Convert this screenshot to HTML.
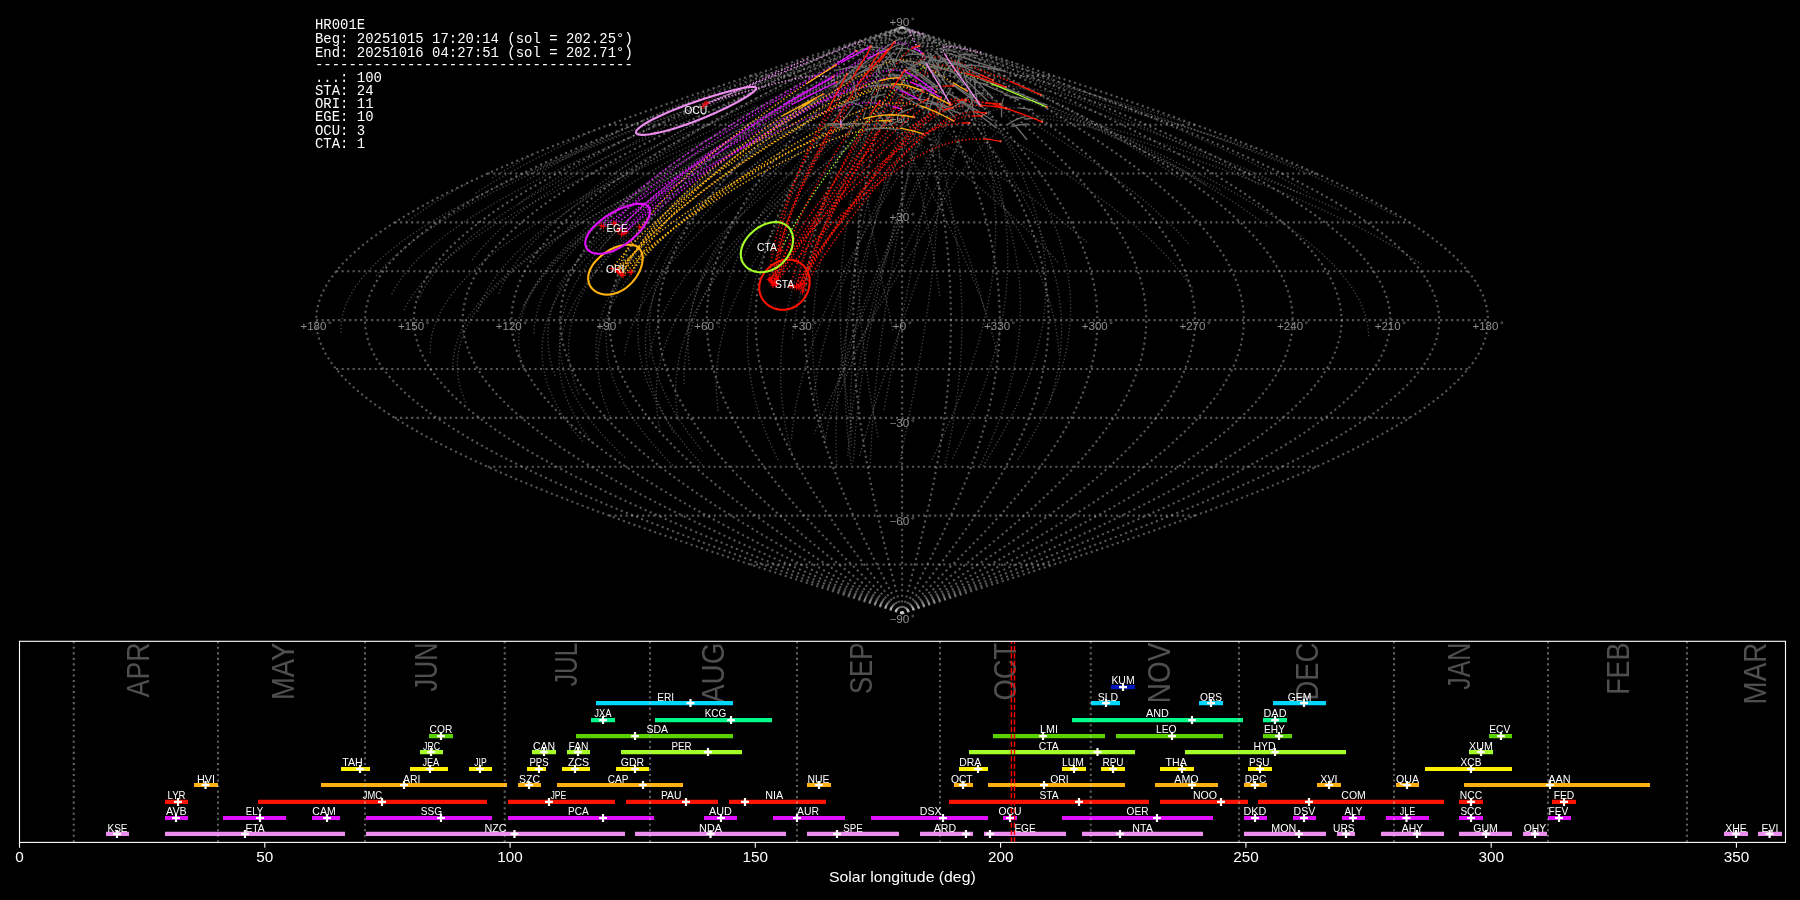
<!DOCTYPE html>
<html><head><meta charset="utf-8"><title>HR001E shower association</title>
<style>html,body{margin:0;padding:0;background:#000;overflow:hidden}svg{display:block}text{white-space:pre}</style></head>
<body>
<svg width="1800" height="900" viewBox="0 0 1800 900">
<defs><filter id="nf" color-interpolation-filters="sRGB"><feOffset dx="0" dy="0"/></filter></defs>
<rect width="1800" height="900" fill="#000"/>
<g fill="none" stroke="#c8c8c8" stroke-opacity="0.44" stroke-width="2.08" stroke-dasharray="2.08 3.43"><path d="M902.1 613.4L927.7 605.2L953.2 597.1L978.6 588.9L1003.9 580.8L1028.9 572.6L1053.8 564.5L1078.3 556.4L1102.5 548.2L1126.3 540.1L1149.8 531.9L1172.7 523.8L1195.1 515.6L1217 507.5L1238.2 499.3L1258.8 491.2L1278.8 483L1298 474.9L1316.5 466.8L1334.1 458.6L1351 450.5L1367 442.3L1382.1 434.2L1396.3 426L1409.6 417.9L1421.9 409.7L1433.2 401.6L1443.5 393.5L1452.8 385.3L1461 377.2L1468.1 369L1474.2 360.9L1479.2 352.7L1483.1 344.6L1485.9 336.4L1487.5 328.3L1488.1 320.1L1487.5 312L1485.9 303.9L1483.1 295.7L1479.2 287.6L1474.2 279.4L1468.1 271.3L1461 263.1L1452.8 255L1443.5 246.8L1433.2 238.7L1421.9 230.6L1409.6 222.4L1396.3 214.3L1382.1 206.1L1367 198L1351 189.8L1334.1 181.7L1316.5 173.5L1298 165.4L1278.8 157.2L1258.8 149.1L1238.2 141L1217 132.8L1195.1 124.7L1172.7 116.5L1149.8 108.4L1126.3 100.2L1102.5 92.1L1078.3 83.9L1053.8 75.8L1028.9 67.7L1003.9 59.5L978.6 51.4L953.2 43.2L927.7 35.1L902.1 26.9"/><path d="M902.1 613.4L925.5 605.2L948.9 597.1L972.2 588.9L995.4 580.8L1018.4 572.6L1041.1 564.5L1063.6 556.4L1085.8 548.2L1107.7 540.1L1129.1 531.9L1150.1 523.8L1170.7 515.6L1190.7 507.5L1210.2 499.3L1229.1 491.2L1247.4 483L1265 474.9L1281.9 466.8L1298.1 458.6L1313.6 450.5L1328.3 442.3L1342.1 434.2L1355.1 426L1367.3 417.9L1378.6 409.7L1388.9 401.6L1398.4 393.5L1406.9 385.3L1414.4 377.2L1421 369L1426.5 360.9L1431.1 352.7L1434.7 344.6L1437.2 336.4L1438.7 328.3L1439.3 320.1L1438.7 312L1437.2 303.9L1434.7 295.7L1431.1 287.6L1426.5 279.4L1421 271.3L1414.4 263.1L1406.9 255L1398.4 246.8L1388.9 238.7L1378.6 230.6L1367.3 222.4L1355.1 214.3L1342.1 206.1L1328.3 198L1313.6 189.8L1298.1 181.7L1281.9 173.5L1265 165.4L1247.4 157.2L1229.1 149.1L1210.2 141L1190.7 132.8L1170.7 124.7L1150.1 116.5L1129.1 108.4L1107.7 100.2L1085.8 92.1L1063.6 83.9L1041.1 75.8L1018.4 67.7L995.4 59.5L972.2 51.4L948.9 43.2L925.5 35.1L902.1 26.9"/><path d="M902.1 613.4L923.4 605.2L944.7 597.1L965.8 588.9L986.9 580.8L1007.8 572.6L1028.5 564.5L1048.9 556.4L1069.1 548.2L1089 540.1L1108.5 531.9L1127.6 523.8L1146.3 515.6L1164.5 507.5L1182.2 499.3L1199.4 491.2L1216 483L1232 474.9L1247.4 466.8L1262.1 458.6L1276.2 450.5L1289.5 442.3L1302.1 434.2L1313.9 426L1325 417.9L1335.2 409.7L1344.7 401.6L1353.3 393.5L1361 385.3L1367.8 377.2L1373.8 369L1378.8 360.9L1383 352.7L1386.2 344.6L1388.6 336.4L1390 328.3L1390.4 320.1L1390 312L1388.6 303.9L1386.2 295.7L1383 287.6L1378.8 279.4L1373.8 271.3L1367.8 263.1L1361 255L1353.3 246.8L1344.7 238.7L1335.2 230.6L1325 222.4L1313.9 214.3L1302.1 206.1L1289.5 198L1276.2 189.8L1262.1 181.7L1247.4 173.5L1232 165.4L1216 157.2L1199.4 149.1L1182.2 141L1164.5 132.8L1146.3 124.7L1127.6 116.5L1108.5 108.4L1089 100.2L1069.1 92.1L1048.9 83.9L1028.5 75.8L1007.8 67.7L986.9 59.5L965.8 51.4L944.7 43.2L923.4 35.1L902.1 26.9"/><path d="M902.1 613.4L921.3 605.2L940.4 597.1L959.5 588.9L978.4 580.8L997.2 572.6L1015.8 564.5L1034.3 556.4L1052.4 548.2L1070.3 540.1L1087.8 531.9L1105 523.8L1121.8 515.6L1138.2 507.5L1154.2 499.3L1169.6 491.2L1184.6 483L1199 474.9L1212.9 466.8L1226.1 458.6L1238.8 450.5L1250.8 442.3L1262.1 434.2L1272.8 426L1282.7 417.9L1291.9 409.7L1300.4 401.6L1308.1 393.5L1315.1 385.3L1321.3 377.2L1326.6 369L1331.2 360.9L1334.9 352.7L1337.8 344.6L1339.9 336.4L1341.2 328.3L1341.6 320.1L1341.2 312L1339.9 303.9L1337.8 295.7L1334.9 287.6L1331.2 279.4L1326.6 271.3L1321.3 263.1L1315.1 255L1308.1 246.8L1300.4 238.7L1291.9 230.6L1282.7 222.4L1272.8 214.3L1262.1 206.1L1250.8 198L1238.8 189.8L1226.1 181.7L1212.9 173.5L1199 165.4L1184.6 157.2L1169.6 149.1L1154.2 141L1138.2 132.8L1121.8 124.7L1105 116.5L1087.8 108.4L1070.3 100.2L1052.4 92.1L1034.3 83.9L1015.8 75.8L997.2 67.7L978.4 59.5L959.5 51.4L940.4 43.2L921.3 35.1L902.1 26.9"/><path d="M902.1 613.4L919.1 605.2L936.1 597.1L953.1 588.9L969.9 580.8L986.7 572.6L1003.2 564.5L1019.6 556.4L1035.7 548.2L1051.6 540.1L1067.2 531.9L1082.5 523.8L1097.4 515.6L1112 507.5L1126.2 499.3L1139.9 491.2L1153.2 483L1166 474.9L1178.3 466.8L1190.1 458.6L1201.4 450.5L1212 442.3L1222.1 434.2L1231.6 426L1240.4 417.9L1248.6 409.7L1256.2 401.6L1263 393.5L1269.2 385.3L1274.7 377.2L1279.4 369L1283.5 360.9L1286.8 352.7L1289.4 344.6L1291.3 336.4L1292.4 328.3L1292.8 320.1L1292.4 312L1291.3 303.9L1289.4 295.7L1286.8 287.6L1283.5 279.4L1279.4 271.3L1274.7 263.1L1269.2 255L1263 246.8L1256.2 238.7L1248.6 230.6L1240.4 222.4L1231.6 214.3L1222.1 206.1L1212 198L1201.4 189.8L1190.1 181.7L1178.3 173.5L1166 165.4L1153.2 157.2L1139.9 149.1L1126.2 141L1112 132.8L1097.4 124.7L1082.5 116.5L1067.2 108.4L1051.6 100.2L1035.7 92.1L1019.6 83.9L1003.2 75.8L986.7 67.7L969.9 59.5L953.1 51.4L936.1 43.2L919.1 35.1L902.1 26.9"/><path d="M902.1 613.4L917 605.2L931.9 597.1L946.7 588.9L961.5 580.8L976.1 572.6L990.6 564.5L1004.9 556.4L1019 548.2L1032.9 540.1L1046.6 531.9L1059.9 523.8L1073 515.6L1085.8 507.5L1098.2 499.3L1110.2 491.2L1121.8 483L1133 474.9L1143.8 466.8L1154.1 458.6L1164 450.5L1173.3 442.3L1182.1 434.2L1190.4 426L1198.1 417.9L1205.3 409.7L1211.9 401.6L1217.9 393.5L1223.3 385.3L1228.1 377.2L1232.3 369L1235.8 360.9L1238.7 352.7L1241 344.6L1242.6 336.4L1243.6 328.3L1243.9 320.1L1243.6 312L1242.6 303.9L1241 295.7L1238.7 287.6L1235.8 279.4L1232.3 271.3L1228.1 263.1L1223.3 255L1217.9 246.8L1211.9 238.7L1205.3 230.6L1198.1 222.4L1190.4 214.3L1182.1 206.1L1173.3 198L1164 189.8L1154.1 181.7L1143.8 173.5L1133 165.4L1121.8 157.2L1110.2 149.1L1098.2 141L1085.8 132.8L1073 124.7L1059.9 116.5L1046.6 108.4L1032.9 100.2L1019 92.1L1004.9 83.9L990.6 75.8L976.1 67.7L961.5 59.5L946.7 51.4L931.9 43.2L917 35.1L902.1 26.9"/><path d="M902.1 613.4L914.9 605.2L927.6 597.1L940.3 588.9L953 580.8L965.5 572.6L977.9 564.5L990.2 556.4L1002.3 548.2L1014.2 540.1L1025.9 531.9L1037.4 523.8L1048.6 515.6L1059.5 507.5L1070.2 499.3L1080.5 491.2L1090.4 483L1100 474.9L1109.3 466.8L1118.1 458.6L1126.5 450.5L1134.5 442.3L1142.1 434.2L1149.2 426L1155.8 417.9L1162 409.7L1167.6 401.6L1172.8 393.5L1177.4 385.3L1181.5 377.2L1185.1 369L1188.1 360.9L1190.6 352.7L1192.6 344.6L1194 336.4L1194.8 328.3L1195.1 320.1L1194.8 312L1194 303.9L1192.6 295.7L1190.6 287.6L1188.1 279.4L1185.1 271.3L1181.5 263.1L1177.4 255L1172.8 246.8L1167.6 238.7L1162 230.6L1155.8 222.4L1149.2 214.3L1142.1 206.1L1134.5 198L1126.5 189.8L1118.1 181.7L1109.3 173.5L1100 165.4L1090.4 157.2L1080.5 149.1L1070.2 141L1059.5 132.8L1048.6 124.7L1037.4 116.5L1025.9 108.4L1014.2 100.2L1002.3 92.1L990.2 83.9L977.9 75.8L965.5 67.7L953 59.5L940.3 51.4L927.6 43.2L914.9 35.1L902.1 26.9"/><path d="M902.1 613.4L912.8 605.2L923.4 597.1L934 588.9L944.5 580.8L954.9 572.6L965.3 564.5L975.5 556.4L985.6 548.2L995.5 540.1L1005.3 531.9L1014.8 523.8L1024.2 515.6L1033.3 507.5L1042.1 499.3L1050.7 491.2L1059 483L1067.1 474.9L1074.7 466.8L1082.1 458.6L1089.1 450.5L1095.8 442.3L1102.1 434.2L1108 426L1113.6 417.9L1118.7 409.7L1123.4 401.6L1127.7 393.5L1131.5 385.3L1135 377.2L1137.9 369L1140.5 360.9L1142.6 352.7L1144.2 344.6L1145.3 336.4L1146 328.3L1146.3 320.1L1146 312L1145.3 303.9L1144.2 295.7L1142.6 287.6L1140.5 279.4L1137.9 271.3L1135 263.1L1131.5 255L1127.7 246.8L1123.4 238.7L1118.7 230.6L1113.6 222.4L1108 214.3L1102.1 206.1L1095.8 198L1089.1 189.8L1082.1 181.7L1074.7 173.5L1067.1 165.4L1059 157.2L1050.7 149.1L1042.1 141L1033.3 132.8L1024.2 124.7L1014.8 116.5L1005.3 108.4L995.5 100.2L985.6 92.1L975.5 83.9L965.3 75.8L954.9 67.7L944.5 59.5L934 51.4L923.4 43.2L912.8 35.1L902.1 26.9"/><path d="M902.1 613.4L910.6 605.2L919.1 597.1L927.6 588.9L936 580.8L944.4 572.6L952.7 564.5L960.8 556.4L968.9 548.2L976.8 540.1L984.7 531.9L992.3 523.8L999.8 515.6L1007.1 507.5L1014.1 499.3L1021 491.2L1027.7 483L1034.1 474.9L1040.2 466.8L1046.1 458.6L1051.7 450.5L1057.1 442.3L1062.1 434.2L1066.8 426L1071.3 417.9L1075.4 409.7L1079.1 401.6L1082.6 393.5L1085.7 385.3L1088.4 377.2L1090.8 369L1092.8 360.9L1094.5 352.7L1095.8 344.6L1096.7 336.4L1097.2 328.3L1097.4 320.1L1097.2 312L1096.7 303.9L1095.8 295.7L1094.5 287.6L1092.8 279.4L1090.8 271.3L1088.4 263.1L1085.7 255L1082.6 246.8L1079.1 238.7L1075.4 230.6L1071.3 222.4L1066.8 214.3L1062.1 206.1L1057.1 198L1051.7 189.8L1046.1 181.7L1040.2 173.5L1034.1 165.4L1027.7 157.2L1021 149.1L1014.1 141L1007.1 132.8L999.8 124.7L992.3 116.5L984.7 108.4L976.8 100.2L968.9 92.1L960.8 83.9L952.7 75.8L944.4 67.7L936 59.5L927.6 51.4L919.1 43.2L910.6 35.1L902.1 26.9"/><path d="M902.1 613.4L908.5 605.2L914.9 597.1L921.2 588.9L927.5 580.8L933.8 572.6L940 564.5L946.2 556.4L952.2 548.2L958.2 540.1L964 531.9L969.7 523.8L975.3 515.6L980.8 507.5L986.1 499.3L991.3 491.2L996.3 483L1001.1 474.9L1005.7 466.8L1010.1 458.6L1014.3 450.5L1018.3 442.3L1022.1 434.2L1025.7 426L1029 417.9L1032 409.7L1034.9 401.6L1037.4 393.5L1039.8 385.3L1041.8 377.2L1043.6 369L1045.1 360.9L1046.4 352.7L1047.3 344.6L1048 336.4L1048.5 328.3L1048.6 320.1L1048.5 312L1048 303.9L1047.3 295.7L1046.4 287.6L1045.1 279.4L1043.6 271.3L1041.8 263.1L1039.8 255L1037.4 246.8L1034.9 238.7L1032 230.6L1029 222.4L1025.7 214.3L1022.1 206.1L1018.3 198L1014.3 189.8L1010.1 181.7L1005.7 173.5L1001.1 165.4L996.3 157.2L991.3 149.1L986.1 141L980.8 132.8L975.3 124.7L969.7 116.5L964 108.4L958.2 100.2L952.2 92.1L946.2 83.9L940 75.8L933.8 67.7L927.5 59.5L921.2 51.4L914.9 43.2L908.5 35.1L902.1 26.9"/><path d="M902.1 613.4L906.4 605.2L910.6 597.1L914.8 588.9L919.1 580.8L923.2 572.6L927.4 564.5L931.5 556.4L935.5 548.2L939.5 540.1L943.4 531.9L947.2 523.8L950.9 515.6L954.6 507.5L958.1 499.3L961.6 491.2L964.9 483L968.1 474.9L971.2 466.8L974.1 458.6L976.9 450.5L979.6 442.3L982.1 434.2L984.5 426L986.7 417.9L988.7 409.7L990.6 401.6L992.3 393.5L993.9 385.3L995.2 377.2L996.4 369L997.4 360.9L998.3 352.7L998.9 344.6L999.4 336.4L999.7 328.3L999.8 320.1L999.7 312L999.4 303.9L998.9 295.7L998.3 287.6L997.4 279.4L996.4 271.3L995.2 263.1L993.9 255L992.3 246.8L990.6 238.7L988.7 230.6L986.7 222.4L984.5 214.3L982.1 206.1L979.6 198L976.9 189.8L974.1 181.7L971.2 173.5L968.1 165.4L964.9 157.2L961.6 149.1L958.1 141L954.6 132.8L950.9 124.7L947.2 116.5L943.4 108.4L939.5 100.2L935.5 92.1L931.5 83.9L927.4 75.8L923.2 67.7L919.1 59.5L914.8 51.4L910.6 43.2L906.4 35.1L902.1 26.9"/><path d="M902.1 613.4L904.2 605.2L906.4 597.1L908.5 588.9L910.6 580.8L912.7 572.6L914.7 564.5L916.8 556.4L918.8 548.2L920.8 540.1L922.7 531.9L924.6 523.8L926.5 515.6L928.3 507.5L930.1 499.3L931.8 491.2L933.5 483L935.1 474.9L936.6 466.8L938.1 458.6L939.5 450.5L940.8 442.3L942.1 434.2L943.3 426L944.4 417.9L945.4 409.7L946.4 401.6L947.2 393.5L948 385.3L948.7 377.2L949.3 369L949.8 360.9L950.2 352.7L950.5 344.6L950.7 336.4L950.9 328.3L950.9 320.1L950.9 312L950.7 303.9L950.5 295.7L950.2 287.6L949.8 279.4L949.3 271.3L948.7 263.1L948 255L947.2 246.8L946.4 238.7L945.4 230.6L944.4 222.4L943.3 214.3L942.1 206.1L940.8 198L939.5 189.8L938.1 181.7L936.6 173.5L935.1 165.4L933.5 157.2L931.8 149.1L930.1 141L928.3 132.8L926.5 124.7L924.6 116.5L922.7 108.4L920.8 100.2L918.8 92.1L916.8 83.9L914.7 75.8L912.7 67.7L910.6 59.5L908.5 51.4L906.4 43.2L904.2 35.1L902.1 26.9"/><path d="M902.1 613.4L902.1 605.2L902.1 597.1L902.1 588.9L902.1 580.8L902.1 572.6L902.1 564.5L902.1 556.4L902.1 548.2L902.1 540.1L902.1 531.9L902.1 523.8L902.1 515.6L902.1 507.5L902.1 499.3L902.1 491.2L902.1 483L902.1 474.9L902.1 466.8L902.1 458.6L902.1 450.5L902.1 442.3L902.1 434.2L902.1 426L902.1 417.9L902.1 409.7L902.1 401.6L902.1 393.5L902.1 385.3L902.1 377.2L902.1 369L902.1 360.9L902.1 352.7L902.1 344.6L902.1 336.4L902.1 328.3L902.1 320.1L902.1 312L902.1 303.9L902.1 295.7L902.1 287.6L902.1 279.4L902.1 271.3L902.1 263.1L902.1 255L902.1 246.8L902.1 238.7L902.1 230.6L902.1 222.4L902.1 214.3L902.1 206.1L902.1 198L902.1 189.8L902.1 181.7L902.1 173.5L902.1 165.4L902.1 157.2L902.1 149.1L902.1 141L902.1 132.8L902.1 124.7L902.1 116.5L902.1 108.4L902.1 100.2L902.1 92.1L902.1 83.9L902.1 75.8L902.1 67.7L902.1 59.5L902.1 51.4L902.1 43.2L902.1 35.1L902.1 26.9"/><path d="M902.1 613.4L900 605.2L897.8 597.1L895.7 588.9L893.6 580.8L891.5 572.6L889.5 564.5L887.4 556.4L885.4 548.2L883.4 540.1L881.5 531.9L879.6 523.8L877.7 515.6L875.9 507.5L874.1 499.3L872.4 491.2L870.7 483L869.1 474.9L867.6 466.8L866.1 458.6L864.7 450.5L863.4 442.3L862.1 434.2L860.9 426L859.8 417.9L858.8 409.7L857.8 401.6L857 393.5L856.2 385.3L855.5 377.2L854.9 369L854.4 360.9L854 352.7L853.7 344.6L853.5 336.4L853.3 328.3L853.3 320.1L853.3 312L853.5 303.9L853.7 295.7L854 287.6L854.4 279.4L854.9 271.3L855.5 263.1L856.2 255L857 246.8L857.8 238.7L858.8 230.6L859.8 222.4L860.9 214.3L862.1 206.1L863.4 198L864.7 189.8L866.1 181.7L867.6 173.5L869.1 165.4L870.7 157.2L872.4 149.1L874.1 141L875.9 132.8L877.7 124.7L879.6 116.5L881.5 108.4L883.4 100.2L885.4 92.1L887.4 83.9L889.5 75.8L891.5 67.7L893.6 59.5L895.7 51.4L897.8 43.2L900 35.1L902.1 26.9"/><path d="M902.1 613.4L897.8 605.2L893.6 597.1L889.4 588.9L885.1 580.8L881 572.6L876.8 564.5L872.7 556.4L868.7 548.2L864.7 540.1L860.8 531.9L857 523.8L853.3 515.6L849.6 507.5L846.1 499.3L842.6 491.2L839.3 483L836.1 474.9L833 466.8L830.1 458.6L827.3 450.5L824.6 442.3L822.1 434.2L819.7 426L817.5 417.9L815.5 409.7L813.6 401.6L811.9 393.5L810.3 385.3L809 377.2L807.8 369L806.8 360.9L805.9 352.7L805.3 344.6L804.8 336.4L804.5 328.3L804.4 320.1L804.5 312L804.8 303.9L805.3 295.7L805.9 287.6L806.8 279.4L807.8 271.3L809 263.1L810.3 255L811.9 246.8L813.6 238.7L815.5 230.6L817.5 222.4L819.7 214.3L822.1 206.1L824.6 198L827.3 189.8L830.1 181.7L833 173.5L836.1 165.4L839.3 157.2L842.6 149.1L846.1 141L849.6 132.8L853.3 124.7L857 116.5L860.8 108.4L864.7 100.2L868.7 92.1L872.7 83.9L876.8 75.8L881 67.7L885.1 59.5L889.4 51.4L893.6 43.2L897.8 35.1L902.1 26.9"/><path d="M902.1 613.4L895.7 605.2L889.3 597.1L883 588.9L876.7 580.8L870.4 572.6L864.2 564.5L858 556.4L852 548.2L846 540.1L840.2 531.9L834.5 523.8L828.9 515.6L823.4 507.5L818.1 499.3L812.9 491.2L807.9 483L803.1 474.9L798.5 466.8L794.1 458.6L789.9 450.5L785.9 442.3L782.1 434.2L778.5 426L775.2 417.9L772.2 409.7L769.3 401.6L766.8 393.5L764.4 385.3L762.4 377.2L760.6 369L759.1 360.9L757.8 352.7L756.9 344.6L756.2 336.4L755.7 328.3L755.6 320.1L755.7 312L756.2 303.9L756.9 295.7L757.8 287.6L759.1 279.4L760.6 271.3L762.4 263.1L764.4 255L766.8 246.8L769.3 238.7L772.2 230.6L775.2 222.4L778.5 214.3L782.1 206.1L785.9 198L789.9 189.8L794.1 181.7L798.5 173.5L803.1 165.4L807.9 157.2L812.9 149.1L818.1 141L823.4 132.8L828.9 124.7L834.5 116.5L840.2 108.4L846 100.2L852 92.1L858 83.9L864.2 75.8L870.4 67.7L876.7 59.5L883 51.4L889.3 43.2L895.7 35.1L902.1 26.9"/><path d="M902.1 613.4L893.6 605.2L885.1 597.1L876.6 588.9L868.2 580.8L859.8 572.6L851.5 564.5L843.4 556.4L835.3 548.2L827.4 540.1L819.5 531.9L811.9 523.8L804.4 515.6L797.1 507.5L790.1 499.3L783.2 491.2L776.5 483L770.1 474.9L764 466.8L758.1 458.6L752.5 450.5L747.1 442.3L742.1 434.2L737.4 426L732.9 417.9L728.8 409.7L725.1 401.6L721.6 393.5L718.5 385.3L715.8 377.2L713.4 369L711.4 360.9L709.7 352.7L708.4 344.6L707.5 336.4L707 328.3L706.8 320.1L707 312L707.5 303.9L708.4 295.7L709.7 287.6L711.4 279.4L713.4 271.3L715.8 263.1L718.5 255L721.6 246.8L725.1 238.7L728.8 230.6L732.9 222.4L737.4 214.3L742.1 206.1L747.1 198L752.5 189.8L758.1 181.7L764 173.5L770.1 165.4L776.5 157.2L783.2 149.1L790.1 141L797.1 132.8L804.4 124.7L811.9 116.5L819.5 108.4L827.4 100.2L835.3 92.1L843.4 83.9L851.5 75.8L859.8 67.7L868.2 59.5L876.6 51.4L885.1 43.2L893.6 35.1L902.1 26.9"/><path d="M902.1 613.4L891.4 605.2L880.8 597.1L870.2 588.9L859.7 580.8L849.3 572.6L838.9 564.5L828.7 556.4L818.6 548.2L808.7 540.1L798.9 531.9L789.4 523.8L780 515.6L770.9 507.5L762.1 499.3L753.5 491.2L745.2 483L737.1 474.9L729.5 466.8L722.1 458.6L715.1 450.5L708.4 442.3L702.1 434.2L696.2 426L690.6 417.9L685.5 409.7L680.8 401.6L676.5 393.5L672.7 385.3L669.2 377.2L666.3 369L663.7 360.9L661.6 352.7L660 344.6L658.9 336.4L658.2 328.3L657.9 320.1L658.2 312L658.9 303.9L660 295.7L661.6 287.6L663.7 279.4L666.3 271.3L669.2 263.1L672.7 255L676.5 246.8L680.8 238.7L685.5 230.6L690.6 222.4L696.2 214.3L702.1 206.1L708.4 198L715.1 189.8L722.1 181.7L729.5 173.5L737.1 165.4L745.2 157.2L753.5 149.1L762.1 141L770.9 132.8L780 124.7L789.4 116.5L798.9 108.4L808.7 100.2L818.6 92.1L828.7 83.9L838.9 75.8L849.3 67.7L859.7 59.5L870.2 51.4L880.8 43.2L891.4 35.1L902.1 26.9"/><path d="M902.1 613.4L889.3 605.2L876.6 597.1L863.9 588.9L851.2 580.8L838.7 572.6L826.3 564.5L814 556.4L801.9 548.2L790 540.1L778.3 531.9L766.8 523.8L755.6 515.6L744.7 507.5L734 499.3L723.7 491.2L713.8 483L704.2 474.9L694.9 466.8L686.1 458.6L677.7 450.5L669.7 442.3L662.1 434.2L655 426L648.4 417.9L642.2 409.7L636.6 401.6L631.4 393.5L626.8 385.3L622.7 377.2L619.1 369L616.1 360.9L613.6 352.7L611.6 344.6L610.2 336.4L609.4 328.3L609.1 320.1L609.4 312L610.2 303.9L611.6 295.7L613.6 287.6L616.1 279.4L619.1 271.3L622.7 263.1L626.8 255L631.4 246.8L636.6 238.7L642.2 230.6L648.4 222.4L655 214.3L662.1 206.1L669.7 198L677.7 189.8L686.1 181.7L694.9 173.5L704.2 165.4L713.8 157.2L723.7 149.1L734 141L744.7 132.8L755.6 124.7L766.8 116.5L778.3 108.4L790 100.2L801.9 92.1L814 83.9L826.3 75.8L838.7 67.7L851.2 59.5L863.9 51.4L876.6 43.2L889.3 35.1L902.1 26.9"/><path d="M902.1 613.4L887.2 605.2L872.3 597.1L857.5 588.9L842.7 580.8L828.1 572.6L813.6 564.5L799.3 556.4L785.2 548.2L771.3 540.1L757.6 531.9L744.3 523.8L731.2 515.6L718.4 507.5L706 499.3L694 491.2L682.4 483L671.2 474.9L660.4 466.8L650.1 458.6L640.2 450.5L630.9 442.3L622.1 434.2L613.8 426L606.1 417.9L598.9 409.7L592.3 401.6L586.3 393.5L580.9 385.3L576.1 377.2L571.9 369L568.4 360.9L565.5 352.7L563.2 344.6L561.6 336.4L560.6 328.3L560.3 320.1L560.6 312L561.6 303.9L563.2 295.7L565.5 287.6L568.4 279.4L571.9 271.3L576.1 263.1L580.9 255L586.3 246.8L592.3 238.7L598.9 230.6L606.1 222.4L613.8 214.3L622.1 206.1L630.9 198L640.2 189.8L650.1 181.7L660.4 173.5L671.2 165.4L682.4 157.2L694 149.1L706 141L718.4 132.8L731.2 124.7L744.3 116.5L757.6 108.4L771.3 100.2L785.2 92.1L799.3 83.9L813.6 75.8L828.1 67.7L842.7 59.5L857.5 51.4L872.3 43.2L887.2 35.1L902.1 26.9"/><path d="M902.1 613.4L885.1 605.2L868.1 597.1L851.1 588.9L834.3 580.8L817.5 572.6L801 564.5L784.6 556.4L768.5 548.2L752.6 540.1L737 531.9L721.7 523.8L706.8 515.6L692.2 507.5L678 499.3L664.3 491.2L651 483L638.2 474.9L625.9 466.8L614.1 458.6L602.8 450.5L592.2 442.3L582.1 434.2L572.6 426L563.8 417.9L555.6 409.7L548 401.6L541.2 393.5L535 385.3L529.5 377.2L524.8 369L520.7 360.9L517.4 352.7L514.8 344.6L512.9 336.4L511.8 328.3L511.4 320.1L511.8 312L512.9 303.9L514.8 295.7L517.4 287.6L520.7 279.4L524.8 271.3L529.5 263.1L535 255L541.2 246.8L548 238.7L555.6 230.6L563.8 222.4L572.6 214.3L582.1 206.1L592.2 198L602.8 189.8L614.1 181.7L625.9 173.5L638.2 165.4L651 157.2L664.3 149.1L678 141L692.2 132.8L706.8 124.7L721.7 116.5L737 108.4L752.6 100.2L768.5 92.1L784.6 83.9L801 75.8L817.5 67.7L834.3 59.5L851.1 51.4L868.1 43.2L885.1 35.1L902.1 26.9"/><path d="M902.1 613.4L882.9 605.2L863.8 597.1L844.7 588.9L825.8 580.8L807 572.6L788.4 564.5L769.9 556.4L751.8 548.2L733.9 540.1L716.4 531.9L699.2 523.8L682.4 515.6L666 507.5L650 499.3L634.6 491.2L619.6 483L605.2 474.9L591.3 466.8L578.1 458.6L565.4 450.5L553.4 442.3L542.1 434.2L531.4 426L521.5 417.9L512.3 409.7L503.8 401.6L496.1 393.5L489.1 385.3L482.9 377.2L477.6 369L473 360.9L469.3 352.7L466.4 344.6L464.3 336.4L463 328.3L462.6 320.1L463 312L464.3 303.9L466.4 295.7L469.3 287.6L473 279.4L477.6 271.3L482.9 263.1L489.1 255L496.1 246.8L503.8 238.7L512.3 230.6L521.5 222.4L531.4 214.3L542.1 206.1L553.4 198L565.4 189.8L578.1 181.7L591.3 173.5L605.2 165.4L619.6 157.2L634.6 149.1L650 141L666 132.8L682.4 124.7L699.2 116.5L716.4 108.4L733.9 100.2L751.8 92.1L769.9 83.9L788.4 75.8L807 67.7L825.8 59.5L844.7 51.4L863.8 43.2L882.9 35.1L902.1 26.9"/><path d="M902.1 613.4L880.8 605.2L859.5 597.1L838.4 588.9L817.3 580.8L796.4 572.6L775.7 564.5L755.3 556.4L735.1 548.2L715.2 540.1L695.7 531.9L676.6 523.8L657.9 515.6L639.7 507.5L622 499.3L604.8 491.2L588.2 483L572.2 474.9L556.8 466.8L542.1 458.6L528 450.5L514.7 442.3L502.1 434.2L490.3 426L479.2 417.9L469 409.7L459.5 401.6L450.9 393.5L443.2 385.3L436.4 377.2L430.4 369L425.4 360.9L421.2 352.7L418 344.6L415.6 336.4L414.2 328.3L413.8 320.1L414.2 312L415.6 303.9L418 295.7L421.2 287.6L425.4 279.4L430.4 271.3L436.4 263.1L443.2 255L450.9 246.8L459.5 238.7L469 230.6L479.2 222.4L490.3 214.3L502.1 206.1L514.7 198L528 189.8L542.1 181.7L556.8 173.5L572.2 165.4L588.2 157.2L604.8 149.1L622 141L639.7 132.8L657.9 124.7L676.6 116.5L695.7 108.4L715.2 100.2L735.1 92.1L755.3 83.9L775.7 75.8L796.4 67.7L817.3 59.5L838.4 51.4L859.5 43.2L880.8 35.1L902.1 26.9"/><path d="M902.1 613.4L878.7 605.2L855.3 597.1L832 588.9L808.8 580.8L785.8 572.6L763.1 564.5L740.6 556.4L718.4 548.2L696.5 540.1L675.1 531.9L654.1 523.8L633.5 515.6L613.5 507.5L594 499.3L575.1 491.2L556.8 483L539.2 474.9L522.3 466.8L506.1 458.6L490.6 450.5L475.9 442.3L462.1 434.2L449.1 426L436.9 417.9L425.6 409.7L415.3 401.6L405.8 393.5L397.3 385.3L389.8 377.2L383.2 369L377.7 360.9L373.1 352.7L369.5 344.6L367 336.4L365.5 328.3L364.9 320.1L365.5 312L367 303.9L369.5 295.7L373.1 287.6L377.7 279.4L383.2 271.3L389.8 263.1L397.3 255L405.8 246.8L415.3 238.7L425.6 230.6L436.9 222.4L449.1 214.3L462.1 206.1L475.9 198L490.6 189.8L506.1 181.7L522.3 173.5L539.2 165.4L556.8 157.2L575.1 149.1L594 141L613.5 132.8L633.5 124.7L654.1 116.5L675.1 108.4L696.5 100.2L718.4 92.1L740.6 83.9L763.1 75.8L785.8 67.7L808.8 59.5L832 51.4L855.3 43.2L878.7 35.1L902.1 26.9"/><path d="M902.1 613.4L876.5 605.2L851 597.1L825.6 588.9L800.3 580.8L775.3 572.6L750.4 564.5L725.9 556.4L701.7 548.2L677.9 540.1L654.4 531.9L631.5 523.8L609.1 515.6L587.2 507.5L566 499.3L545.4 491.2L525.4 483L506.2 474.9L487.7 466.8L470.1 458.6L453.2 450.5L437.2 442.3L422.1 434.2L407.9 426L394.6 417.9L382.3 409.7L371 401.6L360.7 393.5L351.4 385.3L343.2 377.2L336.1 369L330 360.9L325 352.7L321.1 344.6L318.3 336.4L316.7 328.3L316.1 320.1L316.7 312L318.3 303.9L321.1 295.7L325 287.6L330 279.4L336.1 271.3L343.2 263.1L351.4 255L360.7 246.8L371 238.7L382.3 230.6L394.6 222.4L407.9 214.3L422.1 206.1L437.2 198L453.2 189.8L470.1 181.7L487.7 173.5L506.2 165.4L525.4 157.2L545.4 149.1L566 141L587.2 132.8L609.1 124.7L631.5 116.5L654.4 108.4L677.9 100.2L701.7 92.1L725.9 83.9L750.4 75.8L775.3 67.7L800.3 59.5L825.6 51.4L851 43.2L876.5 35.1L902.1 26.9"/><path d="M750.4 564.5L1053.8 564.5"/><path d="M609.1 515.6L1195.1 515.6"/><path d="M487.7 466.8L1316.5 466.8"/><path d="M394.6 417.9L1409.6 417.9"/><path d="M336.1 369.0L1468.1 369.0"/><path d="M316.1 320.1L1488.1 320.1"/><path d="M336.1 271.3L1468.1 271.3"/><path d="M394.6 222.4L1409.6 222.4"/><path d="M487.7 173.5L1316.5 173.5"/><path d="M609.1 124.7L1195.1 124.7"/><path d="M750.4 75.8L1053.8 75.8"/></g>
<g filter="url(#nf)" font-family="Liberation Sans, sans-serif" font-size="10.5" fill="#8e8e8e"><text x="1472.4" y="329.5" textLength="26.0" lengthAdjust="spacingAndGlyphs">+180</text><circle cx="1501.8" cy="322.7" r="1.0" fill="none" stroke="#8e8e8e" stroke-width="0.6"/><text x="1374.7" y="329.5" textLength="26.0" lengthAdjust="spacingAndGlyphs">+210</text><circle cx="1404.1" cy="322.7" r="1.0" fill="none" stroke="#8e8e8e" stroke-width="0.6"/><text x="1277.1" y="329.5" textLength="26.0" lengthAdjust="spacingAndGlyphs">+240</text><circle cx="1306.4" cy="322.7" r="1.0" fill="none" stroke="#8e8e8e" stroke-width="0.6"/><text x="1179.4" y="329.5" textLength="26.0" lengthAdjust="spacingAndGlyphs">+270</text><circle cx="1208.8" cy="322.7" r="1.0" fill="none" stroke="#8e8e8e" stroke-width="0.6"/><text x="1081.8" y="329.5" textLength="26.0" lengthAdjust="spacingAndGlyphs">+300</text><circle cx="1111.1" cy="322.7" r="1.0" fill="none" stroke="#8e8e8e" stroke-width="0.6"/><text x="984.1" y="329.5" textLength="26.0" lengthAdjust="spacingAndGlyphs">+330</text><circle cx="1013.4" cy="322.7" r="1.0" fill="none" stroke="#8e8e8e" stroke-width="0.6"/><text x="892.4" y="329.5" textLength="13.9" lengthAdjust="spacingAndGlyphs">+0</text><circle cx="909.8" cy="322.7" r="1.0" fill="none" stroke="#8e8e8e" stroke-width="0.6"/><text x="791.8" y="329.5" textLength="19.9" lengthAdjust="spacingAndGlyphs">+30</text><circle cx="815.1" cy="322.7" r="1.0" fill="none" stroke="#8e8e8e" stroke-width="0.6"/><text x="694.1" y="329.5" textLength="19.9" lengthAdjust="spacingAndGlyphs">+60</text><circle cx="717.4" cy="322.7" r="1.0" fill="none" stroke="#8e8e8e" stroke-width="0.6"/><text x="596.4" y="329.5" textLength="19.9" lengthAdjust="spacingAndGlyphs">+90</text><circle cx="619.8" cy="322.7" r="1.0" fill="none" stroke="#8e8e8e" stroke-width="0.6"/><text x="495.8" y="329.5" textLength="26.0" lengthAdjust="spacingAndGlyphs">+120</text><circle cx="525.1" cy="322.7" r="1.0" fill="none" stroke="#8e8e8e" stroke-width="0.6"/><text x="398.1" y="329.5" textLength="26.0" lengthAdjust="spacingAndGlyphs">+150</text><circle cx="427.5" cy="322.7" r="1.0" fill="none" stroke="#8e8e8e" stroke-width="0.6"/><text x="300.4" y="329.5" textLength="26.0" lengthAdjust="spacingAndGlyphs">+180</text><circle cx="329.8" cy="322.7" r="1.0" fill="none" stroke="#8e8e8e" stroke-width="0.6"/><text x="889.4" y="25.6" textLength="19.9" lengthAdjust="spacingAndGlyphs">+90</text><circle cx="912.8" cy="18.8" r="1.0" fill="none" stroke="#8e8e8e" stroke-width="0.6"/><text x="889.4" y="123.4" textLength="19.9" lengthAdjust="spacingAndGlyphs">+60</text><circle cx="912.8" cy="116.6" r="1.0" fill="none" stroke="#8e8e8e" stroke-width="0.6"/><text x="889.4" y="221.1" textLength="19.9" lengthAdjust="spacingAndGlyphs">+30</text><circle cx="912.8" cy="214.3" r="1.0" fill="none" stroke="#8e8e8e" stroke-width="0.6"/><text x="889.4" y="427.3" textLength="19.9" lengthAdjust="spacingAndGlyphs">−30</text><circle cx="912.8" cy="420.5" r="1.0" fill="none" stroke="#8e8e8e" stroke-width="0.6"/><text x="889.4" y="525.0" textLength="19.9" lengthAdjust="spacingAndGlyphs">−60</text><circle cx="912.8" cy="518.2" r="1.0" fill="none" stroke="#8e8e8e" stroke-width="0.6"/><text x="889.4" y="622.8" textLength="19.9" lengthAdjust="spacingAndGlyphs">−90</text><circle cx="912.8" cy="616.0" r="1.0" fill="none" stroke="#8e8e8e" stroke-width="0.6"/></g>
<g fill="none" stroke="#b4b4b4" stroke-opacity="0.38" stroke-width="1.3" stroke-dasharray="1.30 2.15"><path d="M928.1 113.3L926.3 119.1L924.5 124.9L922.7 130.9L920.9 136.9L919 143L917.2 149.1L915.4 155.3L913.5 161.5L911.6 167.7L909.7 174L907.8 180.3L905.9 186.6L904 192.9L902.1 199.3L900.2 205.6L898.3 212L896.4 218.4L894.5 224.8L892.7 231.2L890.8 237.6L888.9 244L887.1 250.5L885.3 256.9L883.5 263.3L881.7 269.8L879.9 276.2L878.2 282.7L876.5 289.1L874.8 295.6L873.2 302.1L871.6 308.5L870 315L868.5 321.4L867 327.9L865.5 334.4L864.1 340.8L862.8 347.3L861.4 353.7L860.2 360.2L859 366.6L857.8 373.1L856.7 379.5L855.6 386L854.6 392.4L853.7 398.8L852.8 405.2L852 411.7L851.2 418.1L850.5 424.4L849.8 430.8L849.2 437.2L848.7 443.6L848.2 449.9L847.8 456.2"/><path d="M940.7 81.6L946.2 88.3L951.7 95L957.1 101.7L962.4 108.3L967.6 115L972.8 121.7L977.9 128.4L982.9 135.1L987.8 141.8L992.5 148.5L997.2 155.2L1001.7 161.9L1006.1 168.6L1010.4 175.3L1014.6 182.1L1018.5 188.8L1022.4 195.5L1026.1 202.2L1029.6 208.9L1033 215.6L1036.2 222.3L1039.2 229L1042 235.7L1044.7 242.5L1047.2 249.2L1049.4 255.9L1051.5 262.6L1053.4 269.3L1055.2 276L1056.7 282.7L1058 289.4L1059.1 296.2L1060 302.9L1060.7 309.6L1061.2 316.3L1061.5 323L1061.6 329.7L1061.5 336.4L1061.1 343.2L1060.6 349.9L1059.9 356.6L1058.9 363.3L1057.8 370L1056.4 376.7L1054.9 383.4L1053.2 390.2L1051.2 396.9L1049.1 403.6"/><path d="M1011.6 126.5L1006.8 128.2L1002.2 130.1L998 132.5L994 135.1L990.2 138L986.5 141.2L983 144.7L979.6 148.4L976.3 152.3L973.1 156.4L969.8 160.6L966.7 165L963.5 169.6L960.3 174.2L957.2 179L954 183.9L950.8 188.9L947.6 194L944.4 199.1L941.1 204.3L937.9 209.6L934.6 215L931.3 220.3L927.9 225.8L924.6 231.2L921.2 236.8L917.8 242.3L914.5 247.9L911.1 253.5L907.6 259.1L904.2 264.8L900.8 270.4L897.4 276.1L894 281.8L890.6 287.5L887.2 293.3L883.8 299L880.4 304.7L877.1 310.5L873.8 316.2L870.5 322L867.2 327.7L864 333.5L860.8 339.2L857.7 344.9L854.6 350.7L851.5 356.4L848.5 362.1L845.5 367.8L842.6 373.5L839.7 379.1L836.9 384.7L834.1 390.4L831.4 395.9L828.8 401.5L826.2 407L823.7 412.5L821.2 418L818.8 423.4L816.5 428.7L814.2 434"/><path d="M943 75.7L941.6 80.2L940.5 85.2L939.5 90.5L938.7 96L937.9 101.7L937.1 107.5L936.4 113.5L935.6 119.5L934.9 125.7L934.1 131.8L933.3 138.1L932.5 144.4L931.6 150.7L930.7 157.1L929.8 163.5L928.9 169.9L927.9 176.3L926.9 182.8L925.9 189.2L924.9 195.7L923.8 202.2L922.7 208.7L921.6 215.2L920.4 221.7L919.3 228.3L918.1 234.8L916.9 241.3L915.6 247.9L914.4 254.4L913.1 261L911.9 267.5L910.6 274.1L909.3 280.7L908 287.2L906.7 293.8L905.4 300.3L904.1 306.9L902.7 313.5L901.4 320L900.1 326.6L898.8 333.2L897.5 339.8L896.1 346.3L894.8 352.9L893.6 359.4L892.3 366L891 372.6L889.7 379.1L888.5 385.7L887.3 392.2L886.1 398.8L884.9 405.3L883.7 411.8"/><path d="M966.7 112.2L965 116.9L963.4 121.7L961.9 126.8L960.4 132L958.9 137.3L957.5 142.8L956 148.4L954.6 154.1L953.1 159.8L951.6 165.6L950 171.5L948.4 177.5L946.8 183.5L945.1 189.5L943.4 195.6L941.7 201.7L939.9 207.8L938.1 213.9L936.3 220.1L934.4 226.3L932.5 232.5L930.5 238.8L928.6 245L926.5 251.3L924.5 257.5L922.4 263.8L920.4 270.1L918.3 276.4L916.1 282.7L914 289L911.9 295.3L909.7 301.6L907.5 307.9L905.3 314.3L903.2 320.6L901 326.9L898.8 333.2L896.6 339.5L894.5 345.9L892.3 352.2L890.1 358.5L888 364.8L885.9 371.1L883.8 377.4L881.7 383.6L879.6 389.9L877.6 396.2L875.6 402.4L873.6 408.6L871.7 414.9L869.8 421.1L867.9 427.2L866 433.4L864.2 439.5L862.4 445.6L860.7 451.7L859 457.7"/><path d="M919.1 83.7L913 79.4L907 75.6L901.1 72.4L895.1 70L889 68.5L882.6 68.1L875.7 68.6L868.1 70.2L859.9 72.7L851 75.9L841.5 79.7L831.4 84.1L821 88.8L810.2 93.9L799.1 99.2L787.9 104.7L776.6 110.4L765.2 116.1L753.8 122L742.4 128L731.1 134L719.9 140.1L708.8 146.3L697.9 152.4L687.1 158.7L676.5 164.9L666.2 171.2L656.1 177.5L646.2 183.8L636.6 190.2L627.3 196.5L618.4 202.9L609.7 209.3L601.3 215.7L593.3 222.1L585.7 228.5L578.4 235L571.5 241.4L565 247.8L558.9 254.3L553.2 260.7L547.9 267.2L543.1 273.6L538.6 280.1L534.6 286.6L531.1 293L527.9 299.5L525.3 305.9L523 312.4L521.3 318.9L520 325.3L519.1 331.8L518.7 338.3L518.8 344.8L519.3 351.2L520.3 357.7L521.8 364.1L523.7 370.6"/><path d="M877.5 112.3L874 107.8L870.3 103.6L866.6 99.8L862.6 96.3L858.5 93.3L854 90.9L849 89L843.6 87.8L837.5 87.2L830.7 87.4L823.1 88.2L814.7 89.8L805.4 91.9L795.4 94.6L784.6 97.8L773.2 101.5L761.3 105.5L748.8 109.8L736 114.4L722.9 119.3L709.6 124.3L696.1 129.5L682.6 134.8L668.9 140.3L655.4 145.9L641.8 151.5L628.4 157.3L615.1 163.1L602 169L589.1 174.9L576.4 180.9L564 186.9L551.9 192.9L540.2 199L528.7 205.1L517.7 211.2L507 217.4L496.7 223.5L486.9 229.7L477.5 235.9L468.5 242.2L460 248.4L452 254.6L444.5 260.9L437.5 267.2L431 273.4L425.1 279.7L419.6 286L414.8 292.3L410.4 298.6L406.7 304.9L403.5 311.2"/><path d="M1018.1 107.9L1011.1 107.7L1004.8 108L999.1 108.8L994 110.1L989.3 111.9L985.1 114.1L981.2 116.7L977.5 119.7L974.1 123.1L970.9 126.7L967.9 130.7L964.9 134.8L962 139.2L959.2 143.8L956.4 148.6L953.7 153.4L950.9 158.5L948.2 163.6L945.4 168.9L942.6 174.2L939.8 179.7L937 185.2L934.2 190.7L931.3 196.3L928.5 202L925.6 207.8L922.7 213.5L919.8 219.3L916.8 225.2L913.9 231.1L910.9 237L907.9 242.9L904.9 248.8L902 254.8L899 260.8L896 266.8L893 272.8L890.1 278.8L887.1 284.9L884.2 290.9L881.3 296.9L878.4 303L875.5 309.1L872.7 315.1L869.9 321.2L867.1 327.3L864.4 333.3L861.7 339.4L859 345.4L856.4 351.5L853.8 357.5L851.3 363.5L848.9 369.6L846.4 375.6L844.1 381.6L841.8 387.6L839.6 393.5L837.4 399.5L835.3 405.4L833.2 411.3"/><path d="M897.7 48.6L890.6 50.8L882.7 54.6L874.2 59.3L865.2 64.6L855.8 70.4L846.2 76.4L836.5 82.6L826.7 88.9L816.9 95.2L807.2 101.7L797.4 108.2L787.8 114.7L778.3 121.3L768.9 127.9L759.6 134.5L750.5 141.1L741.6 147.7L732.8 154.4L724.3 161L716 167.7L707.9 174.4L700.1 181.1L692.5 187.8L685.1 194.5L678.1 201.2L671.3 207.9L664.8 214.6L658.7 221.3L652.8 228L647.3 234.7L642.1 241.4L637.2 248.1L632.7 254.8L628.5 261.5L624.7 268.3L621.2 275L618.1 281.7L615.4 288.4L613 295.1"/><path d="M856.1 97.5L856.7 103L857.3 108.6L857.8 114.4L858.4 120.3L858.9 126.2L859.5 132.3L860.1 138.4L860.7 144.6L861.3 150.8L862 157.1L862.7 163.4L863.4 169.7L864.2 176.1L865 182.5L865.9 188.8L866.8 195.3L867.7 201.7L868.7 208.1L869.7 214.6L870.8 221L871.9 227.5L873 234L874.2 240.5L875.4 247L876.6 253.5L877.9 260L879.2 266.5L880.5 273L881.8 279.5L883.2 286.1L884.6 292.6L886 299.1L887.4 305.6L888.9 312.1L890.3 318.7L891.8 325.2L893.3 331.7"/><path d="M863.7 59.7L871.2 52.8L878.7 46L886.1 39.2L893.3 32.6"/><path d="M911 29.9L922.7 35.9L936.4 42.6L950.1 49.4L963.9 56.3L977.6 63.1L991.3 70L1004.8 76.9L1018.1 83.7L1031.4 90.6L1044.4 97.5L1057.3 104.4L1069.9 111.2L1082.4 118.1L1094.5 125L1106.5 131.9L1118.1 138.7L1129.4 145.6L1140.5 152.5L1151.2 159.4L1161.6 166.2L1171.6 173.1L1181.3 180"/><path d="M827.1 123.9L820 124.5L812.7 125.5L805.1 126.9L797.1 128.6L788.8 130.7L780.2 133.2L771.3 135.9L762.1 139L752.7 142.3L743.1 145.8L733.3 149.6L723.3 153.6L713.1 157.7L702.9 162L692.6 166.5L682.3 171.1L671.9 175.8L661.6 180.6L651.3 185.6L641.1 190.6L631 195.7L621 200.9L611.2 206.1L601.5 211.4L592 216.8L582.7 222.2L573.7 227.7L564.9 233.2L556.3 238.7L548 244.3L540.1 249.9L532.4 255.5L525 261.1L518 266.8L511.3 272.5L505 278.2L499 283.9L493.4 289.6L488.2 295.4L483.4 301.1L479 306.8L475 312.6L471.4 318.4L468.2 324.1L465.4 329.9L463 335.6L461 341.4L459.5 347.1L458.3 352.8L457.6 358.6L457.3 364.3L457.4 370L457.9 375.6L458.8 381.3L460.1 386.9L461.8 392.5L463.8 398.1L466.2 403.7"/><path d="M916 90.6L909.8 92.4L903.7 94.8L897.6 97.6L891.5 101L885.3 104.8L879.1 108.9L872.8 113.4L866.4 118.1L860 123L853.5 128.1L847 133.3L840.5 138.7L834 144.3L827.5 149.9L821 155.6L814.5 161.4L808.1 167.2L801.8 173.2L795.5 179.1L789.3 185.1L783.2 191.2L777.2 197.3L771.4 203.4L765.6 209.5L760 215.7L754.6 221.9L749.3 228.1L744.2 234.4L739.2 240.6L734.4 246.9L729.8 253.2L725.4 259.5L721.1 265.7L717.1 272.1L713.3 278.4L709.7 284.7L706.4 291L703.2 297.3L700.3 303.7L697.6 310L695.2 316.3L693 322.7L691 329L689.3 335.3L687.8 341.7L686.5 348L685.5 354.3L684.8 360.7L684.3 367L684.1 373.3L684.1 379.6L684.3 385.9"/><path d="M872.2 97.7L865 100.5L857.5 103.7L849.9 107.3L842 111.2L834 115.5L825.9 120L817.6 124.7L809.2 129.6L800.8 134.7L792.3 139.9L783.8 145.3L775.3 150.7L766.8 156.3L758.4 161.9L750.1 167.6L741.8 173.4L733.7 179.2L725.7 185.1L717.8 191L710 197L702.5 203L695.1 209L687.9 215L680.9 221.1L674.2 227.2L667.7 233.3L661.4 239.4L655.4 245.6L649.6 251.8L644.1 257.9L638.9 264.1L633.9 270.3L629.3 276.5L624.9 282.7L620.9 288.9L617.2 295.2L613.7 301.4L610.7 307.6L607.9 313.8L605.4 320.1L603.3 326.3L601.5 332.5L600.1 338.8L599 345L598.2 351.2L597.8 357.4L597.7 363.6L597.9 369.8L598.5 376L599.4 382.2L600.6 388.4L602.1 394.5L604 400.7L606.1 406.8L608.6 412.9L611.4 419"/><path d="M880 48L883.5 50.8L886 55.1L888 60.1L889.8 65.7L891.5 71.6L893.1 77.8L894.7 84L896.3 90.4L898 96.8L899.6 103.3L901.2 109.9L902.8 116.4L904.5 123L906.1 129.6L907.7 136.3L909.3 142.9L910.9 149.6L912.5 156.2L914.1 162.9L915.7 169.6L917.2 176.3L918.8 183L920.3 189.7L921.7 196.4L923.2 203.1L924.6 209.8L926 216.5L927.4 223.2L928.8 229.9L930.1 236.6L931.3 243.4L932.6 250.1L933.8 256.8L934.9 263.5L936 270.2L937.1 277L938.1 283.7L939.1 290.4L940 297.1"/><path d="M941.7 57.5L931.6 53.6L922.8 51L915.5 50.2L909.3 51.2L903.6 53.9L898 57.9L892.3 62.7L886.5 68L880.6 73.6L874.6 79.6L868.5 85.7L862.4 91.9L856.2 98.2L850.1 104.5L844 110.9L838 117.4L832 123.9L826.1 130.4L820.3 137L814.5 143.5L808.9 150.1L803.3 156.7L797.9 163.3L792.6 169.9L787.4 176.5L782.4 183.1L777.5 189.7L772.8 196.4L768.2 203L763.8 209.7L759.6 216.3L755.5 222.9L751.7 229.6L748 236.3L744.5 242.9L741.3 249.6L738.2 256.2L735.3 262.9L732.7 269.6L730.2 276.2L728 282.9L726 289.5L724.2 296.2L722.7 302.9L721.4 309.5L720.3 316.2L719.4 322.9L718.8 329.5"/><path d="M866.7 124.1L873.1 125.1L879.4 126.4L885.5 128.2L891.6 130.3L897.7 132.8L903.8 135.6L909.9 138.7L916 142L922.1 145.6L928.2 149.5L934.4 153.5L940.6 157.7L946.8 162.1L953 166.7L959.3 171.4L965.5 176.2L971.8 181.1L978 186.1L984.2 191.2L990.3 196.4L996.4 201.7L1002.5 207L1008.5 212.4L1014.5 217.9L1020.3 223.4L1026.1 228.9L1031.8 234.5L1037.3 240.1L1042.8 245.8L1048.1 251.5L1053.3 257.2L1058.4 262.9"/><path d="M978.3 105.1L979.6 110.7L980.9 116.4L982.2 122.2L983.6 128.2L984.9 134.2L986.2 140.3L987.4 146.4L988.6 152.6L989.7 158.8L990.7 165.1L991.6 171.4L992.5 177.7L993.2 184.1L993.9 190.5L994.4 196.8L994.9 203.2L995.2 209.7L995.4 216.1L995.6 222.5L995.6 229L995.5 235.5L995.3 241.9L995 248.4L994.6 254.9L994.1 261.4L993.4 267.9L992.7 274.4L991.8 280.9L990.8 287.4L989.8 293.9L988.6 300.4L987.3 306.9L985.9 313.4L984.4 319.9L982.8 326.4L981.1 332.9L979.3 339.4L977.5 345.9L975.5 352.4L973.4 358.9L971.3 365.4L969.1 371.9L966.8 378.4L964.4 384.9L961.9 391.4L959.4 397.9L956.8 404.3L954.1 410.8L951.4 417.3L948.6 423.7L945.7 430.1L942.9 436.5L939.9 443L937 449.3L933.9 455.7L930.9 462.1"/><path d="M927.5 63.1L919.8 60.4L912.6 59L905.9 58.8L899.4 60L892.8 62.5L885.9 65.9L878.7 70.1L871.3 74.8L863.6 80L855.7 85.4L847.7 91.1L839.7 96.9L831.6 102.9L823.4 109L815.3 115.1L807.2 121.4L799.2 127.6L791.2 133.9L783.3 140.3L775.6 146.7L768 153.1L760.5 159.5L753.2 166L746 172.4L739 178.9L732.2 185.4L725.6 191.9L719.2 198.4L713 204.9L707 211.5L701.3 218L695.8 224.5L690.6 231.1L685.6 237.6L680.9 244.2L676.5 250.7L672.3 257.3L668.4 263.9L664.8 270.4L661.5 277L658.5 283.5L655.8 290.1L653.4 296.7L651.3 303.3L649.5 309.8L648.1 316.4L646.9 323L646.1 329.5L645.6 336.1L645.4 342.7L645.5 349.3L645.9 355.8L646.7 362.4L647.7 369L649.1 375.5L650.8 382.1L652.8 388.7L655.1 395.2L657.7 401.8L660.7 408.3L663.9 414.9L667.4 421.4L671.1 427.9L675.2 434.5"/><path d="M842.8 82.9L833.5 88.8L824 94.8L814.6 101L805.1 107.2L795.7 113.5L786.3 119.8L777 126.2L767.9 132.6L758.8 139L749.9 145.5L741.2 151.9L732.6 158.4L724.2 165L716.1 171.5L708.1 178L700.4 184.6L692.9 191.1L685.7 197.7L678.7 204.2L672 210.8L665.6 217.4L659.4 224L653.6 230.6L648.1 237.2L642.9 243.7L638 250.3L633.4 256.9L629.2 263.5L625.3 270.1L621.8 276.7L618.6 283.4L615.8 290L613.3 296.6L611.2 303.2L609.4 309.8L608.1 316.4L607.1 323L606.4 329.6L606.1 336.2L606.2 342.8L606.7 349.4L607.5 356L608.7 362.6L610.3 369.2L612.3 375.8L614.6 382.4L617.2 389L620.2 395.6L623.6 402.2L627.3 408.8L631.3 415.4L635.7 422L640.4 428.6L645.5 435.1L650.8 441.7L656.5 448.3L662.4 454.8L668.6 461.4L675.1 467.9"/><path d="M906 55.3L899.9 57.9L893.8 61.5L887.5 66L881 71L874.4 76.4L867.6 82L860.8 87.8L853.9 93.8L847 99.9L840 106.1L833.1 112.4L826.3 118.7L819.4 125L812.7 131.4L806 137.8L799.5 144.2L793 150.7L786.7 157.2L780.5 163.6L774.4 170.1L768.5 176.6L762.7 183.1L757.1 189.7L751.7 196.2L746.4 202.7L741.3 209.3L736.5 215.8L731.8 222.4L727.3 228.9L723.1 235.5L719.1 242L715.3 248.6L711.7 255.2L708.4 261.7L705.3 268.3L702.4 274.9L699.8 281.5L697.4 288L695.3 294.6L693.5 301.2L691.9 307.7L690.6 314.3L689.5 320.9L688.7 327.5L688.2 334.1L687.9 340.6L687.9 347.2L688.2 353.8L688.7 360.3L689.5 366.9"/><path d="M1003.3 98.6L1004.9 95.4L1007.3 92.7L1010.6 90.6L1015 89.2L1020.6 88.5L1027.6 88.6L1036 89.4L1045.9 90.9L1057.3 93L1069.9 95.8L1083.7 99.1L1098.5 102.9L1114.3 107L1130.7 111.5L1147.8 116.3L1165.2 121.3L1183 126.5L1201.1 131.9L1219.2 137.4L1237.4 143.1L1255.5 148.9"/><path d="M532.1 154.8L521.4 160.7L510.9 166.8L500.6 172.9L490.7 179"/><path d="M868.3 86.5L860.7 88.4L852.8 90.9L844.5 93.9L835.8 97.5L826.7 101.4L817.4 105.7L807.8 110.3L798 115.1L788.1 120.2L778 125.4L767.9 130.8L757.7 136.3L747.6 141.9L737.4 147.7L727.4 153.4L717.4 159.3L707.5 165.2L697.8 171.2L688.2 177.2L678.8 183.3L669.6 189.4L660.7 195.6L651.9 201.7L643.4 207.9L635.2 214.1L627.2 220.4L619.6 226.6L612.2 232.9L605.2 239.2L598.5 245.4L592.1 251.8L586.1 258.1L580.4 264.4L575.1 270.7L570.2 277.1L565.6 283.4L561.4 289.7L557.7 296.1L554.3 302.4L551.3 308.8L548.8 315.2L546.6 321.5L544.9 327.9L543.5 334.2L542.6 340.6L542.1 346.9L542.1 353.3L542.4 359.6L543.1 366L544.3 372.3L545.9 378.6L547.8 385L550.2 391.3L553 397.6L556.1 403.8L559.6 410.1L563.5 416.4L567.8 422.6L572.4 428.8L577.4 435.1L582.7 441.2"/><path d="M847.5 101.5L841.5 100.7L834.9 100.5L827.9 100.9L820.3 101.8L812.2 103.3L803.5 105.3L794.3 107.8L784.5 110.7L774.2 114L763.6 117.7L752.5 121.7L741.1 125.9L729.5 130.4L717.7 135.1L705.7 139.9L693.6 144.9L681.4 150.1L669.3 155.4L657.2 160.8L645.1 166.3L633.1 171.9L621.3 177.5L609.6 183.2L598.1 189L586.9 194.8L575.9 200.7L565.2 206.6L554.7 212.5L544.6 218.5L534.8 224.5L525.4 230.5L516.3 236.6L507.6 242.7L499.3 248.8L491.5 254.9L484 261L477 267.2L470.5 273.3L464.4 279.5L458.8 285.6L453.7 291.8L449.1 298L445 304.2L441.3 310.4L438.2 316.6L435.6 322.8L433.5 329L431.9 335.2L430.8 341.3L430.3 347.5L430.2 353.7"/><path d="M972.8 99L975.1 104.9L977.3 110.8L979.6 116.9L981.8 123L984 129.2L986.1 135.5L988.2 141.8L990.2 148.1L992.1 154.4L993.9 160.8L995.6 167.2L997.2 173.6L998.7 180L1000.1 186.4L1001.4 192.9L1002.6 199.3L1003.7 205.8L1004.6 212.2L1005.5 218.7L1006.2 225.2L1006.7 231.7L1007.2 238.2L1007.5 244.7L1007.7 251.2L1007.8 257.7L1007.7 264.2L1007.5 270.7L1007.2 277.2L1006.8 283.8L1006.2 290.3L1005.5 296.8L1004.7 303.3L1003.8 309.8L1002.7 316.4L1001.5 322.9L1000.2 329.4L998.8 335.9L997.2 342.4L995.5 349L993.8 355.5L991.9 362L989.9 368.5L987.7 375L985.5 381.5L983.2 388.1L980.8 394.6L978.3 401.1L975.7 407.6L973 414L970.2 420.5L967.4 427L964.5 433.5L961.5 439.9L958.4 446.4L955.3 452.8L952.1 459.3"/><path d="M839.2 106.5L830.9 110.1L822.3 114.1L813.5 118.3L804.6 122.8L795.5 127.5L786.3 132.4L777 137.4L767.7 142.6L758.3 147.9L749 153.4L739.7 158.9L730.5 164.5L721.3 170.1L712.3 175.9L703.3 181.7L694.6 187.5L685.9 193.4L677.5 199.3L669.3 205.3L661.2 211.2L653.4 217.3L645.8 223.3L638.5 229.4L631.5 235.4L624.7 241.5L618.2 247.7L612 253.8L606.1 259.9L600.6 266.1L595.3 272.3L590.4 278.4L585.8 284.6L581.6 290.8L577.7 297L574.2 303.2L571 309.4L568.2 315.6L565.8 321.8L563.7 328L562 334.2L560.7 340.4L559.8 346.6L559.2 352.7L559 358.9L559.2 365.1L559.7 371.3L560.7 377.4L562 383.6L563.6 389.7L565.6 395.8L568 401.9L570.7 408L573.7 414.1L577.1 420.2L580.7 426.2L584.7 432.2L589 438.2L593.5 444.1"/><path d="M870.4 106.7L869.3 113.2L868.3 119.7L867.3 126.2L866.4 132.8L865.5 139.4L864.7 145.9L863.9 152.5L863.1 159.1L862.4 165.7L861.7 172.3L861.1 178.9L860.6 185.5L860 192.1L859.6 198.7L859.2 205.3L858.8 211.9L858.5 218.5L858.3 225.2L858.1 231.8L858 238.4L857.9 245L857.9 251.6L857.9 258.2L858 264.9L858.1 271.5L858.3 278.1L858.6 284.7L858.9 291.3L859.2 298L859.7 304.6L860.1 311.2L860.6 317.8L861.2 324.5L861.8 331.1L862.5 337.7L863.3 344.3L864 350.9L864.9 357.6L865.7 364.2L866.6 370.8L867.6 377.4L868.6 384L869.6 390.7L870.7 397.3L871.9 403.9L873 410.5L874.2 417.1L875.5 423.7L876.7 430.4L878 437"/><path d="M907.1 82.1L903.7 76.1L900.3 70.4L896.8 64.9L893.3 59.9L889.7 55.6L885.5 52.3L880.4 50.6L873.5 50.7L864.5 52.6L853.5 56L840.7 60.3L826.8 65.4L812.1 70.9L796.9 76.7L781.4 82.7L765.7 88.8L749.9 95.1L734.2 101.4L718.5 107.8L702.9 114.2L687.5 120.7L672.3 127.2L657.3 133.7L642.5 140.3L628.1 146.8L613.9 153.4L600.1 160L586.7 166.6L573.6 173.2L561 179.8L548.7 186.5L536.9 193.1L525.5 199.7L514.7 206.4L504.3 213L494.3 219.6L484.9 226.3L476.1 232.9L467.8 239.6L460 246.3L452.8 252.9L446.1 259.6L440 266.2L434.5 272.9L429.7 279.6L425.4 286.2L421.7 292.9L418.6 299.6"/><path d="M1004.9 95.2L997 94.3L990 94.1L983.8 94.4L978.3 95.4L973.4 97L969 99.2L965.1 101.8L961.6 105L958.3 108.5L955.2 112.4L952.3 116.6L949.5 121L946.8 125.7L944.1 130.6L941.5 135.7L938.8 140.9L936.2 146.2L933.6 151.7L931 157.2L928.3 162.9L925.7 168.6L923 174.4L920.4 180.2L917.7 186.1L915 192L912.3 198L909.5 204L906.8 210.1L904.1 216.1L901.4 222.2L898.6 228.4L895.9 234.5L893.2 240.7L890.5 246.9L887.8 253L885.1 259.3L882.4 265.5L879.8 271.7L877.2 277.9L874.6 284.2L872 290.4L869.5 296.7L867 302.9L864.5 309.2L862.1 315.5L859.8 321.7L857.4 328L855.2 334.2L853 340.5L850.8 346.8L848.7 353L846.7 359.2L844.7 365.5L842.8 371.7L840.9 377.9L839.1 384.2"/><path d="M937.7 67.9L937.4 72.9L937.3 78.3L937.4 84L937.6 89.8L937.8 95.7L938.1 101.8L938.3 108L938.5 114.2L938.7 120.5L938.9 126.8L939 133.1L939.2 139.5L939.2 145.9L939.3 152.3L939.3 158.7L939.2 165.2L939.1 171.6L939 178.1L938.8 184.6L938.6 191.1L938.4 197.6L938.1 204.1L937.7 210.6L937.3 217.1L936.9 223.6L936.4 230.2L935.9 236.7L935.4 243.2L934.8 249.7L934.1 256.3L933.5 262.8L932.8 269.4L932 275.9L931.2 282.4L930.4 289L929.5 295.5L928.7 302.1L927.7 308.6L926.8 315.2L925.8 321.7L924.8 328.3L923.7 334.8L922.7 341.4L921.6 347.9L920.5 354.4L919.3 361L918.2 367.5L917 374.1L915.8 380.6L914.6 387.1L913.3 393.7L912.1 400.2L910.8 406.7L909.6 413.3L908.3 419.8L907 426.3L905.7 432.8L904.4 439.3L903.1 445.8L901.8 452.3L900.5 458.8L899.2 465.3"/><path d="M893.8 111.2L898.3 105.9L902.8 100.8L907.3 96L911.8 91.5L916.3 87.4L921 83.8L925.8 80.8L931 78.4L936.5 76.9L942.7 76.1L949.5 76.3L957.2 77.3L965.7 79.2L975.1 81.8L985.4 85.1L996.3 88.9L1007.8 93.1L1019.9 97.7L1032.3 102.6L1045.1 107.8L1058.1 113.1L1071.2 118.6L1084.4 124.3L1097.6 130.1L1110.8 136L1123.9 141.9L1136.9 147.9L1149.8 154L1162.5 160.1L1175 166.3L1187.2 172.5L1199.1 178.8L1210.8 185L1222.2 191.3"/><path d="M886.9 64.5L885 59.4L882.8 54.9L880 51.3L875.7 49.3L869.2 49.1L859.9 50.9L848 54.2L833.9 58.6L818.4 63.7L802.1 69.2L785.1 75L767.8 81L750.3 87.1L732.7 93.4L715.2 99.7L697.7 106.1L680.4 112.5L663.2 118.9L646.3 125.4L629.6 131.9L613.2 138.4L597.1 144.9L581.4 151.5L566 158L551 164.6L536.5 171.2L522.4 177.7L508.7 184.3L495.5 190.9L482.9 197.5L470.7 204.1L459.1 210.7L448 217.3L437.5 223.9L427.6 230.5L418.2 237.2L409.5 243.8L401.4 250.4L393.9 257L387 263.6L380.8 270.2L375.3 276.9"/><path d="M944.1 58.7L941.6 53.6L940.3 49.5L941.6 46.8L947.1 46.2L957.8 47.9L973.2 51.3L991.9 56"/><path d="M798.2 61.3L784.8 67L770.8 73.1L756.4 79.2L741.9 85.5L727.4 91.9L712.9 98.4L698.5 104.9L684.3 111.4L670.3 118L656.5 124.5L643 131.1L629.7 137.8L616.8 144.4L604.3 151L592 157.7L580.2 164.3L568.8 171L557.7 177.6L547.2 184.3L537 191L527.3 197.6L518.1 204.3"/><path d="M965.5 69.7L959.6 63.6L954.1 57.8L949.6 52.6L946.8 48.4L947.4 45.8L953.5 45.5L966.3 47.6"/><path d="M830.4 51.6L821.1 56.6L810.1 62.2L798.3 68.2L786 74.5L773.5 80.9L760.9 87.4L748.2 93.9L735.7 100.6L723.3 107.2L711.1 113.9L699 120.7L687.2 127.4L675.6 134.2L664.3 140.9L653.3 147.7L642.6 154.5L632.3 161.3L622.3 168.1L612.6 174.9"/><path d="M937.2 103.4L944.8 106L952.5 109.2L960.4 112.7L968.6 116.6L976.9 120.7L985.4 125.2L994 129.9L1002.7 134.8L1011.4 139.8L1020.3 145.1L1029.1 150.4L1037.9 155.9L1046.8 161.5L1055.5 167.1L1064.2 172.9L1072.8 178.7L1081.3 184.6L1089.6 190.5L1097.8 196.5L1105.8 202.5L1113.7 208.5L1121.3 214.6L1128.8 220.8L1136 226.9L1143 233.1L1149.7 239.3L1156.1 245.5L1162.3 251.7L1168.2 258L1173.8 264.2L1179.2 270.5L1184.2 276.8L1188.8 283.1L1193.2 289.4"/><path d="M909.8 67L903.6 63.7L897.4 61.5L891 60.4L884.1 60.7L876.7 62.2L868.4 64.9L859.3 68.5L849.5 72.8L839.2 77.6L828.5 82.8L817.5 88.2L806.2 93.9L794.8 99.8L783.4 105.8L771.9 111.9L760.5 118.1L749.1 124.3L737.8 130.6L726.6 137L715.6 143.3L704.8 149.7L694.1 156.2L683.7 162.6L673.5 169.1L663.6 175.6L653.9 182.1L644.6 188.7L635.5 195.2L626.7 201.7L618.3 208.3L610.2 214.8L602.5 221.4L595.1 228L588.1 234.6L581.5 241.2L575.3 247.7L569.5 254.3L564.2 260.9L559.2 267.5L554.6 274.1L550.5 280.7L546.9 287.3L543.6 293.9L540.9 300.5L538.5 307.2L536.7 313.8L535.3 320.4L534.3 327L533.8 333.6"/><path d="M841.8 121.9L836.8 128.5L831.8 135.1L827 141.8L822.2 148.4L817.6 155L813 161.7L808.5 168.3L804.2 175L800 181.6L795.9 188.3L792 195L788.2 201.6L784.5 208.3L781 215L777.6 221.6L774.4 228.3L771.4 235L768.5 241.6L765.8 248.3L763.3 255L760.9 261.7L758.7 268.4L756.7 275L754.9 281.7L753.3 288.4L751.9 295.1L750.7 301.8L749.6 308.4L748.8 315.1L748.1 321.8L747.7 328.5L747.4 335.2L747.4 341.8L747.5 348.5L747.9 355.2L748.4 361.9L749.2 368.6L750.1 375.2L751.2 381.9L752.5 388.6L754.1 395.3L755.8 401.9L757.6 408.6L759.7 415.3L762 422L764.4 428.6L767 435.3L769.8 442L772.7 448.6L775.8 455.3L779.1 462"/><path d="M999.6 70.3L1013.8 74L1029.5 78.3L1046.3 83.2L1063.9 88.4L1082.2 93.9L1100.9 99.7L1119.8 105.6L1138.9 111.7L1158 117.8L1177.1 124.1L1196 130.4L1214.8 136.9L1233.3 143.3L1251.5 149.8L1269.4 156.3L1286.9 162.9L1304 169.5L1320.7 176.1"/><path d="M468.2 182.8L456.4 189.4L445 196.1L434.3 202.8L424.1 209.5L414.6 216.2L405.6 222.9"/><path d="M950.1 61.1L941.1 59L933.6 58.2L927.5 58.8L922.4 60.7L918 63.7L914 67.6L910.1 72.1L906.4 77.1L902.6 82.4L898.9 88L895.2 93.8L891.4 99.7L887.7 105.7L883.9 111.8L880.2 118L876.4 124.3L872.7 130.5L869 136.9L865.4 143.2L861.8 149.6L858.2 156L854.6 162.4L851.1 168.9L847.7 175.3L844.3 181.8L841 188.3L837.8 194.8L834.7 201.3L831.6 207.8L828.6 214.3L825.7 220.8L822.9 227.4L820.2 233.9L817.5 240.4L815 247L812.6 253.5L810.3 260L808.1 266.6L806.1 273.1L804.1 279.7L802.3 286.2L800.6 292.8L799 299.4L797.5 305.9L796.2 312.5L795 319L793.9 325.6L793 332.1L792.2 338.7"/><path d="M885.8 84.2L879.5 83.3L872.8 83.2L865.7 83.8L858.2 85.2L850.1 87.3L841.6 90.1L832.5 93.4L823 97.1L813.1 101.3L802.9 105.8L792.4 110.6L781.7 115.6L770.8 120.8L759.8 126.2L748.7 131.8L737.7 137.4L726.6 143.2L715.6 149L704.7 154.9L693.9 160.9L683.3 167L672.8 173.1L662.5 179.2L652.4 185.4L642.6 191.6L633 197.8L623.7 204.1L614.7 210.4L606 216.7L597.6 223L589.5 229.4L581.8 235.7L574.5 242.1L567.5 248.5L560.9 254.9L554.7 261.3L548.9 267.7L543.6 274.1L538.6 280.5L534.1 287L530 293.4L526.3 299.8L523.1 306.3"/><path d="M958.5 59.2L961.9 57.5L968.1 57.2L977.6 58.4L990.1 61L1005.3 64.6L1022.6 68.9L1041.4 73.9L1061.3 79.2"/><path d="M723.9 84.9L710.1 90.7L696.1 96.8L681.9 102.9L667.7 109.2L653.6 115.5L639.6 121.8L625.8 128.3L612.2 134.7L598.9 141.2L585.9 147.8L573.2 154.3L560.9 160.9L549 167.5L537.5 174.1L526.4 180.7"/><path d="M891.6 125L895.1 130.4L898.6 135.9L902 141.6L905.5 147.4L909 153.2L912.5 159.1L915.9 165.1L919.4 171.1L922.8 177.2L926.2 183.3L929.6 189.4L933 195.6L936.4 201.8L939.7 208L942.9 214.3L946.2 220.5L949.3 226.8L952.5 233.1L955.5 239.4L958.6 245.7L961.5 252.1L964.4 258.4L967.2 264.8L969.9 271.1L972.6 277.5L975.2 283.8L977.7 290.2L980.1 296.6L982.4 303L984.6 309.4L986.7 315.7L988.8 322.1L990.7 328.5L992.5 334.9L994.2 341.3L995.8 347.7L997.3 354"/><path d="M920 59.4L914.1 53.3L908.3 47.7L902.7 42.8L897.1 39.8L890.2 40L880.7 43.2L868.9 48.2L856.1 53.9L842.6 60L828.8 66.3L814.9 72.8L801 79.3L787.1 85.8L773.3 92.4L759.6 99L746 105.7L732.6 112.3L719.4 119L706.4 125.7L693.7 132.4L681.2 139.1L669 145.7L657.1 152.4L645.4 159.1L634.1 165.8L623.2 172.6L612.6 179.3L602.4 186L592.6 192.7L583.1 199.4L574.1 206.1L565.5 212.8L557.3 219.5L549.6 226.3L542.3 233L535.5 239.7L529.2 246.4L523.4 253.1L518 259.9L513.2 266.6L508.8 273.3L505 280L501.6 286.7L498.8 293.5"/><path d="M906.3 84.8L911.3 89.8L916.3 95L921.3 100.5L926.4 106.1L931.5 111.9L936.6 117.8L941.7 123.8L946.7 129.9L951.8 136L956.8 142.2L961.8 148.4L966.7 154.7L971.5 161L976.3 167.3L981.1 173.7L985.7 180L990.2 186.4L994.7 192.8L999 199.3L1003.3 205.7L1007.4 212.1L1011.4 218.6L1015.3 225.1L1019 231.5L1022.6 238L1026.1 244.5L1029.4 251L1032.5 257.5L1035.5 264L1038.4 270.5L1041 277L1043.5 283.5L1045.9 290L1048 296.5L1050 303L1051.8 309.6L1053.4 316.1L1054.9 322.6L1056.1 329.1L1057.2 335.6L1058 342.1L1058.7 348.7L1059.2 355.2"/><path d="M956.9 52.2L971.5 56.3L988.1 61.3L1005.9 66.8L1024.4 72.6L1043.5 78.7L1062.8 84.9L1082.2 91.2L1101.6 97.6L1120.9 104L1140.1 110.5L1159.1 117.1L1177.9 123.7L1196.4 130.2L1214.5 136.9L1232.3 143.5L1249.7 150.1L1266.7 156.8L1283.3 163.4L1299.4 170.1L1315 176.8L1330.1 183.5L1344.7 190.2L1358.6 196.8L1372.1 203.5L1384.9 210.2L1397.1 216.9"/><path d="M950.9 89.1L954 85.7L957.6 82.8L961.8 80.7L966.8 79.3L972.8 78.8L980 79.1L988.3 80.2L997.9 82.1L1008.7 84.7L1020.5 88L1033.3 91.7L1046.8 95.9L1061 100.5L1075.7 105.3L1090.8 110.5L1106.2 115.8L1121.7 121.3L1137.4 126.9L1153.1 132.6L1168.8 138.5L1184.4 144.4L1199.8 150.4L1215.1 156.4L1230.2 162.6L1244.9 168.7L1259.4 174.9L1273.6 181.2L1287.4 187.4L1300.8 193.7"/><path d="M888.4 49.6L880.6 54.5L872.3 60.1L863.9 66L855.2 72.1L846.5 78.3L837.7 84.6L829 91L820.3 97.4L811.7 103.8L803.1 110.3L794.6 116.8L786.3 123.3L778 129.8L769.9 136.3L762 142.9L754.2 149.4L746.6 156L739.2 162.5L732 169.1L725 175.6L718.2 182.2L711.6 188.8L705.3 195.4L699.2 201.9L693.4 208.5L687.8 215.1L682.5 221.7L677.4 228.3L672.7 234.9L668.2 241.4L664 248L660.1 254.6L656.5 261.2L653.2 267.8L650.2 274.4L647.6 281L645.2 287.6L643.2 294.2L641.5 300.8L640.1 307.3L639.1 313.9L638.3 320.5L637.9 327.1L637.9 333.7L638.1 340.3L638.7 346.9L639.7 353.5L640.9 360.1L642.5 366.7L644.4 373.3L646.6 379.9L649.1 386.4L652 393L655.1 399.6L658.6 406.2L662.4 412.8L666.5 419.4L670.8 426L675.5 432.5L680.4 439.1L685.6 445.7L691.1 452.3L696.8 458.8L702.8 465.4"/><path d="M894.4 62.5L891.3 69L888.2 75.5L885.1 82L882 88.5L879 95.1L876 101.6L873 108.2L870 114.8L867.1 121.4L864.2 128L861.3 134.6L858.5 141.2L855.8 147.8L853.1 154.4L850.5 161L848 167.7L845.5 174.3L843.1 180.9L840.7 187.5L838.4 194.1L836.3 200.7L834.2 207.4L832.1 214L830.2 220.6L828.4 227.2L826.6 233.8L825 240.4L823.4 247.1L822 253.7L820.6 260.3L819.4 266.9L818.2 273.6L817.2 280.2L816.2 286.8L815.4 293.4L814.7 300L814.1 306.7L813.6 313.3L813.2 319.9L812.9 326.5L812.7 333.2L812.7 339.8L812.8 346.4L812.9 353L813.2 359.6L813.6 366.3L814.1 372.9L814.8 379.5L815.5 386.1L816.3 392.8L817.3 399.4L818.3 406L819.5 412.6L820.7 419.2L822.1 425.9L823.6 432.5L825.1 439.1"/><path d="M930.1 54.1L925.7 47.9L921.7 42L919.1 37.1L921.9 35.2L935.8 38.1"/><path d="M854 43.3L839.8 49.3L824.8 55.7L809.5 62.1L794.2 68.6L778.9 75.2L763.7 81.8L748.6 88.4L733.7 95L718.9 101.7L704.4 108.3L690.1 115L676.1 121.6L662.3 128.3L648.9 134.9L635.8 141.6L623 148.3L610.5 154.9L598.4 161.6L586.8 168.3L575.5 174.9L564.6 181.6L554.1 188.3L544.1 195L534.6 201.6L525.5 208.3L516.9 215L508.8 221.6L501.2 228.3L494.1 235L487.6 241.7L481.5 248.3L476 255L471.1 261.7"/><path d="M925.1 72.8L924 78.4L922.9 84.1L921.9 90.1L920.9 96.1L919.9 102.2L918.9 108.5L917.9 114.7L916.9 121L915.8 127.4L914.8 133.8L913.7 140.2L912.6 146.6L911.6 153L910.5 159.5L909.4 166L908.3 172.4L907.1 178.9L906 185.4L904.9 191.9L903.8 198.5L902.6 205L901.5 211.5L900.3 218L899.2 224.6L898.1 231.1L897 237.6L895.8 244.2L894.7 250.7L893.6 257.3L892.5 263.8L891.5 270.4L890.4 276.9L889.3 283.5L888.3 290L887.3 296.6L886.3 303.2L885.3 309.7L884.4 316.3L883.4 322.8L882.5 329.4L881.6 335.9L880.7 342.5L879.9 349L879.1 355.6L878.3 362.1L877.6 368.7L876.8 375.3L876.1 381.8L875.5 388.3L874.8 394.9L874.3 401.4L873.7 408L873.2 414.5L872.7 421L872.2 427.6L871.8 434.1L871.4 440.6L871.1 447.1L870.8 453.6L870.5 460.2L870.2 466.6"/><path d="M946.3 84.9L950.1 91.5L953.9 98.1L957.7 104.8L961.4 111.4L965 118.1L968.5 124.7L972 131.4L975.3 138L978.6 144.7L981.8 151.4L984.9 158L987.8 164.7L990.7 171.4L993.4 178.1L996.1 184.7L998.6 191.4L1001 198.1L1003.2 204.8L1005.4 211.4L1007.4 218.1L1009.2 224.8L1011 231.5L1012.5 238.2L1014 244.8L1015.3 251.5L1016.5 258.2L1017.5 264.9L1018.3 271.6L1019.1 278.2L1019.6 284.9L1020 291.6L1020.3 298.3L1020.4 305L1020.4 311.6L1020.2 318.3L1019.9 325L1019.4 331.7L1018.7 338.4L1017.9 345L1017 351.7L1015.9 358.4L1014.7 365.1L1013.3 371.8L1011.8 378.4L1010.1 385.1L1008.3 391.8L1006.4 398.5L1004.4 405.2L1002.2 411.8L999.8 418.5L997.4 425.2L994.8 431.9L992.1 438.5L989.3 445.2L986.4 451.9L983.4 458.6L980.3 465.2"/><path d="M953 84.4L944.4 79.1L936.1 74.2L928.1 69.7L920.5 65.9L913.3 63L906.3 61.2L899.6 60.6L892.7 61.4L885.5 63.4L877.9 66.5L869.7 70.4L861.2 74.9L852.2 79.9L843 85.3L833.6 90.9L824.1 96.7L814.4 102.7L804.7 108.8L795.1 114.9L785.4 121.2L775.8 127.5L766.4 133.9L757 140.3L747.7 146.7L738.6 153.2L729.7 159.7L721 166.2L712.4 172.7L704.1 179.3L696 185.8L688.2 192.4L680.6 199L673.3 205.6L666.2 212.2L659.5 218.8L653 225.4L646.8 232.1L641 238.7L635.5 245.3"/><path d="M911.8 54.4L909.7 59.9L907.7 65.7L905.7 71.8L903.7 78L901.7 84.3L899.7 90.6L897.7 97L895.7 103.5L893.7 109.9L891.7 116.4L889.8 122.9L887.8 129.4L885.9 136L884 142.5L882.1 149L880.2 155.6L878.4 162.1L876.5 168.7L874.8 175.3L873 181.8L871.3 188.4L869.6 195L868 201.6L866.4 208.2L864.8 214.7L863.3 221.3L861.8 227.9L860.4 234.5L859.1 241.1L857.8 247.7L856.5 254.3L855.3 260.8L854.2 267.4L853.1 274L852.1 280.6L851.2 287.2L850.3 293.8L849.5 300.4L848.7 307L848 313.6L847.4 320.2L846.8 326.8L846.3 333.4L845.9 339.9L845.6 346.5L845.3 353.1L845.1 359.7L845 366.3L844.9 372.9L844.9 379.5L845 386.1L845.1 392.7L845.4 399.3L845.7 405.9L846 412.4L846.5 419L847 425.6L847.5 432.2L848.2 438.8L848.9 445.3L849.6 451.9L850.5 458.5L851.4 465.1"/><path d="M919 99.9L916.7 105.7L914.5 111.5L912.2 117.5L909.9 123.6L907.6 129.7L905.3 135.9L903 142.1L900.7 148.4L898.4 154.7L896.2 161.1L893.9 167.5L891.6 173.9L889.3 180.3L887.1 186.7L884.9 193.2L882.6 199.6L880.5 206.1L878.3 212.6L876.2 219.1L874.1 225.6L872 232.1L869.9 238.6L867.9 245.1L866 251.7L864.1 258.2L862.2 264.7L860.4 271.3L858.6 277.8L856.9 284.4L855.3 290.9L853.7 297.4L852.1 304L850.6 310.5L849.2 317.1L847.9 323.6L846.6 330.2L845.4 336.7L844.2 343.3L843.2 349.8L842.2 356.4L841.2 362.9L840.4 369.5L839.6 376L838.9 382.5L838.3 389.1L837.7 395.6L837.2 402.1L836.9 408.6L836.5 415.1L836.3 421.6L836.1 428.1L836.1 434.6L836.1 441.1L836.1 447.5L836.3 454L836.5 460.4L836.8 466.8"/><path d="M857.3 68.3L848.7 74.7L840.1 81.2L831.6 87.7L823.2 94.2L814.8 100.8L806.5 107.4L798.4 113.9L790.3 120.5L782.4 127.1L774.6 133.7L767 140.3L759.5 146.9L752.3 153.5L745.2 160.1L738.3 166.7L731.6 173.3L725.1 179.9L718.8 186.5L712.8 193.1L707 199.7L701.4 206.3L696.1 212.9L691.1 219.5L686.3 226.2L681.8 232.8L677.5 239.4L673.6 246L669.9 252.6L666.5 259.2L663.5 265.8L660.7 272.5L658.2 279.1L656 285.7L654.2 292.3L652.6 298.9L651.4 305.5L650.4 312.2L649.8 318.8L649.6 325.4L649.6 332L649.9 338.6L650.6 345.2L651.6 351.9L652.9 358.5L654.5 365.1L656.4 371.7L658.6 378.3L661.1 384.9L664 391.6L667.1 398.2L670.5 404.8L674.3 411.4L678.3 418L682.5 424.6L687.1 431.2L691.9 437.9L697 444.5L702.4 451.1"/><path d="M928.7 60.4L923.3 62L918.6 64.7L914.3 68.3L910.1 72.5L906.1 77.3L902.1 82.5L898 87.9L894 93.6L890 99.4L885.9 105.4L881.9 111.4L877.8 117.6L873.8 123.8L869.8 130L865.8 136.3L861.8 142.7L857.9 149L854 155.4L850.2 161.9L846.4 168.3L842.7 174.7L839 181.2L835.4 187.7L831.9 194.2L828.5 200.7L825.2 207.2L821.9 213.7L818.8 220.2L815.8 226.8L812.8 233.3L810 239.8L807.3 246.4L804.7 252.9L802.2 259.5L799.8 266L797.6 272.6L795.5 279.1L793.5 285.7L791.6 292.3L789.9 298.8L788.4 305.4L786.9 312L785.7 318.5L784.5 325.1L783.5 331.6L782.7 338.2L782 344.8L781.4 351.3L781 357.9L780.8 364.5L780.7 371L780.7 377.6L780.9 384.1L781.2 390.7L781.7 397.2L782.4 403.8L783.1 410.3L784.1 416.8L785.1 423.3L786.3 429.9L787.7 436.4L789.2 442.9L790.8 449.4L792.5 455.9"/><path d="M964.2 84.8L969.6 91.3L975 97.8L980.2 104.3L985.4 110.9L990.5 117.5L995.5 124.1L1000.4 130.6L1005.2 137.2L1009.8 143.8L1014.3 150.4L1018.7 157L1022.9 163.6L1027 170.2L1030.9 176.8L1034.7 183.4L1038.3 190L1041.7 196.6L1045 203.3L1048 209.9L1050.9 216.5L1053.6 223.1L1056.2 229.7L1058.5 236.3L1060.6 242.9L1062.5 249.6L1064.3 256.2L1065.8 262.8L1067.1 269.4L1068.2 276L1069.1 282.6L1069.8 289.3L1070.3 295.9L1070.5 302.5L1070.6 309.1L1070.4 315.7L1070.1 322.4L1069.5 329L1068.7 335.6L1067.7 342.2L1066.5 348.8L1065.1 355.4L1063.5 362.1L1061.7 368.7L1059.6 375.3L1057.4 381.9L1055 388.5L1052.4 395.1L1049.6 401.8L1046.6 408.4L1043.5 415L1040.1 421.6L1036.6 428.2L1033 434.8L1029.1 441.4L1025.1 448.1L1021 454.7L1016.7 461.3"/><path d="M915.4 62.2L909.1 63.2L903 65.2L896.9 68.3L890.7 72.1L884.4 76.5L877.9 81.3L871.4 86.5L864.7 92L857.9 97.6L851.1 103.4L844.3 109.4L837.4 115.4L830.6 121.5L823.8 127.7L817.1 133.9L810.4 140.2L803.8 146.5L797.3 152.8L790.9 159.2L784.6 165.5L778.4 172L772.4 178.4L766.5 184.8L760.7 191.3L755.2 197.7L749.8 204.2L744.5 210.7L739.5 217.2L734.6 223.7L730 230.2L725.5 236.7L721.3 243.2L717.3 249.7L713.5 256.2L709.9 262.8L706.6 269.3L703.5 275.8L700.7 282.4L698.1 288.9L695.7 295.4L693.6 302L691.8 308.5L690.2 315L688.9 321.6L687.8 328.1L687 334.7"/><path d="M886.6 51.2L882.7 48.4L877.1 47.4L869 48.6L858.1 51.5L845 55.8L830.4 60.8L814.9 66.3L798.7 72.1L782.2 78.1L765.5 84.3L748.7 90.5L731.9 96.9L715.2 103.2L698.6 109.7L682.2 116.1L666 122.6L650 129.1L634.3 135.7L618.9 142.2L603.8 148.8L589 155.3L574.7 161.9L560.7 168.5L547.1 175.1L534 181.7L521.3 188.3L509.1 194.9L497.3 201.5L486.1 208.1L475.4 214.7L465.2 221.3L455.6 227.9L446.5 234.6L438 241.2L430.1 247.8L422.8 254.4L416 261.1L409.9 267.7L404.4 274.3L399.6 280.9L395.3 287.6L391.7 294.2"/><path d="M970 91L969.5 86.1L969.4 81.5L969.8 77.5L971.1 74.1L973.4 71.4L977.2 69.7L982.7 69L990.3 69.4L1000 70.8L1011.8 73.2L1025.5 76.4L1040.8 80.3L1057.3 84.8L1074.8 89.6L1093.1 94.8L1111.9 100.2L1131.1 105.8L1150.6 111.6L1170.2 117.6L1189.7 123.6"/><path d="M595.7 129.8L582.2 136L568.9 142.3L555.8 148.6L543.1 155L530.6 161.4L518.5 167.8L506.9 174.3L495.6 180.8L484.8 187.3L474.5 193.8"/><path d="M1025.4 116.7L1031.1 115.9L1037.4 115.6L1044.3 115.7L1052 116.3L1060.3 117.4L1069.4 118.9L1079.1 120.8L1089.6 123.2L1100.6 125.9L1112.2 129L1124.4 132.3L1137 136L1149.9 139.9L1163.2 144L1176.8 148.3L1190.5 152.9L1204.4 157.5L1218.4 162.4L1232.5 167.3L1246.5 172.4L1260.4 177.6L1274.2 182.9L1287.9 188.2L1301.4 193.7L1314.6 199.2L1327.6 204.7L1340.3 210.4"/><path d="M916.7 73.4L918.8 80.1L920.8 86.7L922.8 93.4L924.8 100.1L926.8 106.8L928.7 113.5L930.6 120.1L932.5 126.8L934.3 133.5L936.1 140.2L937.8 146.9L939.5 153.6L941.2 160.2L942.8 166.9L944.3 173.6L945.8 180.3L947.3 187L948.6 193.6L950 200.3L951.2 207L952.4 213.7L953.5 220.4L954.6 227.1L955.6 233.7L956.5 240.4L957.4 247.1L958.2 253.8L958.9 260.5L959.5 267.1L960.1 273.8L960.6 280.5L961 287.2L961.3 293.9L961.6 300.6L961.8 307.2L961.9 313.9L962 320.6L961.9 327.3L961.8 334L961.6 340.6L961.4 347.3L961 354L960.6 360.7L960.1 367.4L959.5 374L958.9 380.7L958.2 387.4L957.4 394.1L956.5 400.8L955.6 407.5L954.6 414.1L953.5 420.8L952.4 427.5L951.2 434.2L950 440.9L948.7 447.5L947.3 454.2L945.8 460.9L944.4 467.6"/><path d="M944.4 107.7L937.1 105.5L929.9 103.8L923 102.6L916.2 101.9L909.5 101.9L902.8 102.4L896.2 103.4L889.5 105L882.7 107L875.9 109.6L868.9 112.5L861.8 115.9L854.6 119.6L847.2 123.5L839.8 127.8L832.2 132.2L824.6 136.9L816.9 141.7L809.2 146.8L801.4 151.9L793.6 157.2L785.9 162.5L778.2 168L770.5 173.5L762.9 179.2L755.4 184.8L748 190.6L740.7 196.4L733.5 202.2L726.5 208.1L719.6 214L712.9 220L706.3 225.9L700 231.9L693.8 238L687.8 244L682.1 250.1L676.6 256.2L671.3 262.3L666.2 268.4L661.5 274.5L656.9 280.7L652.6 286.8L648.6 292.9L644.9 299.1L641.5 305.3L638.3 311.4L635.4 317.6L632.8 323.8L630.5 329.9L628.5 336.1L626.8 342.2L625.4 348.4L624.3 354.5"/><path d="M876.5 65.2L869.6 65.5L861.8 66.9L853 69.3L843.3 72.6L832.7 76.5L821.5 80.9L809.7 85.8L797.5 91L785 96.4L772.3 102L759.5 107.8L746.6 113.7L733.7 119.6L720.9 125.7L708.1 131.8L695.5 138L683 144.3L670.7 150.5L658.6 156.9L646.7 163.2L635.1 169.5L623.8 175.9L612.7 182.3L602 188.8L591.6 195.2L581.6 201.6L571.9 208.1L562.7 214.6L553.8 221L545.3 227.5L537.3 234L529.7 240.5L522.5 247L515.8 253.5L509.6 260L503.8 266.5L498.6 273L493.8 279.6L489.5 286.1L485.7 292.6L482.4 299.1L479.7 305.7L477.4 312.2"/><path d="M1037.2 100.7L1050.8 106.2L1064.5 111.9L1078.4 117.7L1092.3 123.6L1106.1 129.7L1119.9 135.8L1133.6 142L1147.1 148.2L1160.4 154.5L1173.5 160.8L1186.3 167.2L1198.9 173.6L1211.1 180L1223 186.4L1234.6 192.9L1245.8 199.4L1256.6 205.9L1266.9 212.4L1276.9 218.9L1286.4 225.4L1295.5 232L1304 238.5L1312.1 245.1L1319.7 251.6L1326.8 258.2L1333.3 264.8L1339.3 271.4L1344.8 277.9L1349.7 284.5L1354.1 291.1L1357.9 297.7L1361.2 304.3L1363.8 310.9L1365.9 317.5L1367.4 324.1L1368.4 330.7L1368.7 337.3"/><path d="M937 76.3L934.7 69.9L932.4 63.7L930.4 57.7L928.6 52.1L927.5 47.1L928.1 43.5L932.4 42.2L942.2 43.6L957.4 47.4L975.8 52.4L996.2 58L1017.5 64"/><path d="M769.7 70.3L753.1 76.6L736.4 83.1L719.7 89.6L703.2 96.1L686.8 102.7L670.5 109.3L654.6 115.9L638.9 122.6L623.5 129.2L608.5 135.9L593.7 142.6L579.4 149.2L565.5 155.9L552 162.6L538.9 169.3L526.3 176"/><path d="M947.2 92.7L939.5 88.6L932 84.9L924.7 81.7L917.7 79.1L910.9 77.3L904.3 76.3L897.6 76.1L890.9 76.8L884.1 78.4L876.9 80.7L869.5 83.7L861.7 87.2L853.7 91.2L845.4 95.6L836.9 100.3L828.3 105.3L819.5 110.5L810.6 115.9L801.6 121.5L792.6 127.1L783.6 132.9L774.6 138.7L765.7 144.6L756.9 150.6L748.1 156.6L739.5 162.7L731 168.8L722.7 175L714.5 181.2L706.5 187.4L698.7 193.6L691.1 199.9L683.7 206.2L676.6 212.5L669.7 218.8L663.1 225.1L656.7 231.4L650.6 237.8L644.8 244.1L639.3 250.5L634.1 256.9L629.2 263.2L624.6 269.6L620.4 276L616.4 282.4L612.8 288.8L609.6 295.2L606.7 301.6L604.1 308L601.9 314.4L600 320.8L598.5 327.2L597.3 333.6L596.5 340L596.1 346.4L596 352.8L596.3 359.2"/><path d="M958.2 100L950.4 94.6L942.6 89.5L935.1 84.7L927.8 80.3L920.7 76.4L913.8 73.1L907.1 70.6L900.5 69.1L893.8 68.5L887 69.1L879.7 70.6L872.1 73.1L863.9 76.4L855.3 80.3L846.3 84.7L836.9 89.5L827.3 94.6L817.4 100L807.4 105.6L797.4 111.3L787.2 117.2L777.1 123.1L767 129.2L756.9 135.3L747 141.5L737.1 147.7L727.4 154L717.9 160.3L708.5 166.7L699.3 173.1L690.3 179.5L681.6 185.9L673 192.3L664.8 198.8L656.8 205.2L649.1 211.7L641.7 218.2L634.6 224.7L627.9 231.2L621.4 237.8L615.3 244.3L609.5 250.8L604.1 257.4L599.1 263.9L594.4 270.5L590.1 277"/><path d="M926.4 106.5L924.8 112.4L923.2 118.4L921.5 124.5L919.9 130.6L918.3 136.8L916.6 143L915 149.3L913.3 155.7L911.6 162L909.9 168.4L908.2 174.8L906.5 181.2L904.8 187.7L903.1 194.1L901.3 200.6L899.6 207.1L897.9 213.6L896.2 220.1L894.5 226.6L892.8 233.1L891.1 239.6L889.5 246.1L887.8 252.7L886.2 259.2L884.5 265.7L883 272.3L881.4 278.8L879.8 285.4L878.3 291.9L876.8 298.5L875.4 305L873.9 311.6L872.6 318.1L871.2 324.7L869.9 331.2L868.6 337.8L867.4 344.3L866.2 350.9L865 357.4L863.9 364L862.9 370.5L861.9 377.1L860.9 383.6L860 390.1L859.1 396.7L858.3 403.2L857.6 409.7L856.9 416.2L856.2 422.7L855.6 429.2L855.1 435.7L854.6 442.2L854.2 448.7L853.8 455.1L853.5 461.5"/><path d="M959.9 63.2L962.1 67.8L965.1 72.9L968.4 78.4L972 84.1L975.7 90L979.4 96L983.3 102.1L987.1 108.2L990.8 114.5L994.5 120.8L998.2 127.1L1001.7 133.5L1005.2 139.8L1008.6 146.3L1011.8 152.7L1014.9 159.1L1017.9 165.6L1020.8 172.1L1023.6 178.5L1026.2 185L1028.6 191.5L1030.9 198L1033.1 204.5L1035 211L1036.9 217.6L1038.6 224.1L1040.1 230.6L1041.4 237.1L1042.6 243.7L1043.6 250.2L1044.4 256.8L1045 263.3L1045.5 269.8L1045.8 276.4L1045.9 282.9L1045.9 289.5L1045.7 296L1045.2 302.6L1044.7 309.1L1043.9 315.7L1043 322.2L1041.9 328.8L1040.6 335.3L1039.1 341.9L1037.5 348.4L1035.7 355L1033.8 361.5L1031.7 368L1029.4 374.6L1027 381.1L1024.4 387.7L1021.7 394.2L1018.8 400.7L1015.8 407.3L1012.6 413.8L1009.4 420.3L1005.9 426.8L1002.4 433.4L998.7 439.9L995 446.4L991.1 452.9L987.1 459.4L983 465.9"/><path d="M1036.2 118.4L1043.4 118.8L1051.1 119.5L1059.6 120.8L1068.6 122.4L1078.3 124.4L1088.5 126.8L1099.3 129.6L1110.6 132.7L1122.4 136L1134.5 139.6L1147 143.5L1159.8 147.6L1172.8 151.9L1186 156.3L1199.3 160.9L1212.6 165.7L1226 170.6L1239.4 175.6L1252.7 180.7L1265.9 185.8L1278.9 191.1L1291.8 196.5L1304.5 201.9L1316.9 207.3L1329 212.9L1340.8 218.5L1352.3 224.1L1363.4 229.7L1374.2 235.4L1384.6 241.2L1394.5 246.9L1404 252.7L1413 258.5L1421.6 264.3"/><path d="M906.2 66.9L900 64L893.7 62.2L887.1 61.6L879.9 62.4L872.1 64.3L863.3 67.3L853.9 71.2L843.7 75.6L833.1 80.6L822 85.9L810.7 91.5L799.2 97.3L787.5 103.3L775.8 109.3L764.1 115.5L752.5 121.7L740.9 128.1L729.4 134.4L718.1 140.8L706.9 147.3L695.9 153.8L685.2 160.3L674.6 166.8L664.4 173.4L654.3 179.9L644.6 186.5L635.2 193.1L626.1 199.7L617.4 206.3L609 213L600.9 219.6L593.2 226.2L586 232.9L579.1 239.5L572.6 246.2"/><path d="M834.2 126.9L827.6 126.8L820.8 127.1L813.6 127.8L806.2 128.9L798.4 130.4L790.4 132.2L782 134.4L773.3 136.8L764.4 139.6L755.2 142.7L745.7 146L736.1 149.5L726.3 153.3L716.3 157.3L706.2 161.4L695.9 165.7L685.7 170.1L675.4 174.7L665.1 179.4L654.8 184.2L644.6 189.1L634.4 194L624.4 199.1L614.4 204.2L604.7 209.4L595 214.7L585.6 220L576.4 225.4L567.4 230.8L558.7 236.3L550.2 241.7L542 247.3L534.1 252.8L526.5 258.4L519.3 264L512.3 269.6L505.7 275.3L499.5 280.9L493.6 286.6L488.1 292.3L483 298L478.2 303.7L473.9 309.4L469.9 315.1L466.4 320.8L463.3 326.5L460.6 332.2L458.2 337.9L456.4 343.6L454.9 349.3L453.8 355L453.1 360.6L452.9 366.3L453 371.9"/><path d="M832.9 86.4L822.8 91.8L812.5 97.4L802 103.2L791.5 109.1L781 115.1L770.4 121.2L760 127.3L749.6 133.5L739.3 139.8L729.2 146.1L719.2 152.4L709.4 158.8L699.8 165.2L690.4 171.6L681.2 178L672.3 184.5L663.6 190.9L655.2 197.4L647.1 203.9L639.3 210.4L631.8 216.9L624.6 223.4L617.8 229.9L611.3 236.5L605.1 243L599.3 249.5L593.9 256.1L588.9 262.6L584.2 269.2L579.9 275.7L576 282.3L572.6 288.8L569.5 295.4L566.8 301.9L564.6 308.5L562.8 315L561.3 321.6L560.4 328.1L559.8 334.7L559.6 341.3L559.9 347.8L560.6 354.4L561.7 360.9L563.3 367.5L565.2 374L567.6 380.6L570.3 387.1L573.5 393.6L577.1 400.2L581.1 406.7L585.4 413.2L590.1 419.7L595.3 426.3L600.7 432.8L606.6 439.2L612.7 445.7L619.2 452.2L626.1 458.7"/><path d="M889.4 74.8L882.4 75.7L875.2 77.5L867.5 80L859.4 83.3L851 87L842.2 91.3L833 95.9L823.7 100.8L814.1 105.9L804.4 111.3L794.6 116.8L784.8 122.5L774.9 128.3L765 134.2L755.2 140.1L745.5 146.2L735.9 152.3L726.3 158.4L717 164.6L707.8 170.8L698.8 177L689.9 183.3L681.3 189.6L672.9 196L664.8 202.3L656.9 208.7L649.3 215L642 221.4L635 227.8L628.3 234.3L621.9 240.7L615.8 247.1L610.1 253.6L604.7 260L599.7 266.5L595 272.9L590.7 279.4L586.7 285.9L583.2 292.3L580 298.8L577.2 305.3L574.8 311.7L572.8 318.2L571.2 324.7L569.9 331.2L569.1 337.6L568.7 344.1L568.7 350.6L569.1 357.1L569.9 363.5L571 370L572.6 376.4L574.6 382.9L576.9 389.3L579.7 395.8"/><path d="M889.5 59.5L882.3 60.6L874.5 63L865.9 66.3L856.6 70.4L846.8 75.1L836.5 80.2L825.9 85.7L815.1 91.3L804.2 97.2L793.1 103.1L782 109.2L771 115.4L760 121.6L749 127.9L738.2 134.2L727.6 140.6L717 147L706.7 153.4L696.6 159.9L686.7 166.4L677 172.8L667.6 179.4L658.5 185.9L649.6 192.4L641 198.9L632.8 205.5L624.9 212L617.3 218.6L610 225.2L603.2 231.7L596.6 238.3L590.5 244.9L584.7 251.5L579.4 258.1L574.4 264.7L569.9 271.3L565.7 277.9L562 284.5L558.7 291.1L555.8 297.7L553.4 304.3L551.4 310.9L549.8 317.5L548.7 324.1L548 330.7L547.8 337.3L548 343.9L548.7 350.5L549.8 357.1L551.3 363.7L553.3 370.3L555.7 376.9"/><path d="M967.6 77.4L957.3 73.4L947.8 70L939.2 67.4L931.4 65.8L924.4 65.3L918 65.9L912.1 67.6L906.4 70.3L900.8 73.8L895.2 77.9L889.6 82.5L883.9 87.4L878.1 92.7L872.2 98.2L866.3 103.9L860.4 109.7L854.4 115.6L848.5 121.6L842.5 127.7L836.6 133.9L830.8 140.1L825 146.3L819.3 152.6L813.6 159L808 165.3L802.6 171.7L797.2 178.1L791.9 184.5L786.8 190.9L781.8 197.4L777 203.8L772.2 210.3L767.7 216.8L763.3 223.3L759 229.8L754.9 236.3L751 242.8L747.3 249.3L743.8 255.8L740.5 262.3"/><path d="M877 64.7L874.9 60.5L872.1 57.2L868.1 55L862.3 54.4L854.3 55.3L843.9 57.7L831.4 61.2L817.2 65.5L801.8 70.4L785.6 75.7L768.8 81.3L751.7 87.1L734.3 93.1L716.8 99.2L699.3 105.3L681.9 111.6L664.6 117.8L647.4 124.2L630.5 130.5L613.8 136.9L597.4 143.4L581.3 149.8L565.5 156.3L550.1 162.7L535.1 169.2L520.6 175.7L506.4 182.2L492.8 188.8L479.6 195.3L467 201.8L454.8 208.4L443.2 214.9L432.2 221.5L421.7 228L411.8 234.6L402.5 241.1L393.9 247.7L385.8 254.2L378.4 260.8L371.6 267.4L365.5 273.9L360.1 280.5L355.3 287.1L351.2 293.7L347.8 300.2L345.1 306.8L343.1 313.4L341.7 320L341.1 326.5L341.1 333.1"/><path d="M888.3 125.1L882 128.1L875.5 131.5L869.1 135.1L862.6 138.9L856 142.9L849.4 147.2L842.7 151.6L836 156.2L829.3 161L822.6 165.8L815.9 170.8L809.2 175.9L802.5 181.1L795.9 186.4L789.3 191.7L782.8 197.1L776.3 202.6L769.9 208.1L763.7 213.6L757.5 219.2L751.4 224.9L745.5 230.6L739.7 236.3L734 242L728.5 247.8L723.1 253.6L717.9 259.4L712.9 265.2L708.1 271.1L703.4 277L699 282.8L694.7 288.7L690.6 294.6L686.8 300.5L683.2 306.4L679.7 312.3L676.6 318.2L673.6 324.1L670.9 330.1L668.4 336L666.1 341.9L664 347.8L662.2 353.7L660.7 359.5L659.4 365.4L658.3 371.3L657.4 377.1L656.8 382.9L656.4 388.7L656.2 394.5L656.3 400.3L656.5 406L657 411.7L657.7 417.4L658.6 423L659.7 428.6"/><path d="M948.4 53.4L938.8 51.4L931.7 51.1L926.9 52.6L923.5 55.7L920.9 59.8L918.7 64.6L916.7 69.9L914.8 75.6L913 81.4L911.2 87.5L909.3 93.6L907.5 99.9L905.7 106.2L903.9 112.5L902.1 118.9L900.3 125.3L898.5 131.8L896.7 138.3L894.9 144.8L893.1 151.3L891.3 157.8L889.6 164.4L887.8 170.9L886.1 177.5L884.3 184L882.6 190.6L881 197.2L879.3 203.7L877.7 210.3L876.1 216.9L874.6 223.5L873 230.1L871.6 236.7L870.1 243.3L868.7 249.9L867.3 256.5L866 263.1L864.7 269.7L863.5 276.3L862.3 282.9L861.2 289.5L860.1 296.2L859.1 302.8L858.1 309.4L857.2 316L856.3 322.6L855.5 329.2L854.8 335.8L854.1 342.4L853.4 349L852.9 355.6L852.4 362.3L851.9 368.9L851.5 375.5L851.2 382.1L851 388.7L850.8 395.3L850.6 401.9L850.6 408.5L850.6 415.1L850.6 421.7L850.8 428.3L851 434.8L851.2 441.4L851.5 448"/><path d="M940.3 103L934.2 97.3L928.1 91.7L922.1 86.4L916.2 81.4L910.3 76.8L904.6 72.6L898.8 69.2L893 66.5L887 64.9L880.5 64.4L873.3 65.1L865.4 67L856.5 69.8L846.8 73.4L836.4 77.6L825.5 82.3L814.1 87.4L802.4 92.8L790.4 98.4L778.3 104.1L766.1 110.1L753.8 116.1L741.6 122.2L729.5 128.4L717.4 134.6L705.5 140.9L693.7 147.2L682.2 153.6L670.8 160L659.7 166.4L648.8 172.9L638.2 179.3L627.9 185.8L617.9 192.3L608.3 198.8L599 205.3L590 211.9L581.5 218.4L573.3 225L565.5 231.5L558.1 238.1L551.1 244.7L544.6 251.2L538.5 257.8L532.9 264.4"/><path d="M939.1 70.5L948.1 74.9L957.5 79.8L967.3 85.1L977.3 90.6L987.5 96.4L997.7 102.3L1008.1 108.3L1018.4 114.4L1028.7 120.6L1038.9 126.9L1049.1 133.2L1059.1 139.6L1069 146L1078.8 152.4L1088.3 158.9L1097.7 165.4L1106.8 171.9L1115.7 178.4L1124.4 185L1132.8 191.5L1140.9 198.1L1148.8 204.6L1156.3 211.2L1163.6 217.8L1170.5 224.4L1177.1 231L1183.3 237.6L1189.2 244.2"/><path d="M961.7 101.7L958.2 105L955.1 108.6L952.1 112.6L949.2 116.9L946.4 121.4L943.7 126.2L941.1 131.1L938.4 136.2L935.8 141.4L933.2 146.8L930.6 152.3L928 157.8L925.3 163.5L922.7 169.2L920 174.9L917.4 180.7L914.7 186.6L912 192.5L909.3 198.5L906.6 204.5L903.9 210.5L901.2 216.5L898.4 222.6L895.7 228.7L893 234.8L890.3 240.9L887.7 247L885 253.2L882.4 259.3L879.7 265.5L877.1 271.7L874.6 277.9L872 284.1L869.5 290.3L867 296.5L864.6 302.7L862.2 308.9L859.8 315.2L857.5 321.4L855.3 327.6L853.1 333.8L850.9 340L848.8 346.2L846.8 352.4L844.8 358.6L842.9 364.8L841.1 371L839.3 377.2L837.6 383.4L836 389.5L834.4 395.7L832.9 401.8L831.5 407.9L830.1 414L828.8 420.1L827.6 426.2L826.5 432.2L825.4 438.2L824.4 444.2"/><path d="M899.1 94.3L893.1 91.8L887 90L880.7 88.8L874.2 88.3L867.4 88.5L860.2 89.4L852.6 90.9L844.5 93.1L836 95.9L827 99.1L817.7 102.8L808 106.9L797.9 111.3L787.7 115.9L777.2 120.8L766.6 125.9L755.8 131.1L745.1 136.5L734.2 142L723.5 147.6L712.7 153.3L702 159.1L691.5 165L681 170.9L670.8 176.9L660.7 182.9L650.8 189L641.2 195.1L631.8 201.2L622.6 207.4L613.7 213.6L605.2 219.8L596.9 226L589 232.2L581.4 238.5L574.1 244.8L567.2 251.1L560.7 257.4L554.6 263.7L548.9 270L543.5 276.3L538.6 282.7L534.1 289L530 295.4L526.3 301.7L523.1 308.1L520.3 314.4L518 320.8L516.1 327.1L514.6 333.5"/><path d="M893.7 52.1L899.2 46.7L904.7 42.4L910.6 40.5L918.6 41.9L929.4 45.9L941.9 51.2L955.5 57.1L969.6 63.4L983.9 69.9L998.4 76.5L1012.9 83.1L1027.3 89.8L1041.6 96.6L1055.8 103.3L1069.8 110.1L1083.7 116.9L1097.3 123.7L1110.7 130.6L1123.8 137.4L1136.6 144.2L1149.1 151.1L1161.3 157.9L1173.2 164.8L1184.7 171.6L1195.8 178.5L1206.5 185.3"/><path d="M922.6 62.1L929 61.5L936.4 62.3L945.1 64.3L954.9 67.3L965.8 71.2L977.5 75.8L990 80.8L1002.9 86.2L1016.1 91.8L1029.6 97.6L1043.3 103.6L1057 109.8L1070.7 116L1084.4 122.3L1097.9 128.7L1111.3 135.1L1124.6 141.5L1137.6 148L1150.4 154.6L1163 161.1L1175.2 167.7L1187.2 174.3L1198.8 180.9L1210.1 187.6L1220.9 194.2L1231.4 200.8L1241.5 207.5L1251.2 214.2L1260.4 220.9L1269.2 227.6"/><path d="M878.7 81.1L882.3 74.3L886 67.6L889.7 60.8L893.4 54.1L897 47.5L900.6 41.2L904.2 35.6L909.3 33.2L920.9 36.8L936.5 42.7L953.2 49.1L970.3 55.7L987.4 62.4L1004.5 69.2L1021.6 76L1038.5 82.7L1055.3 89.5L1071.9 96.3L1088.3 103.1L1104.4 109.9L1120.3 116.8L1135.9 123.6L1151.2 130.4L1166.2 137.2L1180.8 144L1195 150.8L1208.9 157.7L1222.3 164.5L1235.3 171.3L1247.9 178.1L1260 185"/><path d="M949.4 109.7L945.4 113.1L941.5 116.8L937.7 120.9L934 125.2L930.3 129.7L926.6 134.5L923 139.4L919.4 144.5L915.8 149.7L912.2 155L908.6 160.5L905 166L901.3 171.6L897.7 177.3L894.1 183L890.5 188.8L886.9 194.6L883.3 200.5L879.8 206.4L876.2 212.4L872.7 218.4L869.2 224.4L865.7 230.5L862.3 236.5L858.9 242.6L855.6 248.7L852.3 254.8L849 261L845.8 267.1L842.7 273.3L839.7 279.4L836.7 285.6L833.7 291.8L830.9 298L828.1 304.2L825.4 310.4L822.8 316.6L820.3 322.8L817.9 329L815.5 335.2L813.3 341.4L811.2 347.5L809.1 353.7L807.2 359.9L805.3 366.1L803.6 372.2L802 378.4L800.4 384.5L799 390.6L797.7 396.7L796.5 402.8L795.4 408.9L794.4 415L793.5 421L792.8 427L792.1 432.9L791.5 438.9"/><path d="M925.1 103.2L918.4 103.3L911.8 103.9L905.3 105L898.8 106.7L892.3 108.8L885.7 111.5L879.1 114.5L872.3 117.8L865.5 121.6L858.7 125.6L851.7 129.8L844.6 134.3L837.5 139L830.4 143.8L823.2 148.8L816 154L808.8 159.3L801.6 164.6L794.5 170.1L787.4 175.6L780.3 181.2L773.4 186.9L766.5 192.7L759.7 198.5L753 204.3L746.5 210.2L740 216.1L733.8 222L727.7 228L721.7 234L715.9 240L710.3 246.1L704.9 252.1L699.7 258.2L694.8 264.3L690 270.4L685.4 276.6L681.1 282.7L677.1 288.8L673.2 295L669.6 301.1L666.3 307.3L663.2 313.4L660.4 319.6L657.9 325.8L655.6 331.9L653.5 338.1L651.8 344.2L650.3 350.4L649.1 356.5"/><path d="M865 67.4L870.1 69.2L874.4 71.9L878.3 75.4L881.9 79.6L885.3 84.2L888.6 89.2L891.9 94.5L895.2 100L898.4 105.7L901.6 111.5L904.8 117.5L908.1 123.6L911.3 129.7L914.5 135.9L917.7 142.2L920.9 148.5L924.1 154.8L927.3 161.2L930.4 167.6L933.5 174.1L936.6 180.5L939.6 187L942.6 193.5L945.6 200L948.5 206.5L951.3 213.1L954.1 219.6L956.8 226.2L959.5 232.7L962.1 239.3L964.6 245.8L967 252.4L969.4 259L971.6 265.6L973.8 272.2L975.9 278.8L977.9 285.4L979.8 292L981.6 298.6L983.4 305.2L985 311.8"/><path d="M974.7 82.2L967.4 81.6L961 81.9L955.4 82.9L950.4 84.6L946 87.1L942.1 90.1L938.4 93.6L934.9 97.6L931.6 101.9L928.4 106.6L925.3 111.5L922.1 116.6L919.1 121.9L916 127.4L912.9 133L909.8 138.7L906.8 144.4L903.7 150.3L900.6 156.2L897.5 162.2L894.4 168.3L891.4 174.4L888.3 180.5L885.3 186.6L882.2 192.8L879.2 199.1L876.2 205.3L873.3 211.6L870.4 217.8L867.5 224.1L864.6 230.4L861.8 236.8L859 243.1L856.3 249.5L853.6 255.8L851 262.2L848.4 268.6L846 274.9L843.5 281.3L841.2 287.7L838.9 294.1L836.7 300.5L834.5 306.9L832.5 313.3L830.5 319.7L828.6 326.1L826.8 332.5L825.1 338.9L823.4 345.3L821.9 351.7L820.5 358.1L819.1 364.5L817.9 370.8L816.7 377.2L815.7 383.6L814.7 389.9L813.8 396.3L813.1 402.6"/><path d="M897.9 129.6L904.7 130.9L911.4 132.5L918.2 134.4L925.1 136.8L932 139.4L938.9 142.4L945.9 145.6L953 149.2L960.2 152.9L967.4 156.9L974.7 161L982 165.4L989.3 169.9L996.7 174.5L1004.1 179.3L1011.4 184.2L1018.8 189.2L1026.1 194.3L1033.3 199.5L1040.5 204.8L1047.6 210.2L1054.7 215.6L1061.6 221.1L1068.4 226.6L1075.1 232.2L1081.7 237.8L1088.1 243.5"/><path d="M913.8 92.3L908.2 95.3L902.6 98.8L897.1 102.7L891.5 107L885.9 111.6L880.3 116.4L874.6 121.4L868.9 126.6L863.2 131.9L857.5 137.4L851.8 143L846.1 148.7L840.4 154.5L834.8 160.4L829.1 166.3L823.6 172.3L818.1 178.3L812.6 184.3L807.3 190.4L802 196.6L796.8 202.7L791.8 208.9L786.8 215.1L782 221.4L777.3 227.6L772.7 233.9L768.3 240.2L764 246.5L759.8 252.8L755.9 259.1L752.1 265.4L748.4 271.7L745 278.1L741.7 284.4L738.6 290.8L735.7 297.1L733 303.5L730.5 309.9L728.1 316.2L726 322.6L724.1 328.9L722.4 335.3L720.9 341.7L719.6 348L718.5 354.4L717.7 360.7L717 367L716.6 373.4L716.3 379.7L716.3 386L716.5 392.3L716.9 398.6L717.5 404.9L718.3 411.2"/><path d="M865.1 111.6L867.2 104.8L869.4 98.1L871.6 91.4L873.9 84.6L876.2 77.9L878.5 71.2L880.8 64.6L883.1 58L885.4 51.4L887.6 45.1L889.3 39.3L889.3 35.1L881.6 35.5L864.5 40L843.5 45.9"/><path d="M979.7 52.3L997.5 58.8L1015.4 65.4L1033.4 72.1L1051.2 78.8L1068.9 85.5L1086.4 92.2L1103.8 98.9L1120.8 105.7L1137.6 112.4L1154.1 119.2L1170.3 125.9L1186.1 132.7L1201.6 139.5L1216.7 146.2L1231.3 153L1245.6 159.7L1259.4 166.5L1272.7 173.3L1285.5 180.1L1297.9 186.8L1309.7 193.6"/><path d="M966.1 80.2L959 73.5L951.8 66.9L944.6 60.3L937.3 53.7L930.2 47.2L923.2 40.8L917.1 35.1L917.2 32.3"/><path d="M878.1 35.9L866.5 41.9L853.8 48.2L840.8 54.7L827.7 61.3L814.7 67.9L801.7 74.6L788.8 81.2L776.1 87.9L763.5 94.6L751.1 101.2L738.8 107.9L726.8 114.6L715 121.2L703.4 127.9L692.1 134.6L681 141.3L670.2 147.9L659.8 154.6L649.6 161.3L639.7 168L630.2 174.7L621 181.4L612.2 188L603.8 194.7L595.7 201.4L588.1 208.1L580.8 214.8L574 221.5L567.5 228.1"/><path d="M874.5 103.3L872.5 110L870.6 116.7L868.7 123.4L866.8 130.1L865 136.8L863.2 143.6L861.5 150.3L859.9 157L858.3 163.7L856.7 170.4L855.2 177.1L853.8 183.8L852.4 190.6L851.1 197.3L849.9 204L848.7 210.7L847.6 217.4L846.6 224.1L845.6 230.8L844.7 237.6L843.9 244.3L843.2 251L842.5 257.7L841.9 264.4L841.4 271.1L841 277.8L840.7 284.6L840.4 291.3L840.2 298L840.1 304.7L840.1 311.4L840.1 318.1L840.3 324.8L840.5 331.6L840.8 338.3L841.1 345L841.6 351.7L842.1 358.4L842.7 365.1L843.4 371.8L844.2 378.6L845 385.3L845.9 392L846.9 398.7L847.9 405.4L849.1 412.1L850.2 418.8L851.5 425.6L852.8 432.3"/><path d="M948.3 81.5L940.2 75.6L932.3 70.1L924.6 64.9L917.3 60.3L910.3 56.5L903.6 53.9L897 52.9L890.1 53.5L882.4 55.8L873.9 59.3L864.6 63.8L854.8 68.8L844.5 74.3L834 80.1L823.2 86L812.4 92.2L801.5 98.4L790.6 104.7L779.7 111.1L768.9 117.5L758.3 124L747.7 130.5L737.3 137L727.1 143.6L717.1 150.2L707.2 156.8L697.6 163.4L688.3 170L679.2 176.6L670.3 183.3L661.8 189.9L653.6 196.6L645.6 203.2L638 209.9L630.7 216.6L623.8 223.2L617.2 229.9L611 236.6L605.1 243.3L599.6 249.9"/><path d="M897.9 113.9L891.7 117L885.6 120.4L879.4 124.1L873.1 128.1L866.9 132.3L860.5 136.7L854.1 141.3L847.7 146.1L841.3 151.1L834.9 156.1L828.4 161.3L822 166.6L815.6 172L809.3 177.4L802.9 182.9L796.7 188.5L790.5 194.2L784.4 199.9L778.4 205.6L772.4 211.4L766.6 217.2L760.9 223.1L755.3 228.9L749.9 234.8L744.6 240.8L739.5 246.7L734.5 252.7L729.7 258.7L725 264.7L720.5 270.7L716.3 276.7L712.2 282.8L708.3 288.8L704.6 294.9L701.1 300.9L697.9 307L694.8 313L692 319.1L689.4 325.2L687 331.2L684.8 337.3L682.9 343.3L681.2 349.4L679.7 355.4L678.4 361.5L677.4 367.5L676.7 373.5L676.1 379.5L675.8 385.5L675.7 391.5L675.8 397.5L676.2 403.4L676.7 409.3L677.5 415.2L678.4 421.1"/><path d="M1013.6 123.8L1007.8 117.2L1002 110.7L996 104.1L990 97.6L983.9 91.2L977.8 84.8L971.7 78.4L965.6 72.2L959.6 66L953.9 60.1L948.6 54.6L944.4 49.6L942.2 45.7L943.9 43.7L952 44.2"/><path d="M840.5 47.1L832.8 51.4L822.6 56.7L811.3 62.4L799.3 68.4L786.9 74.6L774.5 80.9L762 87.3L749.5 93.7L737.2 100.2L724.9 106.7L712.9 113.2L701 119.8L689.3 126.4L677.9 132.9L666.8 139.5L655.9 146.1L645.3 152.7L635 159.4L625.1 166L615.5 172.6L606.2 179.2L597.3 185.9L588.8 192.5L580.7 199.1"/><path d="M931.2 102L924.6 97.8L918.1 93.9L911.6 90.5L905.3 87.6L898.9 85.4L892.6 83.8L886.1 82.9L879.4 82.9L872.4 83.6L865 85.1L857.1 87.3L848.9 90L840.2 93.4L831.1 97.2L821.7 101.4L812 105.9L802 110.7L791.9 115.8L781.6 121L771.2 126.4L760.8 132L750.3 137.6L739.9 143.4L729.5 149.3L719.3 155.2L709.1 161.2L699 167.2L689.2 173.3L679.4 179.4L669.9 185.6L660.6 191.8L651.6 198L642.8 204.3L634.3 210.6L626 216.9L618.1 223.2L610.5 229.5L603.2 235.9L596.2 242.3L589.6 248.6L583.3 255L577.4 261.4L571.9 267.8L566.8 274.2L562 280.6L557.7 287"/></g>
<g fill="none" stroke="#ee8df0" stroke-opacity="1.0" stroke-width="1.5" stroke-dasharray="1.30 2.15"><path d="M926.2 63.4L922.4 56.4L918.6 49.4L914.8 42.5L911.2 35.8L909.9 31L925.2 34.3"/><path d="M862.3 40.8L844.6 47.7L826.8 54.7L809 61.7L791.2 68.7L773.6 75.8L756.1 82.8L738.8 89.9L721.8 96.9L705 104"/><path d="M944.9 54.4L942.9 49.7L944.1 46.8L950.8 46.4L964.1 48.7L983 53.1"/><path d="M807.6 58.6L794 64.8L779.4 71.3L764.3 78.1L748.9 85.1L733.5 92.2L718.2 99.3L703 106.5"/><path d="M840.7 120.7L840.4 114.9L840.1 109.3L839.7 103.8L839.2 98.7L838.4 93.8L837.3 89.3L835.8 85.3L833.7 81.9L830.7 79.2L826.7 77.2L821.4 76.2L814.5 76.1L806 77L795.8 78.8L783.9 81.4L770.6 84.7L756.1 88.7L740.5 93.1L724.1 97.9L707 103"/></g>
<g fill="none" stroke="#e010ff" stroke-opacity="1.0" stroke-width="1.5" stroke-dasharray="1.30 2.15"><path d="M836.8 63.8L824.1 70.8L811.5 77.8L799 84.9L786.6 91.9L774.5 98.9L762.5 106L750.7 113L739.1 120L727.7 127L716.6 134.1L705.7 141.1L695.2 148.1L684.9 155.2L674.9 162.2L665.3 169.2L655.9 176.3L647 183.3L638.4 190.3L630.1 197.4L622.3 204.4L614.9 211.4L607.8 218.5L601.2 225.5"/><path d="M842.2 62.2L830 69.2L817.8 76.2L805.8 83.1L793.9 90.1L782.1 97.1L770.5 104.1L759.1 111.1L747.9 118.1L736.9 125.1L726.2 132.1L715.7 139.1L705.4 146.1L695.4 153.1L685.7 160.1L676.4 167L667.3 174L658.6 181L650.2 188L642.1 195L634.4 202L627.1 209L620.2 216L613.7 223"/><path d="M867.9 58.3L857.6 63.9L846.9 69.8L836 75.9L824.9 82.3L813.8 88.7L802.7 95.2L791.6 101.8L780.6 108.4L769.8 115L759 121.7L748.4 128.3L738 135L727.7 141.8L717.7 148.5L707.9 155.2L698.4 162L689.1 168.7L680 175.5L671.3 182.2L662.8 189L654.7 195.8L646.9 202.6L639.4 209.3L632.3 216.1L625.5 222.9L619.1 229.7"/><path d="M784.7 104.2L773.9 111L763.4 117.8L752.9 124.6L742.7 131.5L732.7 138.3L722.9 145.1L713.3 152L704 158.8L694.9 165.7L686.1 172.5L677.6 179.4L669.4 186.3L661.5 193.1L654 200L646.8 206.8L639.9 213.7L633.4 220.6L627.2 227.4L621.4 234.3"/><path d="M793 104L781.8 111L770.6 118L759.7 125L748.8 132.1L738.2 139.1L727.8 146.2L717.7 153.3L707.8 160.5L698.1 167.6L688.8 174.7L679.7 181.9L671 189L662.6 196.2L654.6 203.3L646.9 210.5L639.6 217.7L632.6 224.8L626.1 232"/><path d="M904.4 71.1L897.6 70.2L890.7 70.3L883.5 71.6L875.9 73.7L867.9 76.8L859.4 80.5L850.5 84.8L841.2 89.5L831.7 94.7L821.9 100L812 105.6L801.9 111.4L791.8 117.4L781.7 123.4L771.6 129.6L761.6 135.8L751.6 142.1L741.7 148.4L732 154.8L722.5 161.3L713.1 167.7L703.9 174.2L694.9 180.8L686.1 187.3L677.6 193.9L669.4 200.5L661.4 207.1L653.7 213.7L646.4 220.4L639.3 227"/><path d="M901.1 91.1L894.8 88.8L888.4 87.1L881.9 86.1L875.1 85.9L867.9 86.5L860.4 87.9L852.4 89.9L843.9 92.6L835 95.8L825.6 99.5L815.8 103.6L805.8 108.1L795.4 112.9L784.9 117.9L774.2 123.2L763.3 128.6L752.4 134.2L741.5 139.9L730.6 145.7L719.8 151.6L709 157.6L698.4 163.6L687.9 169.7L677.5 175.9L667.4 182.1L657.5 188.4L647.8 194.6L638.3 201L629.2 207.3L620.3 213.7L611.7 220.1L603.5 226.5"/><path d="M912.2 47.2L905.2 43.8L898.5 42.6L891.1 44.3L882.6 48.1L872.9 53.1L862.6 58.8L851.8 64.8L840.9 71.1L829.8 77.4L818.7 83.9L807.6 90.4L796.6 97L785.6 103.6L774.8 110.2L764.1 116.9L753.5 123.5L743.1 130.2L732.9 136.9L723 143.6L713.2 150.3L703.7 157L694.4 163.7L685.4 170.4L676.6 177.2L668.2 183.9L660 190.6L652.2 197.3L644.6 204.1L637.5 210.8L630.6 217.5L624.1 224.3L618 231"/><path d="M911.1 82.2L904.4 80L897.8 78.6L891.1 78L884.3 78.3L877.1 79.5L869.6 81.5L861.6 84.2L853.2 87.5L844.5 91.4L835.4 95.7L826 100.3L816.3 105.3L806.5 110.5L796.6 115.9L786.5 121.5L776.4 127.2L766.3 133L756.2 138.9L746.1 144.9L736.2 151L726.3 157.1L716.6 163.3L707.1 169.6L697.7 175.9L688.5 182.2L679.5 188.5L670.8 194.9L662.3 201.3L654 207.7L646.1 214.1L638.4 220.6L631 227L624 233.5"/><path d="M893.8 106.7L887.4 104.9L881 103.6L874.3 102.9L867.5 102.7L860.4 103.2L853.1 104.2L845.4 105.8L837.3 107.9L828.9 110.5L820.2 113.5L811.1 117L801.8 120.7L792.2 124.8L782.3 129.2L772.3 133.8L762.2 138.6L751.9 143.6L741.6 148.7L731.2 154L720.9 159.4L710.6 165L700.3 170.6L690.1 176.3L680.1 182.1L670.2 187.9L660.5 193.8L650.9 199.8L641.6 205.8L632.5 211.8L623.6 217.9L615 224"/></g>
<g fill="none" stroke="#ffb20d" stroke-opacity="1.0" stroke-width="1.5" stroke-dasharray="1.30 2.15"><path d="M807.2 83.2L797 90.1L787 97L777.1 103.9L767.4 110.9L757.8 117.8L748.4 124.8L739.3 131.7L730.3 138.6L721.6 145.6L713.2 152.6L705 159.5L697.1 166.5L689.4 173.4L682.1 180.4L675 187.3L668.3 194.3L661.9 201.3L655.9 208.2L650.1 215.2L644.8 222.2L639.7 229.1L635.1 236.1L630.8 243L626.9 250L623.4 257L620.2 263.9L617.5 270.9"/><path d="M782.3 116L772.6 122.8L763 129.7L753.6 136.6L744.4 143.4L735.4 150.3L726.7 157.2L718.1 164.1L709.8 171L701.8 177.9L694 184.8L686.5 191.7L679.3 198.6L672.4 205.6L665.9 212.5L659.6 219.4L653.7 226.3L648.1 233.2L642.9 240.2L638 247.1L633.5 254L629.4 260.9L625.6 267.9L622.2 274.8"/><path d="M799.4 109L789.9 115.7L780.5 122.4L771.3 129.1L762.2 135.8L753.2 142.6L744.5 149.4L735.9 156.1L727.5 162.9L719.4 169.7L711.5 176.5L703.9 183.3L696.5 190.1L689.3 197L682.5 203.8L676 210.6L669.7 217.4L663.8 224.2L658.2 231.1L652.9 237.9L647.9 244.7L643.3 251.6L639 258.4L635.1 265.3L631.5 272.1"/><path d="M879.6 80.9L872.2 83.2L864.4 86.1L856.3 89.7L847.8 93.7L839.1 98.1L830.1 102.8L821 107.9L811.6 113.1L802.2 118.6L792.7 124.2L783.2 129.9L773.7 135.7L764.2 141.7L754.7 147.7L745.4 153.7L736.1 159.9L727 166.1L718.1 172.3L709.3 178.6L700.7 184.9L692.3 191.2L684.1 197.5L676.1 203.9L668.4 210.3L661 216.7L653.8 223.2L646.9 229.6L640.3 236.1L634 242.5L628 249L622.4 255.5L617.1 262L612.1 268.5"/><path d="M892 84L885.1 85L877.9 86.8L870.5 89.2L862.9 92.2L854.9 95.7L846.7 99.7L838.2 104L829.5 108.7L820.7 113.6L811.7 118.7L802.7 124.1L793.5 129.5L784.4 135.2L775.2 140.9L766 146.7L757 152.6L748 158.6L739.1 164.6L730.3 170.7L721.6 176.9L713.1 183L704.8 189.3L696.7 195.5L688.8 201.8L681.1 208.1L673.6 214.4L666.4 220.8L659.5 227.1L652.8 233.5L646.4 239.9L640.3 246.3L634.5 252.7L629 259.1L623.8 265.6L619 272"/><path d="M953.8 83.2L945 77.9L936.5 72.9L928.4 68.5L920.7 64.7L913.3 61.8L906.4 60.1L899.6 59.7L892.7 60.7L885.5 63L877.8 66.3L869.6 70.4L861 75.1L852.1 80.2L842.9 85.7L833.6 91.4L824.1 97.3L814.5 103.3L805 109.5L795.4 115.7L785.9 122L776.4 128.4L767.1 134.8L757.8 141.3L748.7 147.7L739.8 154.2L731 160.8L722.4 167.3L714.1 173.9L705.9 180.5L698 187.1L690.3 193.7L682.9 200.3L675.7 206.9L668.8 213.6L662.2 220.2L655.9 226.8L650 233.5L644.3 240.2L639 246.8L634 253.5L629.3 260.2L625 266.8L621 273.5"/><path d="M930.9 94.9L923.8 92L916.9 89.6L910.1 87.8L903.4 86.8L896.7 86.4L889.9 86.8L883 87.9L875.9 89.7L868.6 92.1L861 95L853.1 98.5L844.9 102.3L836.6 106.5L828 111.1L819.3 115.9L810.4 120.9L801.5 126.1L792.4 131.4L783.4 136.9L774.3 142.5L765.3 148.2L756.3 154L747.4 159.9L738.5 165.8L729.8 171.8L721.2 177.8L712.8 183.9L704.5 190L696.5 196.1L688.6 202.3L680.9 208.5L673.4 214.7L666.2 221L659.3 227.3L652.6 233.5L646.2 239.8L640 246.2L634.2 252.5L628.6 258.8L623.4 265.1L618.5 271.5"/><path d="M864.4 118.5L857 120.7L849.3 123.4L841.6 126.4L833.6 129.8L825.5 133.5L817.2 137.4L808.9 141.6L800.4 146L791.8 150.6L783.2 155.4L774.5 160.4L765.8 165.5L757.1 170.7L748.5 176L739.8 181.4L731.3 186.9L722.9 192.5L714.5 198.1L706.3 203.8L698.2 209.6L690.3 215.4L682.5 221.3L675 227.2L667.6 233.2L660.5 239.1L653.6 245.1L647 251.2L640.6 257.2L634.4 263.3L628.6 269.4L623 275.5"/><path d="M880.3 120.7L873.4 121.3L866.4 122.4L859.3 123.9L852 125.8L844.6 128.1L837 130.7L829.2 133.6L821.2 136.9L813.1 140.4L804.9 144.2L796.5 148.2L788.1 152.3L779.5 156.7L770.9 161.3L762.3 166L753.6 170.8L745 175.7L736.4 180.8L727.8 185.9L719.3 191.2L710.8 196.5L702.5 201.9L694.3 207.3L686.2 212.8L678.3 218.4L670.5 224L662.9 229.6L655.5 235.3L648.4 241L641.4 246.8L634.7 252.5L628.2 258.3L622 264.2L616 270"/><path d="M900.9 128.4L894.2 127.8L887.4 127.7L880.6 128L873.7 128.6L866.7 129.7L859.6 131.1L852.4 133L845 135.1L837.5 137.6L829.8 140.5L822 143.5L814.1 146.9L806.1 150.5L797.9 154.3L789.6 158.4L781.3 162.6L772.9 166.9L764.5 171.5L756 176.1L747.6 180.9L739.2 185.8L730.8 190.8L722.4 195.9L714.2 201.1L706 206.3L698 211.6L690 217L682.2 222.4L674.6 227.9L667.1 233.4L659.8 239L652.7 244.6L645.8 250.2L639.1 255.9L632.7 261.6L626.5 267.3L620.5 273"/><path d="M920.8 105.9L913.9 104.4L907.2 103.4L900.4 102.9L893.7 103L886.8 103.7L879.9 104.9L872.9 106.7L865.6 108.9L858.2 111.6L850.7 114.7L842.9 118.2L834.9 122L826.8 126.1L818.6 130.4L810.3 135L801.8 139.7L793.3 144.7L784.8 149.7L776.2 154.9L767.7 160.3L759.1 165.7L750.6 171.2L742.2 176.8L733.9 182.5L725.7 188.3L717.6 194L709.6 199.9L701.8 205.8L694.2 211.7L686.7 217.7L679.5 223.7L672.4 229.7L665.6 235.8L659 241.8L652.7 247.9L646.6 254.1L640.8 260.2L635.3 266.3L630 272.5"/></g>
<g fill="none" stroke="#a4ff28" stroke-opacity="1.0" stroke-width="1.5" stroke-dasharray="1.30 2.15"><path d="M991.2 83.6L979.5 79L968.4 75L958.2 71.6L949 68.9L940.7 67.2L933.5 66.6L927.1 67.1L921.4 68.7L916.1 71.2L911.1 74.6L906.2 78.5L901.4 83.1L896.5 88L891.6 93.2L886.7 98.6L881.8 104.3L876.8 110.1L871.9 116L866.9 122L862 128.1L857 134.3L852.1 140.5L847.3 146.8L842.5 153.1L837.7 159.5L833 165.9L828.4 172.3L823.8 178.7L819.3 185.1L815 191.6L810.7 198.1L806.5 204.6L802.5 211.1L798.5 217.6L794.7 224.1L791 230.7L787.5 237.2L784.1 243.7L780.8 250.3"/></g>
<g fill="none" stroke="#ff1300" stroke-opacity="1.0" stroke-width="1.5" stroke-dasharray="1.30 2.15"><path d="M851.9 78.9L847.6 85.4L843.4 92L839.2 98.6L835.1 105.2L831 111.8L827 118.5L823.1 125.1L819.3 131.8L815.6 138.5L812 145.2L808.6 151.9L805.2 158.5L802 165.2L798.8 171.9L795.9 178.7L793 185.4L790.3 192.1L787.7 198.8L785.3 205.5L783 212.2L780.9 218.9L779 225.6L777.2 232.4L775.5 239.1L774.1 245.8L772.7 252.5L771.6 259.2L770.6 266L769.8 272.7L769.2 279.4"/><path d="M879.6 61.4L874.8 68.3L869.9 75.2L865.2 82L860.5 88.9L855.8 95.8L851.2 102.7L846.7 109.6L842.2 116.5L837.8 123.4L833.5 130.2L829.3 137.1L825.2 144L821.3 150.9L817.4 157.8L813.6 164.7L810 171.6L806.4 178.5L803.1 185.4L799.8 192.2L796.7 199.1L793.7 206L790.9 212.9L788.2 219.8L785.7 226.7L783.3 233.6L781.1 240.5L779.1 247.4L777.2 254.2L775.5 261.1L774 268L772.7 274.9L771.5 281.8"/><path d="M858.6 83.2L854.1 90.1L849.7 97L845.4 103.9L841.1 110.7L836.9 117.6L832.8 124.5L828.8 131.4L824.9 138.3L821.1 145.2L817.4 152.1L813.8 159L810.3 165.9L807 172.8L803.8 179.7L800.7 186.6L797.8 193.5L795 200.4L792.3 207.4L789.8 214.3L787.5 221.2L785.3 228.1L783.3 235L781.4 241.9L779.7 248.8L778.2 255.7L776.8 262.6L775.7 269.5L774.6 276.4L773.8 283.3"/><path d="M869.4 67.7L865 74.4L860.6 81.1L856.2 87.9L851.9 94.6L847.7 101.4L843.5 108.1L839.4 114.9L835.4 121.6L831.5 128.4L827.7 135.1L824 141.9L820.3 148.7L816.8 155.4L813.4 162.2L810.1 168.9L806.9 175.7L803.9 182.4L801 189.2L798.2 196L795.5 202.7L793 209.5L790.6 216.2L788.4 223L786.3 229.8L784.4 236.5L782.7 243.3L781 250.1L779.6 256.8L778.3 263.6L777.2 270.3L776.2 277.1"/><path d="M828.3 109.4L824.7 116L821.3 122.6L817.8 129.3L814.5 136L811.3 142.7L808.2 149.4L805.2 156.1L802.3 162.8L799.6 169.6L797 176.3L794.5 183.1L792.1 189.9L789.9 196.6L787.9 203.4L785.9 210.2L784.2 217L782.6 223.7L781.1 230.5L779.8 237.3L778.7 244.1L777.7 250.9L776.9 257.7L776.3 264.5L775.8 271.3L775.5 278.1L775.4 284.9"/><path d="M892.8 87.9L888.6 94L884.4 100.2L880.2 106.5L876 112.8L871.8 119.3L867.6 125.8L863.4 132.3L859.3 138.9L855.3 145.4L851.3 152.1L847.3 158.7L843.4 165.3L839.6 172L835.8 178.7L832.2 185.4L828.6 192.1L825.1 198.8L821.7 205.5L818.4 212.2L815.2 218.9L812.2 225.7L809.2 232.4L806.4 239.1L803.7 245.9L801.1 252.6L798.6 259.4L796.3 266.1L794.1 272.9L792.1 279.6L790.2 286.4"/><path d="M871 113.7L867 120.5L863.1 127.4L859.2 134.2L855.4 141.1L851.6 148L847.9 154.9L844.2 161.9L840.7 168.8L837.2 175.7L833.8 182.7L830.5 189.6L827.3 196.6L824.2 203.5L821.2 210.5L818.3 217.5L815.5 224.4L812.9 231.4L810.3 238.4L807.9 245.3L805.7 252.3L803.5 259.3L801.5 266.3L799.7 273.2L798 280.2L796.4 287.2"/><path d="M965.1 73.1L956 70.9L948 69.7L941.1 69.4L935.1 70.2L929.8 72L925.1 74.6L920.7 78L916.5 82L912.4 86.4L908.4 91.2L904.4 96.3L900.4 101.7L896.5 107.2L892.5 112.9L888.5 118.8L884.5 124.7L880.5 130.7L876.5 136.8L872.5 142.9L868.6 149.1L864.7 155.4L860.8 161.7L856.9 168L853.1 174.3L849.4 180.7L845.7 187L842.1 193.4L838.5 199.9L835 206.3L831.6 212.7L828.3 219.2L825 225.6L821.8 232.1L818.8 238.6L815.8 245.1L812.9 251.6L810.2 258.1L807.5 264.6L805 271.1L802.6 277.6L800.3 284.1"/><path d="M979.9 74.7L968.5 71L958.3 68.1L949.3 66.1L941.6 65.2L935.1 65.5L929.6 66.9L924.7 69.4L920.3 72.7L916.2 76.7L912.2 81.2L908.3 86.2L904.5 91.5L900.6 97L896.7 102.8L892.9 108.6L889 114.6L885.1 120.7L881.2 126.9L877.4 133.1L873.5 139.4L869.7 145.8L865.9 152.2L862.2 158.6L858.4 165L854.8 171.5L851.1 178L847.6 184.5L844.1 191L840.6 197.6L837.3 204.1L834 210.7L830.8 217.2L827.7 223.8L824.7 230.4L821.7 237L818.9 243.6L816.2 250.2L813.5 256.8L811 263.4L808.6 270.1L806.4 276.7L804.2 283.3"/><path d="M1011 81.7L996.6 76.2L982.7 71L969.7 66.3L957.7 62.2L947.1 59.1L938.1 57.1L930.8 56.6L924.9 57.6L920.1 59.9L915.8 63.4L911.9 67.7L908.1 72.6L904.4 77.9L900.7 83.5L896.9 89.3L893.2 95.3L889.5 101.4L885.7 107.6L882 113.9L878.3 120.3L874.6 126.7L870.9 133.1L867.2 139.6L863.6 146.1L860 152.6L856.5 159.2L853 165.7L849.6 172.3L846.2 178.9L842.9 185.5L839.7 192.1L836.5 198.7L833.4 205.4L830.4 212L827.6 218.6L824.7 225.3L822 231.9L819.4 238.6L816.9 245.2L814.5 251.9L812.3 258.6L810.1 265.2L808 271.9L806.1 278.6L804.3 285.2L802.6 291.9"/><path d="M944.1 86.3L937.9 87L932.1 88.5L926.6 90.5L921.3 93.2L916.2 96.4L911.1 100.1L906.1 104.1L901.1 108.5L896.1 113.2L891.1 118.1L886.1 123.2L881.1 128.4L876 133.8L871 139.4L865.9 145L860.9 150.8L855.9 156.6L850.9 162.5L845.9 168.4L841 174.4L836.1 180.5L831.3 186.5L826.6 192.7L821.9 198.8L817.3 205L812.8 211.2L808.4 217.4L804 223.7L799.8 229.9L795.7 236.2L791.7 242.5L787.8 248.8L784.1 255.1L780.5 261.5L777 267.8L773.7 274.1L770.5 280.5"/><path d="M922.3 102L917.1 105.3L912 109.1L906.9 113.2L901.8 117.6L896.7 122.2L891.6 127.1L886.5 132.2L881.4 137.4L876.3 142.8L871.2 148.3L866 153.9L860.9 159.6L855.9 165.4L850.8 171.3L845.8 177.2L840.8 183.2L835.8 189.2L831 195.3L826.1 201.4L821.4 207.6L816.7 213.8L812.2 220L807.7 226.2L803.3 232.4L799 238.7L794.8 245L790.8 251.3L786.9 257.6L783.1 264L779.4 270.3L775.9 276.6L772.5 283"/><path d="M986.1 103L977.7 101.1L969.9 99.8L962.5 99.1L955.6 98.9L949.2 99.4L943.1 100.4L937.3 102L931.8 104.2L926.4 106.8L921.2 109.9L916 113.3L910.9 117.1L905.8 121.3L900.7 125.7L895.6 130.3L890.4 135.1L885.3 140.1L880.2 145.3L875.1 150.6L870 156L864.8 161.5L859.7 167.1L854.7 172.8L849.6 178.5L844.6 184.3L839.6 190.2L834.6 196.1L829.8 202.1L824.9 208.1L820.2 214.1L815.5 220.2L810.9 226.3L806.4 232.4L802 238.6L797.8 244.7L793.6 250.9L789.5 257.1L785.6 263.3L781.7 269.5L778.1 275.8L774.5 282"/><path d="M944.1 109.8L938.3 111.6L932.6 113.9L927.1 116.7L921.6 119.8L916.3 123.3L911 127.2L905.7 131.3L900.4 135.6L895.1 140.2L889.7 145L884.4 150L879.1 155.1L873.8 160.3L868.5 165.7L863.2 171.2L857.9 176.7L852.6 182.4L847.3 188.1L842.1 193.9L836.9 199.7L831.8 205.6L826.8 211.6L821.8 217.6L816.8 223.6L812 229.7L807.3 235.8L802.6 241.9L798 248L793.6 254.2L789.3 260.4L785 266.6L781 272.8L777 279"/><path d="M980.7 105.5L973.6 105.1L966.9 105.2L960.7 105.9L954.8 107.1L949.3 108.9L944 111.1L938.9 113.8L934 116.8L929.1 120.2L924.4 124L919.7 128L915 132.3L910.3 136.8L905.7 141.5L901 146.4L896.4 151.4L891.8 156.6L887.1 161.9L882.5 167.3L877.8 172.8L873.2 178.4L868.6 184L864 189.7L859.4 195.5L854.9 201.3L850.4 207.2L845.9 213.1L841.5 219L837.2 225L832.9 231L828.7 237L824.5 243.1L820.5 249.2L816.5 255.3L812.6 261.4L808.8 267.5L805.1 273.7L801.5 279.8L798 286"/><path d="M993.9 104.3L985.8 102.8L978.2 101.9L971.2 101.6L964.6 101.8L958.5 102.6L952.8 104L947.5 105.8L942.3 108.2L937.4 111L932.6 114.2L928 117.7L923.4 121.6L918.8 125.8L914.3 130.2L909.8 134.8L905.3 139.6L900.8 144.6L896.3 149.7L891.9 154.9L887.4 160.3L882.9 165.8L878.4 171.3L873.9 176.9L869.5 182.6L865 188.4L860.6 194.2L856.3 200L851.9 205.9L847.6 211.9L843.4 217.9L839.2 223.9L835.1 229.9L831 235.9L827 242L823.1 248.1L819.3 254.2L815.5 260.4L811.9 266.5L808.3 272.7L804.9 278.8L801.5 285"/><path d="M973.7 111.7L967.5 112.4L961.6 113.6L956 115.3L950.6 117.4L945.4 120L940.4 122.9L935.6 126.2L930.8 129.8L926 133.7L921.3 137.8L916.7 142.2L912 146.7L907.3 151.5L902.7 156.4L898 161.4L893.4 166.6L888.8 171.8L884.1 177.2L879.5 182.7L874.8 188.2L870.2 193.8L865.6 199.5L861.1 205.2L856.5 211L852.1 216.8L847.6 222.7L843.2 228.6L838.8 234.6L834.5 240.5L830.3 246.5L826.2 252.5L822.1 258.6L818.1 264.6L814.2 270.7L810.3 276.8L806.6 282.9L803 289"/><path d="M972.9 116L966.6 116.6L960.6 117.7L954.8 119.2L949.3 121.2L944 123.5L938.8 126.2L933.7 129.3L928.6 132.7L923.7 136.3L918.7 140.2L913.8 144.3L908.9 148.7L904 153.2L899.1 157.9L894.2 162.7L889.3 167.7L884.4 172.8L879.5 178L874.7 183.3L869.8 188.6L864.9 194.1L860.1 199.6L855.3 205.2L850.5 210.8L845.8 216.5L841.1 222.2L836.4 227.9L831.8 233.7L827.3 239.6L822.8 245.4L818.5 251.3L814.1 257.2L809.9 263.1L805.8 269.1L801.8 275L797.8 281L794 287"/><path d="M962.8 123L956.3 123.6L950 124.6L943.9 126L938 127.9L932.1 130.1L926.4 132.7L920.7 135.6L915.1 138.8L909.5 142.3L903.9 146L898.3 150L892.7 154.2L887.1 158.6L881.4 163.1L875.8 167.8L870.2 172.7L864.6 177.6L859 182.7L853.4 187.9L847.8 193.1L842.2 198.5L836.7 203.9L831.2 209.4L825.7 214.9L820.3 220.5L815 226.2L809.7 231.9L804.6 237.6L799.5 243.4L794.5 249.2L789.5 255L784.7 260.8L780 266.7L775.5 272.6L771 278.5"/><path d="M983.8 138.9L977.1 138.9L970.5 139.2L964.2 139.9L958 140.9L952 142.2L946.1 143.9L940.3 145.9L934.5 148.1L928.8 150.7L923.2 153.5L917.6 156.5L912 159.8L906.4 163.3L900.8 167L895.3 170.8L889.7 174.9L884.1 179L878.5 183.3L872.9 187.8L867.3 192.3L861.7 197L856.2 201.7L850.6 206.5L845.1 211.4L839.5 216.4L834.1 221.5L828.6 226.6L823.2 231.8L817.9 237L812.6 242.2L807.3 247.5L802.2 252.9L797.1 258.3L792.1 263.7L787.2 269.1L782.3 274.5L777.6 280L773 285.5"/><path d="M912 48.5L907.3 51.9L902.9 56.4L898.5 61.7L894 67.4L889.6 73.3L885.1 79.5L880.5 85.7L876 92.1L871.5 98.5L866.9 104.9L862.5 111.4L858 118L853.6 124.5L849.2 131.1L844.9 137.7L840.7 144.3L836.5 150.9L832.5 157.5L828.5 164.1L824.6 170.8L820.7 177.4L817 184L813.4 190.7L809.9 197.3L806.5 204L803.3 210.6L800.2 217.3L797.1 224L794.3 230.6L791.5 237.3L788.9 244L786.5 250.6L784.2 257.3L782 264L780 270.7L778.2 277.3L776.5 284"/><path d="M958 100.5L952.1 101.8L946.6 103.6L941.4 106L936.4 108.9L931.5 112.2L926.8 115.8L922.1 119.8L917.5 124.1L912.9 128.7L908.3 133.5L903.7 138.4L899.2 143.6L894.6 148.9L890 154.3L885.5 159.8L880.9 165.5L876.3 171.2L871.8 177L867.3 182.8L862.8 188.8L858.3 194.7L853.9 200.8L849.5 206.8L845.2 212.9L840.9 219.1L836.7 225.3L832.5 231.4L828.4 237.7L824.4 243.9L820.5 250.2L816.7 256.4L812.9 262.7L809.3 269L805.7 275.3L802.3 281.7L799 288"/></g>
<path d="M928.1 113.3L930 107.5L931.9 101.8L933.9 96.3M940.7 81.6L935 74.8L929.3 68.1L923.6 61.3M1011.6 126.5L1016.8 125.3L1022.4 124.5L1028.4 124M943 75.7L944.7 71.8L947 68.6L950.1 66.2L954.2 64.6L959.7 64M966.7 112.2L969.1 106.9L971.7 102M919.1 83.7L925.6 88.6L932.1 93.9L938.8 99.4M877.5 112.3L881.8 118.1L886 124.2M1018.1 107.9L1025.4 108.6L1033.4 109.8M897.7 48.6L905.3 48.4L913.1 50.8L921.8 55M856.1 97.5L855.3 91.8L854.3 86.5L853 81.6L851.3 77.2M863.7 59.7L856.6 66.2L849.6 72.7L842.7 79.3L835.8 85.8M827.1 123.9L834.1 123.7L840.9 124L847.4 124.7L853.6 125.9M916 90.6L924.5 89.3L933.4 89.1M872.2 97.7L879.1 95.6L885.7 93.9M880 48L872.3 47.2L859.6 49.9M941.7 57.5L952.8 62.2L964.8 67.4L977.2 73.1L989.9 79M866.7 124.1L861.2 123.6L855.6 123.4L849.8 123.6L843.9 124L837.8 124.7L831.5 125.8M978.3 105.1L977.2 100.3L976.3 95.7L975.5 91.3L975 87.1L974.7 83.3L974.9 79.8M927.5 63.1L934.8 66.2L942.4 69.8M842.8 82.9L853.1 76.6L863.2 70.5L872.8 65.1M906 55.3L911.9 54.2L918.4 54.5L925.6 56.1L933.8 59L942.8 62.7M1003.3 98.6L1002.4 101.7L1001.8 105.2L1001.6 109L1001.5 113L1001.6 117.2M868.3 86.5L875.3 85.3L882 84.9L888.4 85.1L894.7 86L900.9 87.6M847.5 101.5L855.1 103.4L862.1 106.2M972.8 99L970.8 93.7L968.8 88.5L967 83.5L965.5 78.7L964.2 74.3L963.5 70.2M839.2 106.5L849.7 102.4L859.8 99M870.4 106.7L871.3 101.2L872.2 95.7M907.1 82.1L911.1 89.2L915 96.5M1004.9 95.2L1014 96.8L1024.1 99L1035 101.7L1046.7 105M937.7 67.9L938.7 62.1L941.2 57.6M893.8 111.2L888.8 117.2L883.8 123.4L878.9 129.8M886.9 64.5L889.1 71.7L891.1 79.2M944.1 58.7L947.7 65L951.7 71.7M965.5 69.7L970.9 75.2L976.5 80.8L982 86.6L987.6 92.4L993.1 98.2M937.2 103.4L929.6 101.1L922.3 99.4L915 98.4L907.9 98M909.8 67L916.3 71.1L923 75.7L929.8 80.9L936.7 86.3M841.8 121.9L848 113.9L854.2 105.9M999.6 70.3L987.5 67.5L977.4 65.7L969.3 65L963.4 65.4L959.2 67M950.1 61.1L961 64.4L973.3 68.6M885.8 84.2L893.1 86.2L900.2 89.2L907.2 92.9M958.5 59.2L957.2 62.2L957.4 66.1L958.5 70.7L960.2 75.8M891.6 125L888.6 120.4L885.6 116M920 59.4L927.8 67.5L935.6 75.8M906.3 84.8L899.6 78.6L892.7 73.4M956.9 52.2L946.5 49.7L938.6 48.5M950.9 89.1L948.4 92.7L946 96.8L943.8 101.2L941.8 105.8L939.8 110.7L937.8 115.7M888.4 49.6L894.7 46.1L900.5 43.8M894.4 62.5L897.4 56.3L900.5 50.2L903.5 44.4L906.6 39.3M930.1 54.1L935.2 61.4L940.3 68.7M925.1 72.8L926.5 67.3L928.2 62.2L930.5 58L933.9 55M946.3 84.9L942.5 78.5L938.7 72.1L934.9 65.8L931.1 59.5L927.3 53.3M953 84.4L962.6 90.5L972.4 96.9M911.8 54.4L915.4 47.5L921.2 43.7M919 99.9L921.5 93.9L924.1 88.2L926.7 82.8M857.3 68.3L865.4 62.3L873.4 56.3L881.3 50.6L888.9 45.2L896 40.6L902.4 37.9M928.7 60.4L936.1 60.2L945.2 61.6L956.1 64.6M964.2 84.8L959.4 79L954.5 73.3L949.6 67.6L944.8 62L940 56.4L935.5 51.1M915.4 62.2L921.3 62.4L927.6 63.5L934.5 65.4L942 68.1L950.1 71.3L958.6 75M886.6 51.2L890 55.9L892.9 61.4L895.7 67.5M970 91L970.7 95.4L971.5 99.9L972.3 104.6L973.3 109.5L974.2 114.4L975.2 119.4M1025.4 116.7L1020 118.1L1015.2 120L1010.9 122.3L1007.1 125M916.7 73.4L915.1 68.2L913.4 62.9M944.4 107.7L952.6 110.6L961.2 114M876.5 65.2L879.4 65.5L882.2 65.9M1037.2 100.7L1024.9 95.8L1012.9 91.1L1001.3 86.7L990.2 82.7L979.8 79.1M937 76.3L939.8 84.1L942.6 91.9M947.2 92.7L954.4 96.8L961.8 101.2L969.3 105.7L976.9 110.4L984.5 115.3L992.2 120.3M958.2 100L965.8 105.3L973.5 110.9L981.3 116.5L989 122.2L996.7 128.1M926.4 106.5L927.8 101.4L929.3 96.5L930.8 91.7L932.3 87.1L934 82.7M959.9 63.2L958.7 59.3L959.1 56.3L961.8 54.6L967.7 54.3L977.2 55.6M1036.2 118.4L1029.9 118.5L1024.1 119.1M906.2 66.9L912.1 70.4L918.2 74.5L924.4 79.1L930.7 84L937.2 89.2L943.7 94.6M834.2 126.9L841.5 127.5L848.5 128.6M832.9 86.4L842.3 81.6L851.4 77.1L860.1 72.9L868.4 69.4L876.1 66.5M889.4 74.8L897.7 75L906 76.5M889.5 59.5L896 59.7L902.3 61.2L908.6 63.8L915 67.4M967.6 77.4L977.2 81.5L987.3 85.8L997.7 90.5L1008.3 95.3L1019.1 100.3M877 64.7L878.6 69.3L880.1 74.4M888.3 125.1L894.3 122.6L900.2 120.4M948.4 53.4L960.1 56.7L973.8 61L988.6 65.9L1004.4 71.2M940.3 103L947.9 110.3L955.4 117.7M939.1 70.5L931.6 67.1L924.5 64.4L917.9 62.4L911.7 61.4L905.7 61.3L899.9 62.3M961.7 101.7L965.2 99L969 96.7L973.3 95L978.2 93.7L983.6 93M899.1 94.3L905.3 97.3L911.4 100.8L917.7 104.8L923.9 109.1M893.7 52.1L887.8 58.3L881.8 64.7L875.8 71.4M922.6 62.1L916.2 64.3L910.3 67.8L904.7 72.3M878.7 81.1L874.9 88.2L871.1 95.3M949.4 109.7L954.2 106.3L959.4 103.5L965 101.3M925.1 103.2L931.5 103.7L938.1 104.6L944.8 106L951.8 107.8M865 67.4L859.4 66.7L852.8 67L845 68.3L835.9 70.4M974.7 82.2L981.3 83.2L988.4 84.6M897.9 129.6L891.4 128.8L884.8 128.4L878.1 128.4L871.4 128.8L864.6 129.6M913.8 92.3L919.6 89.8L925.5 87.9L931.8 86.7L938.3 86.3M865.1 111.6L864 115.1L862.9 118.6M966.1 80.2L973.6 87.2L980.9 94.2L988.2 101.3M874.5 103.3L877.3 93.9L880.2 84.4M948.3 81.5L957 87.9L965.8 94.5L974.6 101.2L983.4 108M897.9 113.9L905.4 110.7L913 108.1M1013.6 123.8L1020.4 131.8L1027 139.8M931.2 102L937.5 106.3L943.8 110.7" fill="none" stroke="#6e6e6e" stroke-width="1.35"/>
<path d="M926.2 63.4L929.8 69.3L933.4 75.3L936.9 81.3L940.4 87.2L943.9 93.2L947.3 99.2L950.7 105.1M944.9 54.4L948.9 60.6L953.7 67.6L959 75L964.4 82.6L969.9 90.3L975.4 98.1L980.7 105.9M840.7 120.7L840.8 121.5L840.8 122.2L840.9 123L840.9 123.8L841 124.5L841 125.3L841.1 126.1" fill="none" stroke="#ee8df0" stroke-width="1.35"/>
<path d="M836.8 63.8L839.6 61.9L842.4 60.1L845.2 58.2L848 56.4L850.7 54.5L853.5 52.7L856.2 50.9M842.2 62.2L846.2 59.9L850.3 57.6L854.4 55.4L858.4 53.1L862.5 50.8L866.5 48.6L870.6 46.3M867.9 58.3L870.9 56.8L873.9 55.5L876.8 54.2L879.6 53L882.3 51.9L884.8 51L887.3 50.2M784.7 104.2L791.6 100.2L798.4 96.3L805.4 92.4L812.3 88.5L819.2 84.6L826.1 80.8L832.9 77M793 104L799.4 100.7L805.8 97.4L812.2 94.2L818.5 91L824.7 87.9L830.8 85L836.8 82.1M904.4 71.1L908.7 73.3L913.1 75.8L917.6 78.6L922.1 81.7L926.7 85L931.3 88.4L936 92M901.1 91.1L903.7 92.1L906.3 93.1L908.8 94.3L911.4 95.6L914.1 96.9L916.7 98.3L919.3 99.8M912.2 47.2L913.7 48L915.2 48.9L916.8 49.8L918.4 50.8L920 51.8L921.6 52.8L923.3 53.9M911.1 82.2L915.2 83.8L919.3 85.6L923.5 87.7L927.8 90L932.2 92.4L936.6 95L941 97.7M893.8 106.7L894.9 107L895.9 107.3L897 107.6L898.1 107.9L899.2 108.3L900.2 108.6L901.3 109" fill="none" stroke="#e010ff" stroke-width="1.35"/>
<path d="M807.2 83.2L811.3 80.6L815.4 78L819.5 75.3L823.6 72.7L827.7 70.1L831.9 67.5L836 64.9M782.3 116L788.2 112.7L794.1 109.5L800 106.3L805.9 103.2L811.7 100.1L817.5 97L823.2 94.1M799.4 109L801.8 107.5L804.1 105.9L806.5 104.4L808.9 102.9L811.3 101.3L813.6 99.8L816 98.3M879.6 80.9L882.6 80L885.5 79.3L888.5 78.7L891.3 78.3L894.2 78L897 77.8L899.8 77.8M892 84L896.3 84L900.6 84.4L904.8 85.1L909.1 86.1L913.4 87.3L917.8 88.8L922.2 90.6M953.8 83.2L955.7 84.3L957.6 85.4L959.4 86.5L961.3 87.6L963.3 88.7L965.2 89.9L967.1 91M930.9 94.9L933.6 96.1L936.3 97.4L939.1 98.8L941.8 100.2L944.6 101.6L947.5 103.1L950.3 104.7M864.4 118.5L871.8 116.8L879 115.6L886.2 115L893.3 114.8L900.3 115.2L907.3 116L914.3 117.4M880.3 120.7L881.9 120.7L883.4 120.7L885 120.7L886.6 120.8L888.1 120.9L889.7 121L891.2 121.1M900.9 128.4L904.1 128.9L907.2 129.6L910.4 130.3L913.5 131L916.7 131.9L919.9 132.9L923.1 133.9M920.8 105.9L925.3 107.5L929.9 109.4L934.6 111.4L939.3 113.6L944.1 116L948.9 118.5L953.8 121.1" fill="none" stroke="#ffb20d" stroke-width="1.35"/>
<path d="M991.2 83.6L998.8 86.7L1006.5 89.8L1014.4 93.1L1022.4 96.5L1030.5 100L1038.6 103.5L1046.8 107.1" fill="none" stroke="#a4ff28" stroke-width="1.35"/>
<path d="M851.9 78.9L855.1 73.7L858.3 68.6L861.4 63.6L864.3 58.7L867 54.1L869.3 49.9L870.6 46.3M879.6 61.4L881.8 58.6L883.9 55.8L886.1 53L888.3 50.2L890.4 47.5L892.6 44.7L894.7 42M858.6 83.2L862.8 78.4L867 73.5L871.2 68.6L875.4 63.8L879.7 58.9L883.9 54.1L888.1 49.4M869.4 67.7L870.7 65.7L872 63.7L873.3 61.7L874.5 59.7L875.8 57.7L877.1 55.7L878.4 53.7M828.3 109.4L831 104.2L833.7 98.9L836.4 93.7L839.1 88.6L841.8 83.6L844.4 78.7L846.9 73.9M892.8 87.9L894.6 85.2L896.4 82.6L898.1 79.9L899.9 77.4L901.7 74.8L903.4 72.4L905.2 70M871 113.7L872.3 111.8L873.5 110L874.8 108.1L876.1 106.3L877.4 104.5L878.6 102.6L879.9 100.8M965.1 73.1L970.2 74.6L975.7 76.3L981.3 78.2L987.2 80.3L993.3 82.4L999.5 84.7L1005.9 87.1M979.9 74.7L981.8 75.4L983.6 76.2L985.5 77L987.4 77.7L989.3 78.5L991.2 79.3L993.1 80.1M1011 81.7L1015.3 83.6L1019.5 85.4L1023.8 87.3L1028.1 89.2L1032.4 91.1L1036.6 93L1040.9 94.9M944.1 86.3L945.4 86.2L946.6 86L947.9 85.9L949.3 85.9L950.6 85.9L952 85.9L953.4 85.9M922.3 102L923.1 101.5L924 101.1L924.8 100.6L925.6 100.2L926.5 99.7L927.3 99.3L928.2 98.9M986.1 103L988 103L989.9 103.1L991.8 103.3L993.8 103.4L995.9 103.7L998 103.9L1000.1 104.2M944.1 109.8L945.3 109.4L946.5 109.1L947.7 108.8L948.9 108.5L950.2 108.3L951.4 108L952.7 107.8M980.7 105.5L983.9 105.6L987.3 105.8L990.8 106.1L994.4 106.5L998.2 107.1L1002 107.7L1006 108.5M993.9 104.3L1000.2 106.3L1006.8 108.5L1013.5 110.9L1020.4 113.4L1027.5 116.1L1034.8 118.9L1042.1 121.8M973.7 111.7L975.4 111.8L977.1 112L978.9 112.2L980.6 112.5L982.4 112.7L984.3 113L986.1 113.3M972.9 116L974.1 115.9L975.4 115.9L976.6 115.8L977.9 115.8L979.2 115.8L980.5 115.8L981.8 115.8M962.8 123L963.7 123L964.7 123L965.6 122.9L966.5 122.9L967.5 123L968.4 123L969.4 123M983.8 138.9L986.1 139.1L988.4 139.4L990.8 139.7L993.2 140.1L995.6 140.4L998 140.9L1000.5 141.3M912 48.5L912.9 47.9L913.9 47.4L914.9 46.9L915.9 46.6L917.1 46.3L918.2 46.1L919.5 46M958 100.5L959.1 100.4L960.2 100.3L961.3 100.2L962.5 100.1L963.6 100L964.8 100L966 100" fill="none" stroke="#ff1300" stroke-width="1.35"/>
<g fill="#ff5a3c"><circle cx="856.2" cy="50.9" r="1.15"/><circle cx="870.6" cy="46.3" r="1.15"/><circle cx="887.3" cy="50.2" r="1.15"/><circle cx="832.9" cy="77.0" r="1.15"/><circle cx="836.8" cy="82.1" r="1.15"/><circle cx="936.0" cy="92.0" r="1.15"/><circle cx="919.3" cy="99.8" r="1.15"/><circle cx="923.3" cy="53.9" r="1.15"/><circle cx="941.0" cy="97.7" r="1.15"/><circle cx="901.3" cy="109.0" r="1.15"/><circle cx="836.0" cy="64.9" r="1.15"/><circle cx="823.2" cy="94.1" r="1.15"/><circle cx="816.0" cy="98.3" r="1.15"/><circle cx="899.8" cy="77.8" r="1.15"/><circle cx="922.2" cy="90.6" r="1.15"/><circle cx="967.1" cy="91.0" r="1.15"/><circle cx="950.3" cy="104.7" r="1.15"/><circle cx="914.3" cy="117.4" r="1.15"/><circle cx="891.2" cy="121.1" r="1.15"/><circle cx="923.1" cy="133.9" r="1.15"/><circle cx="953.8" cy="121.1" r="1.15"/><circle cx="870.6" cy="46.3" r="1.15"/><circle cx="894.7" cy="42.0" r="1.15"/><circle cx="888.1" cy="49.4" r="1.15"/><circle cx="878.4" cy="53.7" r="1.15"/><circle cx="846.9" cy="73.9" r="1.15"/><circle cx="905.2" cy="70.0" r="1.15"/><circle cx="879.9" cy="100.8" r="1.15"/><circle cx="1005.9" cy="87.1" r="1.15"/><circle cx="993.1" cy="80.1" r="1.15"/><circle cx="1040.9" cy="94.9" r="1.15"/><circle cx="953.4" cy="85.9" r="1.15"/><circle cx="928.2" cy="98.9" r="1.15"/><circle cx="1000.1" cy="104.2" r="1.15"/><circle cx="952.7" cy="107.8" r="1.15"/><circle cx="1006.0" cy="108.5" r="1.15"/><circle cx="1042.1" cy="121.8" r="1.15"/><circle cx="986.1" cy="113.3" r="1.15"/><circle cx="981.8" cy="115.8" r="1.15"/><circle cx="969.4" cy="123.0" r="1.15"/><circle cx="1000.5" cy="141.3" r="1.15"/><circle cx="919.5" cy="46.0" r="1.15"/><circle cx="966.0" cy="100.0" r="1.15"/><circle cx="950.7" cy="105.1" r="1.15"/><circle cx="980.7" cy="105.9" r="1.15"/><circle cx="841.1" cy="126.1" r="1.15"/><circle cx="1046.8" cy="107.1" r="1.15"/></g>
<path d="M809.5 285L808.9 288.3L808 291.5L806.6 294.5L804.9 297.5L802.9 300.1L800.6 302.6L798 304.7L795.2 306.5L792.2 307.9L789 308.9L785.8 309.6L782.5 309.8L779.3 309.6L776.1 308.9L773 307.9L770.2 306.5L767.5 304.7L765.2 302.6L763.2 300.1L761.5 297.5L760.3 294.5L759.5 291.5L759.2 288.3L759.4 285L760 281.8L761.1 278.5L762.6 275.4L764.5 272.4L766.8 269.7L769.4 267.2L772.3 264.9L775.4 263.1L778.6 261.6L781.9 260.5L785.3 259.8L788.6 259.6L791.8 259.8L794.9 260.5L797.8 261.6L800.4 263.1L802.8 264.9L804.8 267.2L806.6 269.7L807.9 272.4L808.9 275.4L809.5 278.5L809.7 281.8Z" fill="none" stroke="#ff1300" stroke-width="2.1"/>
<path d="M640.1 270L638.5 273.3L636.7 276.5L634.5 279.5L632.1 282.4L629.4 285.1L626.6 287.5L623.5 289.6L620.4 291.4L617.1 292.8L613.8 293.8L610.4 294.4L607.1 294.6L603.9 294.4L600.8 293.8L598 292.8L595.4 291.4L593.1 289.6L591.2 287.5L589.7 285.1L588.7 282.4L588.2 279.5L588.2 276.5L588.8 273.3L589.9 270L591.6 266.7L593.7 263.5L596.3 260.4L599.3 257.4L602.6 254.6L606.2 252.1L610 249.8L613.8 248L617.7 246.5L621.4 245.4L625.1 244.7L628.5 244.5L631.6 244.7L634.4 245.4L636.8 246.5L638.8 248L640.4 249.8L641.6 252.1L642.4 254.6L642.7 257.4L642.6 260.4L642.1 263.5L641.3 266.7Z" fill="none" stroke="#ffb20d" stroke-width="2.1"/>
<path d="M641.4 229.6L638.6 232.9L635.5 236L632.2 239.1L628.7 241.9L625.1 244.5L621.3 246.9L617.5 248.9L613.7 250.7L609.9 252L606.2 253L602.6 253.6L599.2 253.8L596.1 253.6L593.2 253L590.7 252L588.7 250.7L587 248.9L585.9 246.9L585.3 244.5L585.3 241.9L585.9 239.1L587.1 236L588.8 232.9L591.2 229.6L594.1 226.4L597.5 223.1L601.3 220L605.5 216.9L609.9 214.1L614.5 211.5L619.2 209.2L623.8 207.3L628.3 205.7L632.5 204.6L636.4 203.9L639.9 203.7L643 203.9L645.5 204.6L647.4 205.7L648.8 207.3L649.7 209.2L649.9 211.5L649.7 214.1L648.9 216.9L647.6 220L645.9 223.1L643.8 226.4Z" fill="none" stroke="#e010ff" stroke-width="2.1"/>
<path d="M712.9 114L705.9 117L698.9 119.8L691.9 122.5L685 124.9L678.3 127.2L671.8 129.2L665.7 130.9L660 132.3L654.7 133.4L650 134.3L645.9 134.7L642.4 134.9L639.6 134.7L637.6 134.3L636.3 133.4L635.9 132.3L636.3 130.9L637.7 129.2L639.9 127.2L643 124.9L647 122.5L651.9 119.8L657.7 117L664.2 114L671.4 110.9L679.3 107.7L687.6 104.6L696.2 101.5L705 98.5L713.8 95.8L722.2 93.2L730.2 91L737.4 89.2L743.7 87.8L748.8 87L752.6 86.7L755.1 87L756.1 87.8L755.9 89.2L754.4 91L751.7 93.2L748.1 95.8L743.6 98.5L738.4 101.5L732.6 104.6L726.4 107.7L719.8 110.9Z" fill="none" stroke="#ee8df0" stroke-width="2.1"/>
<path d="M791.9 247.8L790.7 251.1L789.2 254.3L787.3 257.3L785.1 260.2L782.7 262.8L780 265.2L777 267.3L773.9 269L770.7 270.4L767.4 271.4L764.1 272L760.8 272.2L757.5 272L754.4 271.4L751.6 270.4L748.9 269L746.6 267.3L744.6 265.2L742.9 262.8L741.7 260.2L741 257.3L740.8 254.3L741 251.1L741.7 247.8L742.9 244.6L744.6 241.3L746.7 238.2L749.1 235.2L752 232.4L755 229.8L758.3 227.5L761.8 225.6L765.3 224.1L768.9 223L772.3 222.3L775.7 222.1L778.9 222.3L781.8 223L784.5 224.1L786.8 225.6L788.8 227.5L790.5 229.8L791.7 232.4L792.6 235.2L793 238.2L793 241.3L792.6 244.6Z" fill="none" stroke="#a4ff28" stroke-width="2.1"/>
<path d="M598.4 225.5h5.6M601.2 222.7v5.6M610.9 223.0h5.6M613.7 220.2v5.6M616.3 229.7h5.6M619.1 226.9v5.6M618.6 234.3h5.6M621.4 231.5v5.6M623.3 232.0h5.6M626.1 229.2v5.6M636.5 227.0h5.6M639.3 224.2v5.6M600.7 226.5h5.6M603.5 223.7v5.6M615.2 231.0h5.6M618.0 228.2v5.6M621.2 233.5h5.6M624.0 230.7v5.6M612.2 224.0h5.6M615.0 221.2v5.6M614.7 270.9h5.6M617.5 268.1v5.6M619.4 274.8h5.6M622.2 272.0v5.6M628.7 272.1h5.6M631.5 269.3v5.6M609.3 268.5h5.6M612.1 265.7v5.6M616.2 272.0h5.6M619.0 269.2v5.6M618.2 273.5h5.6M621.0 270.7v5.6M615.7 271.5h5.6M618.5 268.7v5.6M620.2 275.5h5.6M623.0 272.7v5.6M613.2 270.0h5.6M616.0 267.2v5.6M617.7 273.0h5.6M620.5 270.2v5.6M627.2 272.5h5.6M630.0 269.7v5.6M766.4 279.4h5.6M769.2 276.6v5.6M768.7 281.8h5.6M771.5 279.0v5.6M771.0 283.3h5.6M773.8 280.5v5.6M773.4 277.1h5.6M776.2 274.3v5.6M772.6 284.9h5.6M775.4 282.1v5.6M787.4 286.4h5.6M790.2 283.6v5.6M793.6 287.2h5.6M796.4 284.4v5.6M797.5 284.1h5.6M800.3 281.3v5.6M801.4 283.3h5.6M804.2 280.5v5.6M799.8 291.9h5.6M802.6 289.1v5.6M767.7 280.5h5.6M770.5 277.7v5.6M769.7 283.0h5.6M772.5 280.2v5.6M771.7 282.0h5.6M774.5 279.2v5.6M774.2 279.0h5.6M777.0 276.2v5.6M795.2 286.0h5.6M798.0 283.2v5.6M798.7 285.0h5.6M801.5 282.2v5.6M800.2 289.0h5.6M803.0 286.2v5.6M791.2 287.0h5.6M794.0 284.2v5.6M768.2 278.5h5.6M771.0 275.7v5.6M770.2 285.5h5.6M773.0 282.7v5.6M773.7 284.0h5.6M776.5 281.2v5.6M796.2 288.0h5.6M799.0 285.2v5.6M702.2 104.0h5.6M705.0 101.2v5.6M700.2 106.5h5.6M703.0 103.7v5.6M704.2 103.0h5.6M707.0 100.2v5.6M778.0 250.3h5.6M780.8 247.5v5.6" stroke="#ff0000" stroke-width="0.9" fill="none"/>
<g filter="url(#nf)" font-family="Liberation Sans, sans-serif" font-size="10.6" fill="#fff"><text x="774.9" y="288.0" textLength="19.3" lengthAdjust="spacingAndGlyphs">STA</text><text x="605.9" y="272.9" textLength="18.5" lengthAdjust="spacingAndGlyphs">ORI</text><text x="606.4" y="232.1" textLength="21.2" lengthAdjust="spacingAndGlyphs">EGE</text><text x="684.2" y="114.1" textLength="23.1" lengthAdjust="spacingAndGlyphs">OCU</text><text x="757.0" y="250.5" textLength="20.0" lengthAdjust="spacingAndGlyphs">CTA</text></g>
<g filter="url(#nf)" font-family="Liberation Mono, monospace" font-size="13.9" fill="#fff"><text x="315" y="29.4" textLength="50.2" lengthAdjust="spacingAndGlyphs" xml:space="preserve">HR001E</text><text x="315" y="42.7" textLength="317.8" lengthAdjust="spacingAndGlyphs" xml:space="preserve">Beg: 20251015 17:20:14 (sol = 202.25°)</text><text x="315" y="56.6" textLength="317.8" lengthAdjust="spacingAndGlyphs" xml:space="preserve">End: 20251016 04:27:51 (sol = 202.71°)</text><text x="315" y="68.8" textLength="317.8" lengthAdjust="spacingAndGlyphs" xml:space="preserve">--------------------------------------</text><text x="315" y="81.5" textLength="66.9" lengthAdjust="spacingAndGlyphs" xml:space="preserve">...: 100</text><text x="315" y="94.8" textLength="58.5" lengthAdjust="spacingAndGlyphs" xml:space="preserve">STA: 24</text><text x="315" y="107.9" textLength="58.5" lengthAdjust="spacingAndGlyphs" xml:space="preserve">ORI: 11</text><text x="315" y="121.2" textLength="58.5" lengthAdjust="spacingAndGlyphs" xml:space="preserve">EGE: 10</text><text x="315" y="134.5" textLength="50.2" lengthAdjust="spacingAndGlyphs" xml:space="preserve">OCU: 3</text><text x="315" y="147.7" textLength="50.2" lengthAdjust="spacingAndGlyphs" xml:space="preserve">CTA: 1</text></g>
<rect x="0" y="636.3" width="1800" height="263.70000000000005" fill="#000"/>
<g filter="url(#nf)" font-family="Liberation Sans, sans-serif" font-size="31.0" fill="#fff" fill-opacity="0.31"><text transform="translate(149.2 642.7) rotate(-90)" text-anchor="end" textLength="54.5" lengthAdjust="spacingAndGlyphs">APR</text><text transform="translate(294.2 642.7) rotate(-90)" text-anchor="end" textLength="57.2" lengthAdjust="spacingAndGlyphs">MAY</text><text transform="translate(437.2 642.7) rotate(-90)" text-anchor="end" textLength="48.8" lengthAdjust="spacingAndGlyphs">JUN</text><text transform="translate(576.7 642.7) rotate(-90)" text-anchor="end" textLength="43.6" lengthAdjust="spacingAndGlyphs">JUL</text><text transform="translate(723.7 642.7) rotate(-90)" text-anchor="end" textLength="60.3" lengthAdjust="spacingAndGlyphs">AUG</text><text transform="translate(872.3 642.7) rotate(-90)" text-anchor="end" textLength="51.4" lengthAdjust="spacingAndGlyphs">SEP</text><text transform="translate(1016.3 642.7) rotate(-90)" text-anchor="end" textLength="57.7" lengthAdjust="spacingAndGlyphs">OCT</text><text transform="translate(1169.5 642.7) rotate(-90)" text-anchor="end" textLength="60.5" lengthAdjust="spacingAndGlyphs">NOV</text><text transform="translate(1318.2 642.7) rotate(-90)" text-anchor="end" textLength="57.8" lengthAdjust="spacingAndGlyphs">DEC</text><text transform="translate(1469.5 642.7) rotate(-90)" text-anchor="end" textLength="47.0" lengthAdjust="spacingAndGlyphs">JAN</text><text transform="translate(1628.6 642.7) rotate(-90)" text-anchor="end" textLength="52.1" lengthAdjust="spacingAndGlyphs">FEB</text><text transform="translate(1766.1 642.7) rotate(-90)" text-anchor="end" textLength="61.7" lengthAdjust="spacingAndGlyphs">MAR</text></g>
<path d="M106 833.95H129M165 833.95H345M366 833.95H625M635 833.95H786M807 833.95H899M920 833.95H973M984 833.95H1066M1082 833.95H1203M1244 833.95H1326M1337 833.95H1355M1381 833.95H1444M1459 833.95H1512M1523 833.95H1547M1724 833.95H1748M1758 833.95H1782" stroke="#ee8df0" stroke-width="4.2" fill="none"/>
<path d="M165 818.0H188M223 818.0H286M312 818.0H340M366 818.0H492M508 818.0H654M704 818.0H737M773 818.0H845M871 818.0H988M1003 818.0H1017M1062 818.0H1213M1244 818.0H1267M1293 818.0H1316M1342 818.0H1365M1386 818.0H1429M1459 818.0H1483M1548 818.0H1571" stroke="#e010ff" stroke-width="4.2" fill="none"/>
<path d="M165 801.95H188M258 801.95H487M508 801.95H615M626 801.95H718M729 801.95H826M949 801.95H1149M1160 801.95H1248M1258 801.95H1444M1459 801.95H1483M1552 801.95H1576" stroke="#ff1300" stroke-width="4.2" fill="none"/>
<path d="M194 785.0H218M321 785.0H507M518 785.0H541M557 785.0H683M807 785.0H831M954 785.0H973M988 785.0H1125M1155 785.0H1218M1244 785.0H1267M1317 785.0H1341M1396 785.0H1419M1464 785.0H1650" stroke="#ffb20d" stroke-width="4.2" fill="none"/>
<path d="M341 769.0H370M410 769.0H448M469 769.0H492M527 769.0H546M562 769.0H590M616 769.0H649M959 769.0H988M1062 769.0H1086M1101 769.0H1125M1160 769.0H1194M1248 769.0H1272M1425 769.0H1512" stroke="#fff000" stroke-width="4.2" fill="none"/>
<path d="M420 752.05H443M532 752.05H556M567 752.05H590M621 752.05H742M969 752.05H1135M1185 752.05H1346M1469 752.05H1493" stroke="#a4ff28" stroke-width="4.2" fill="none"/>
<path d="M429 736.05H453M576 736.05H733M993 736.05H1105M1116 736.05H1223M1263 736.05H1292M1489 736.05H1512" stroke="#59d200" stroke-width="4.2" fill="none"/>
<path d="M591 720.05H615M655 720.05H772M1072 720.05H1243M1263 720.05H1287" stroke="#00fa88" stroke-width="4.2" fill="none"/>
<path d="M596 703.05H733M1091 703.05H1120M1199 703.05H1223M1273 703.05H1326" stroke="#00d7ff" stroke-width="4.2" fill="none"/>
<path d="M1111 687.05H1135" stroke="#0016c0" stroke-width="4.2" fill="none"/>
<g fill="none" stroke="#c8c8c8" stroke-width="2.08" stroke-opacity="0.48" stroke-dasharray="2.08 3.45"><path d="M73.75 842.4L73.75 641.3"/><path d="M218 842.4L218 641.3"/><path d="M365 842.4L365 641.3"/><path d="M504.75 842.4L504.75 641.3"/><path d="M650 842.4L650 641.3"/><path d="M797 842.4L797 641.3"/><path d="M940 842.4L940 641.3"/><path d="M1090.75 842.4L1090.75 641.3"/><path d="M1239 842.4L1239 641.3"/><path d="M1394 842.4L1394 641.3"/><path d="M1548 842.4L1548 641.3"/><path d="M1687 842.4L1687 641.3"/></g>
<path d="M1011.4 842.4V641.3M1014.5 842.4V641.3" stroke="#ff0000" stroke-width="1.4" stroke-dasharray="5.14 2.22" fill="none"/>
<path d="M113.0 833.95h8M117 830.0v8M241.0 833.95h8M245 830.0v8M510.5 833.95h8M514.5 830.0v8M706.5 833.95h8M710.5 830.0v8M833.0 833.95h8M837 830.0v8M962.0 833.95h8M966 830.0v8M986.0 833.95h8M990 830.0v8M1116.0 833.95h8M1120 830.0v8M1295.0 833.95h8M1299 830.0v8M1342.0 833.95h8M1346 830.0v8M1413.0 833.95h8M1417 830.0v8M1482.0 833.95h8M1486 830.0v8M1531.0 833.95h8M1535 830.0v8M1732.0 833.95h8M1736 830.0v8M1765.6 833.95h8M1769.6 830.0v8M172.0 818.0h8M176 814.0v8M256.0 818.0h8M260 814.0v8M323.0 818.0h8M327 814.0v8M437.0 818.0h8M441 814.0v8M599.0 818.0h8M603 814.0v8M717.0 818.0h8M721 814.0v8M793.0 818.0h8M797 814.0v8M939.0 818.0h8M943 814.0v8M1006.0 818.0h8M1010 814.0v8M1153.0 818.0h8M1157 814.0v8M1251.0 818.0h8M1255 814.0v8M1300.0 818.0h8M1304 814.0v8M1349.0 818.0h8M1353 814.0v8M1402.5 818.0h8M1406.5 814.0v8M1467.0 818.0h8M1471 814.0v8M1555.0 818.0h8M1559 814.0v8M174.0 801.95h8M178 798.0v8M378.0 801.95h8M382 798.0v8M545.0 801.95h8M549 798.0v8M682.0 801.95h8M686 798.0v8M741.0 801.95h8M745 798.0v8M1075.0 801.95h8M1079 798.0v8M1217.0 801.95h8M1221 798.0v8M1305.0 801.95h8M1309 798.0v8M1467.0 801.95h8M1471 798.0v8M1560.0 801.95h8M1564 798.0v8M201.5 785.0h8M205.5 781.0v8M400.0 785.0h8M404 781.0v8M525.0 785.0h8M529 781.0v8M639.0 785.0h8M643 781.0v8M815.0 785.0h8M819 781.0v8M959.0 785.0h8M963 781.0v8M1040.0 785.0h8M1044 781.0v8M1188.0 785.0h8M1192 781.0v8M1251.0 785.0h8M1255 781.0v8M1325.0 785.0h8M1329 781.0v8M1403.0 785.0h8M1407 781.0v8M1546.0 785.0h8M1550 781.0v8M356.0 769.0h8M360 765.0v8M426.0 769.0h8M430 765.0v8M476.0 769.0h8M480 765.0v8M535.0 769.0h8M539 765.0v8M571.0 769.0h8M575 765.0v8M631.0 769.0h8M635 765.0v8M974.0 769.0h8M978 765.0v8M1070.0 769.0h8M1074 765.0v8M1109.0 769.0h8M1113 765.0v8M1178.0 769.0h8M1182 765.0v8M1256.0 769.0h8M1260 765.0v8M1467.0 769.0h8M1471 765.0v8M427.0 752.05h8M431 748.0v8M540.0 752.05h8M544 748.0v8M574.0 752.05h8M578 748.0v8M704.0 752.05h8M708 748.0v8M1093.5 752.05h8M1097.5 748.0v8M1271.0 752.05h8M1275 748.0v8M1477.0 752.05h8M1481 748.0v8M437.0 736.05h8M441 732.0v8M631.0 736.05h8M635 732.0v8M1039.0 736.05h8M1043 732.0v8M1168.0 736.05h8M1172 732.0v8M1275.0 736.05h8M1279 732.0v8M1497.0 736.05h8M1501 732.0v8M599.0 720.05h8M603 716.0v8M727.0 720.05h8M731 716.0v8M1188.0 720.05h8M1192 716.0v8M1271.0 720.05h8M1275 716.0v8M686.5 703.05h8M690.5 699.0v8M1102.0 703.05h8M1106 699.0v8M1207.0 703.05h8M1211 699.0v8M1300.0 703.05h8M1304 699.0v8M1119.0 687.05h8M1123 683.0v8" stroke="#fff" stroke-width="2.2" fill="none"/>
<g filter="url(#nf)" font-family="Liberation Sans, sans-serif" font-size="10.6" fill="#fff"><text x="107.5" y="831.9" textLength="20.0" lengthAdjust="spacingAndGlyphs">KSE</text><text x="245.4" y="831.9" textLength="19.3" lengthAdjust="spacingAndGlyphs">ETA</text><text x="484.4" y="831.9" textLength="22.2" lengthAdjust="spacingAndGlyphs">NZC</text><text x="699.1" y="831.9" textLength="22.8" lengthAdjust="spacingAndGlyphs">NDA</text><text x="843.3" y="831.9" textLength="19.5" lengthAdjust="spacingAndGlyphs">SPE</text><text x="933.8" y="831.9" textLength="22.4" lengthAdjust="spacingAndGlyphs">ARD</text><text x="1014.4" y="831.9" textLength="21.2" lengthAdjust="spacingAndGlyphs">EGE</text><text x="1132.3" y="831.9" textLength="20.5" lengthAdjust="spacingAndGlyphs">NTA</text><text x="1271.3" y="831.9" textLength="25.0" lengthAdjust="spacingAndGlyphs">MON</text><text x="1333.1" y="831.9" textLength="21.5" lengthAdjust="spacingAndGlyphs">URS</text><text x="1401.8" y="831.9" textLength="21.3" lengthAdjust="spacingAndGlyphs">AHY</text><text x="1473.2" y="831.9" textLength="24.7" lengthAdjust="spacingAndGlyphs">GUM</text><text x="1523.8" y="831.9" textLength="22.4" lengthAdjust="spacingAndGlyphs">OHY</text><text x="1725.2" y="831.9" textLength="21.6" lengthAdjust="spacingAndGlyphs">XHE</text><text x="1761.6" y="831.9" textLength="16.8" lengthAdjust="spacingAndGlyphs">EVI</text><text x="166.1" y="814.9" textLength="20.7" lengthAdjust="spacingAndGlyphs">AVB</text><text x="245.8" y="814.9" textLength="17.4" lengthAdjust="spacingAndGlyphs">ELY</text><text x="312.3" y="814.9" textLength="23.4" lengthAdjust="spacingAndGlyphs">CAM</text><text x="420.8" y="814.9" textLength="21.3" lengthAdjust="spacingAndGlyphs">SSG</text><text x="568.0" y="814.9" textLength="20.7" lengthAdjust="spacingAndGlyphs">PCA</text><text x="709.1" y="814.9" textLength="22.8" lengthAdjust="spacingAndGlyphs">AUD</text><text x="797.0" y="814.9" textLength="22.0" lengthAdjust="spacingAndGlyphs">AUR</text><text x="919.8" y="814.9" textLength="21.8" lengthAdjust="spacingAndGlyphs">DSX</text><text x="998.4" y="814.9" textLength="23.1" lengthAdjust="spacingAndGlyphs">OCU</text><text x="1126.5" y="814.9" textLength="22.0" lengthAdjust="spacingAndGlyphs">OER</text><text x="1243.4" y="814.9" textLength="22.9" lengthAdjust="spacingAndGlyphs">DKD</text><text x="1293.6" y="814.9" textLength="21.8" lengthAdjust="spacingAndGlyphs">DSV</text><text x="1344.5" y="814.9" textLength="17.9" lengthAdjust="spacingAndGlyphs">ALY</text><text x="1399.8" y="814.9" textLength="15.5" lengthAdjust="spacingAndGlyphs">JLE</text><text x="1460.4" y="814.9" textLength="21.2" lengthAdjust="spacingAndGlyphs">SCC</text><text x="1548.6" y="814.9" textLength="19.7" lengthAdjust="spacingAndGlyphs">FEV</text><text x="167.5" y="798.9" textLength="18.0" lengthAdjust="spacingAndGlyphs">LYR</text><text x="362.8" y="798.9" textLength="19.3" lengthAdjust="spacingAndGlyphs">JMC</text><text x="550.5" y="798.9" textLength="15.9" lengthAdjust="spacingAndGlyphs">JPE</text><text x="661.0" y="798.9" textLength="20.4" lengthAdjust="spacingAndGlyphs">PAU</text><text x="765.3" y="798.9" textLength="18.0" lengthAdjust="spacingAndGlyphs">NIA</text><text x="1039.4" y="798.9" textLength="19.3" lengthAdjust="spacingAndGlyphs">STA</text><text x="1192.9" y="798.9" textLength="24.2" lengthAdjust="spacingAndGlyphs">NOO</text><text x="1341.3" y="798.9" textLength="24.5" lengthAdjust="spacingAndGlyphs">COM</text><text x="1459.8" y="798.9" textLength="22.3" lengthAdjust="spacingAndGlyphs">NCC</text><text x="1553.7" y="798.9" textLength="20.6" lengthAdjust="spacingAndGlyphs">FED</text><text x="197.0" y="782.9" textLength="18.0" lengthAdjust="spacingAndGlyphs">HVI</text><text x="403.0" y="782.9" textLength="17.4" lengthAdjust="spacingAndGlyphs">ARI</text><text x="519.0" y="782.9" textLength="21.0" lengthAdjust="spacingAndGlyphs">SZC</text><text x="607.7" y="782.9" textLength="20.7" lengthAdjust="spacingAndGlyphs">CAP</text><text x="807.5" y="782.9" textLength="22.0" lengthAdjust="spacingAndGlyphs">NUE</text><text x="950.9" y="782.9" textLength="21.8" lengthAdjust="spacingAndGlyphs">OCT</text><text x="1050.2" y="782.9" textLength="18.5" lengthAdjust="spacingAndGlyphs">ORI</text><text x="1174.3" y="782.9" textLength="24.3" lengthAdjust="spacingAndGlyphs">AMO</text><text x="1244.7" y="782.9" textLength="21.6" lengthAdjust="spacingAndGlyphs">DPC</text><text x="1320.3" y="782.9" textLength="17.3" lengthAdjust="spacingAndGlyphs">XVI</text><text x="1396.0" y="782.9" textLength="23.0" lengthAdjust="spacingAndGlyphs">QUA</text><text x="1548.3" y="782.9" textLength="22.3" lengthAdjust="spacingAndGlyphs">AAN</text><text x="342.2" y="765.9" textLength="20.5" lengthAdjust="spacingAndGlyphs">TAH</text><text x="422.4" y="765.9" textLength="16.8" lengthAdjust="spacingAndGlyphs">JEA</text><text x="474.3" y="765.9" textLength="12.4" lengthAdjust="spacingAndGlyphs">JIP</text><text x="529.4" y="765.9" textLength="19.2" lengthAdjust="spacingAndGlyphs">PPS</text><text x="568.0" y="765.9" textLength="21.0" lengthAdjust="spacingAndGlyphs">ZCS</text><text x="620.8" y="765.9" textLength="23.3" lengthAdjust="spacingAndGlyphs">GDR</text><text x="959.3" y="765.9" textLength="22.0" lengthAdjust="spacingAndGlyphs">DRA</text><text x="1062.0" y="765.9" textLength="21.9" lengthAdjust="spacingAndGlyphs">LUM</text><text x="1102.4" y="765.9" textLength="21.2" lengthAdjust="spacingAndGlyphs">RPU</text><text x="1165.5" y="765.9" textLength="21.3" lengthAdjust="spacingAndGlyphs">THA</text><text x="1249.0" y="765.9" textLength="20.5" lengthAdjust="spacingAndGlyphs">PSU</text><text x="1460.6" y="765.9" textLength="20.8" lengthAdjust="spacingAndGlyphs">XCB</text><text x="423.0" y="749.9" textLength="17.1" lengthAdjust="spacingAndGlyphs">JRC</text><text x="532.9" y="749.9" textLength="22.2" lengthAdjust="spacingAndGlyphs">CAN</text><text x="568.5" y="749.9" textLength="20.0" lengthAdjust="spacingAndGlyphs">FAN</text><text x="671.4" y="749.9" textLength="20.1" lengthAdjust="spacingAndGlyphs">PER</text><text x="1038.8" y="749.9" textLength="20.0" lengthAdjust="spacingAndGlyphs">CTA</text><text x="1253.4" y="749.9" textLength="22.2" lengthAdjust="spacingAndGlyphs">HYD</text><text x="1469.1" y="749.9" textLength="23.8" lengthAdjust="spacingAndGlyphs">XUM</text><text x="429.6" y="732.9" textLength="22.7" lengthAdjust="spacingAndGlyphs">COR</text><text x="646.4" y="732.9" textLength="21.6" lengthAdjust="spacingAndGlyphs">SDA</text><text x="1040.1" y="732.9" textLength="17.9" lengthAdjust="spacingAndGlyphs">LMI</text><text x="1156.0" y="732.9" textLength="20.6" lengthAdjust="spacingAndGlyphs">LEO</text><text x="1264.1" y="732.9" textLength="20.8" lengthAdjust="spacingAndGlyphs">EHY</text><text x="1489.3" y="732.9" textLength="21.0" lengthAdjust="spacingAndGlyphs">ECV</text><text x="594.3" y="716.9" textLength="17.3" lengthAdjust="spacingAndGlyphs">JXA</text><text x="704.7" y="716.9" textLength="21.6" lengthAdjust="spacingAndGlyphs">KCG</text><text x="1146.0" y="716.9" textLength="22.9" lengthAdjust="spacingAndGlyphs">AND</text><text x="1263.5" y="716.9" textLength="23.0" lengthAdjust="spacingAndGlyphs">DAD</text><text x="657.3" y="700.9" textLength="16.9" lengthAdjust="spacingAndGlyphs">ERI</text><text x="1097.8" y="700.9" textLength="20.4" lengthAdjust="spacingAndGlyphs">SLD</text><text x="1200.0" y="700.9" textLength="22.1" lengthAdjust="spacingAndGlyphs">ORS</text><text x="1287.7" y="700.9" textLength="23.6" lengthAdjust="spacingAndGlyphs">GEM</text><text x="1111.4" y="683.9" textLength="23.2" lengthAdjust="spacingAndGlyphs">KUM</text></g>
<rect x="19.5" y="641.3" width="1766.0" height="201.10000000000002" fill="none" stroke="#fff" stroke-width="1.1"/>
<path d="M19.5 842.4v5.4M264.8 842.4v5.4M510.1 842.4v5.4M755.3 842.4v5.4M1000.6 842.4v5.4M1245.9 842.4v5.4M1491.2 842.4v5.4M1736.4 842.4v5.4" stroke="#fff" stroke-width="1.1" fill="none"/>
<g filter="url(#nf)" font-family="Liberation Sans, sans-serif" font-size="14.1" fill="#fff"><text x="15.3" y="862.1" textLength="8.5" lengthAdjust="spacingAndGlyphs">0</text><text x="256.3" y="862.1" textLength="17.0" lengthAdjust="spacingAndGlyphs">50</text><text x="497.3" y="862.1" textLength="25.5" lengthAdjust="spacingAndGlyphs">100</text><text x="742.6" y="862.1" textLength="25.5" lengthAdjust="spacingAndGlyphs">150</text><text x="987.9" y="862.1" textLength="25.5" lengthAdjust="spacingAndGlyphs">200</text><text x="1233.2" y="862.1" textLength="25.5" lengthAdjust="spacingAndGlyphs">250</text><text x="1478.4" y="862.1" textLength="25.5" lengthAdjust="spacingAndGlyphs">300</text><text x="1723.7" y="862.1" textLength="25.5" lengthAdjust="spacingAndGlyphs">350</text><text x="829.0" y="881.7" textLength="146.7" lengthAdjust="spacingAndGlyphs">Solar longitude (deg)</text></g>
</svg>
</body></html>
